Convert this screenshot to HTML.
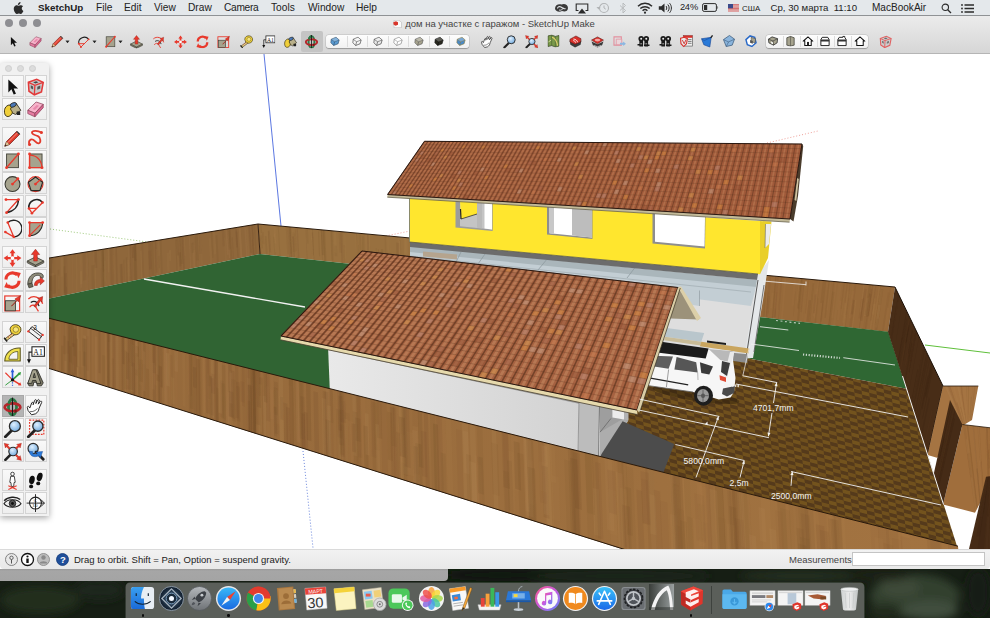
<!DOCTYPE html>
<html>
<head>
<meta charset="utf-8">
<title>SketchUp</title>
<style>
html,body{margin:0;padding:0;}
body{width:990px;height:618px;overflow:hidden;position:relative;background:#1b2418;font-family:"Liberation Sans",sans-serif;}
.abs{position:absolute;}
#desktop{left:0;top:569px;width:990px;height:48px;background:#1a2317;overflow:hidden;}
#menubar{left:0;top:0;width:990px;height:15px;background:#e4e8eb;box-shadow:0 .5px 0 .5px rgba(120,124,128,.8);color:#222;font-size:10.2px;line-height:15px;white-space:nowrap;}
#menubar span{position:absolute;top:0;}
#win{left:0;top:15px;width:990px;height:554px;background:#fff;}
#titlebar{left:0;top:0;width:990px;height:39px;background:linear-gradient(#ececec,#d6d6d6);border-bottom:1px solid #b5b5b5;box-sizing:border-box;}
#title{left:5px;top:2.8px;width:990px;text-align:center;font-size:9.5px;color:#444;line-height:12px;}
.tl{width:8px;height:8px;border-radius:50%;background:#8e8e92;top:4px;}
#status{left:0;top:534px;width:990px;height:20px;border-radius:0 0 4px 4px;background:linear-gradient(#f2f2f2,#e8e8e8);border-top:1px solid #dadada;box-sizing:border-box;font-size:9.5px;color:#222;}
#palette{left:0;top:63px;width:49px;height:453px;background:#f1f1f1;box-shadow:0 2px 6px rgba(0,0,0,.35);border-radius:3px 3px 0 0;}
#scene{left:0;top:0;}
#toolbar svg{transform:scale(.92);}
.seg{background:linear-gradient(#fdfdfd,#f1f1f1);border-radius:3px;box-shadow:0 0 0 .5px rgba(0,0,0,.12),0 .5px 1px rgba(0,0,0,.25);}
.cell{position:absolute;width:22px;height:22px;box-sizing:border-box;border:1px solid #d4d4d4;background:linear-gradient(#f9f9f9,#eeeeee);}
.cell.sel{background:#b4b4b4;border-color:#a8a8a8;}
.ptl{position:absolute;top:2px;width:7px;height:7px;border-radius:50%;background:#dcdcdc;border:.5px solid #cfcfcf;box-sizing:border-box}

</style>
</head>
<body>
<svg width="0" height="0" style="position:absolute">
<defs>
<radialGradient id="lens" cx=".4" cy=".35" r=".7"><stop offset="0" stop-color="#dff0ff"/><stop offset="1" stop-color="#6fa8dc"/></radialGradient>
<symbol id="i-sel" viewBox="0 0 16 16"><path d="M4.5 2v11l2.6-2.6 1.9 4.4 1.9-.8-1.9-4.3h3.7z" fill="#111"/></symbol>
<symbol id="i-eraser" viewBox="0 0 16 16"><path d="M1.5 9.5 8.5 2.5 14.5 4.5 7.5 12z" fill="#f8b4cb" stroke="#8a4058" stroke-width=".6"/><path d="M1.5 9.5 7.5 12v3L1.5 12.3z" fill="#e57ba1" stroke="#8a4058" stroke-width=".6"/><path d="M7.5 12l7-7.5v2.8L7.5 15z" fill="#d9658f" stroke="#8a4058" stroke-width=".6"/><path d="M5.5 8.5 9 5l2 .7-3.4 3.6z" fill="#e88aac"/></symbol>
<symbol id="i-pencil" viewBox="0 0 16 16"><path d="M1.5 14.5 3 10.5 11.5 2 14 4.5 5.5 13z" fill="#e23a2c" stroke="#6a1a14" stroke-width=".6"/><path d="M12 1.6l2.4 2.4-.9.9L11.1 2.5z" fill="#3a3a3a"/><path d="M1.5 14.5 3 10.5 5.5 13z" fill="#e3c79a" stroke="#6a4a2a" stroke-width=".4"/><path d="M1.5 14.5l.6-1.7 1.1 1.1z" fill="#222"/><path d="M4 11.5 12.3 3.2" stroke="#f79a8a" stroke-width=".8"/></symbol>
<symbol id="i-freehand" viewBox="0 0 16 16"><path d="M3 13c-1.5-3 1-5 3-4s3 4 5 3 1-5-1-6-5-1-5-3 5-2 8 0" fill="none" stroke="#e23a2c" stroke-width="1.5"/><circle cx="3" cy="13" r="1.3" fill="#e23a2c"/><circle cx="13" cy="3" r="1.3" fill="#e23a2c"/></symbol>
<symbol id="i-rect" viewBox="0 0 16 16"><rect x="3" y="2.5" width="10" height="11.5" fill="#a6a38e" stroke="#4a4a40" stroke-width=".8"/><path d="M3 14 13 2.5" stroke="#e8392c" stroke-width="1.2"/><circle cx="3" cy="14" r="1.2" fill="#e8392c"/><circle cx="13" cy="2.5" r="1.2" fill="#e8392c"/></symbol>
<symbol id="i-rrect" viewBox="0 0 16 16"><rect x="3" y="2.5" width="10.5" height="11.5" fill="#a6a38e" stroke="#4a4a40" stroke-width=".8"/><path d="M3 2.5v11.5h10.5" stroke="#e8392c" stroke-width="1.2" fill="none"/><path d="M3 3.5c6 0 10 4 10.5 10.5" stroke="#e8392c" stroke-width="1" fill="none"/><circle cx="3" cy="14" r="1.2" fill="#e8392c"/><circle cx="3" cy="2.5" r="1.2" fill="#e8392c"/><circle cx="13.5" cy="14" r="1.2" fill="#e8392c"/></symbol>
<symbol id="i-circle" viewBox="0 0 16 16"><circle cx="8" cy="8.5" r="6.3" fill="#a6a38e" stroke="#3a3a32" stroke-width=".9"/><path d="M8 8.5 12.5 4" stroke="#e8392c" stroke-width="1.1"/><circle cx="8" cy="8.5" r="1.2" fill="#e8392c"/><circle cx="12.5" cy="4" r="1.2" fill="#e8392c"/></symbol>
<symbol id="i-polygon" viewBox="0 0 16 16"><circle cx="8" cy="8.5" r="6.3" fill="none" stroke="#e8392c" stroke-width="1"/><path d="M8 2.5 14 7 11.7 14H4.3L2 7z" fill="#a6a38e" stroke="#2a2a26" stroke-width="1"/><path d="M8 8.5 12.5 4.5" stroke="#e8392c" stroke-width="1.1"/><circle cx="8" cy="8.5" r="1.2" fill="#e8392c"/></symbol>
<symbol id="i-arc" viewBox="0 0 16 16"><path d="M2.5 3h10.5L3 14" stroke="#e8392c" stroke-width="1.1" fill="none"/><path d="M13 3c0 6-4 10-10 11" stroke="#222" stroke-width="1.2" fill="none"/><circle cx="2.5" cy="3" r="1.2" fill="#e8392c"/><circle cx="13" cy="3" r="1.2" fill="#e8392c"/><circle cx="3" cy="14" r="1.2" fill="#e8392c"/></symbol>
<symbol id="i-arc2" viewBox="0 0 16 16"><path d="M2.5 10.5A6.5 6.5 0 0 1 14 5.5" stroke="#222" stroke-width="1.3" fill="none"/><path d="M14 5.5 5 14.5M2.5 10.5 9 10.5M5 14.5 2.5 10.5" stroke="#e8392c" stroke-width="1.1" fill="none"/><circle cx="14" cy="5.5" r="1.1" fill="#e8392c"/><circle cx="5" cy="14.5" r="1.1" fill="#e8392c"/><circle cx="2.5" cy="10.5" r="1.1" fill="#e8392c"/></symbol>
<symbol id="i-arc3" viewBox="0 0 16 16"><path d="M4 3A7 7 0 1 1 9 15" stroke="#222" stroke-width="1.2" fill="none"/><path d="M4 3 9 15 2 11" stroke="#e8392c" stroke-width="1.1" fill="none"/><circle cx="4" cy="3" r="1.1" fill="#e8392c"/><circle cx="9" cy="15" r="1.1" fill="#e8392c"/><circle cx="2" cy="11" r="1.1" fill="#e8392c"/></symbol>
<symbol id="i-pie" viewBox="0 0 16 16"><path d="M3 3h11c0 6-5 11-11 11z" fill="#a6a38e" stroke="#2a2a26" stroke-width=".9"/><path d="M14 3H3v11" stroke="#e8392c" stroke-width="1.1" fill="none"/><path d="M3 14 12 5" stroke="#e8392c" stroke-width="1"/><circle cx="3" cy="3" r="1.2" fill="#e8392c"/><circle cx="14" cy="3" r="1.2" fill="#e8392c"/><circle cx="3" cy="14" r="1.2" fill="#e8392c"/></symbol>
<symbol id="i-move" viewBox="0 0 16 16"><path d="M8 1 10.5 4.5H9v3h3V6l3.5 2.5L12 11V9.5H9v3h1.5L8 16 5.5 12.5H7v-3H4V11L.5 8.5 4 6v1.5h3v-3H5.5z" fill="#e8392c"/><circle cx="8" cy="8.5" r="1.6" fill="#fff"/></symbol>
<symbol id="i-pushpull" viewBox="0 0 16 16"><path d="M1 11 8 7.5 15 11 8 14.5z" fill="#a6a38e" stroke="#3a3a32" stroke-width=".7"/><path d="M1 11v1.5L8 16v-1.5zM15 11v1.5L8 16v-1.5z" fill="#7d7a68" stroke="#3a3a32" stroke-width=".5"/><path d="M8 1 11.5 5.5H9.5V11h-3V5.5H4.5z" fill="#e8392c" stroke="#8a1a12" stroke-width=".4"/></symbol>
<symbol id="i-rotate" viewBox="0 0 16 16"><path d="M2.5 8A5.5 5.5 0 0 1 12 4.2" stroke="#e8392c" stroke-width="2.6" fill="none"/><path d="M13.5 9A5.5 5.5 0 0 1 4 12.8" stroke="#e8392c" stroke-width="2.6" fill="none"/><path d="M10.5 1.5 15 2.5 13 7z" fill="#e8392c"/><path d="M5.5 15.5 1 14.5 3 10z" fill="#e8392c"/></symbol>
<symbol id="i-followme" viewBox="0 0 16 16"><path d="M1.5 12C1.5 6 5 2.5 10 2.5s5 3 4 4.5l-2-1c.5-1-1-1.5-2.5-1.5C7 4.5 5 7 5 11z" fill="#8f8c7a" stroke="#3a3a32" stroke-width=".7"/><path d="M1.5 12 5 11l1 3-3.5 1z" fill="#6d6a5a" stroke="#3a3a32" stroke-width=".6"/><path d="M7 13c0-3 2-5 5-5V6l3.5 3.2L12 12.5v-2c-1.5 0-2.5 1-2.5 2.5z" fill="#e8392c" stroke="#8a1a12" stroke-width=".4"/></symbol>
<symbol id="i-scale" viewBox="0 0 16 16"><rect x="1.5" y="2.5" width="12.5" height="12.5" fill="none" stroke="#e8392c" stroke-width="1"/><rect x="2" y="6.5" width="8.5" height="8.5" fill="#a6a38e" stroke="#3a3a32" stroke-width=".7"/><path d="M7 11 11.5 6.5 10 5 15 2 13 7.5 12 6.3 8 10.5z" fill="#e8392c" stroke="#8a1a12" stroke-width=".4"/></symbol>
<symbol id="i-offset" viewBox="0 0 16 16"><path d="M2 5C6 1.5 12 3 14 9" stroke="#e8392c" stroke-width="1.1" fill="none"/><path d="M4 8c2.5-2 6-1 7 3" stroke="#222" stroke-width="1" fill="none"/><path d="M3 12c2-3 5-2 6 1l1.5 2.5" stroke="#e8392c" stroke-width="1" fill="none"/><path d="M6.5 11 11 5.5 9.8 4.7 14 3 13.5 7.5 12.3 6.6 8 12z" fill="#e8392c" stroke="#8a1a12" stroke-width=".4"/></symbol>
<symbol id="i-tape" viewBox="0 0 16 16"><path d="M6 5.5C6 2.5 9 1 11.5 1.5s4 2.5 3.5 5-3 3.5-5 3.5H7.5z" fill="#f1d33a" stroke="#4a4020" stroke-width=".8"/><circle cx="10.8" cy="5.5" r="2.3" fill="#f8e67a" stroke="#7a6a20" stroke-width=".6"/><path d="M8 8.5 1.5 13.5 2.8 15 9.5 10z" fill="#e9d88a" stroke="#4a4020" stroke-width=".7"/><path d="M1 12.5 3.5 15.5" stroke="#222" stroke-width="1.3"/><path d="M4 11.5l.8 1M5.5 10.4l.8 1M7 9.3l.8 1" stroke="#e8392c" stroke-width=".6"/></symbol>
<symbol id="i-dim" viewBox="0 0 16 16"><path d="M2 7 11 14M5 3 14 10" stroke="#222" stroke-width=".8"/><path d="M4 4.5 13 11.5" stroke="#222" stroke-width=".7"/><path d="M2 7 5 3M11 14 14 10" stroke="#222" stroke-width=".8"/><circle cx="2" cy="7" r="1" fill="#e8392c"/><circle cx="11" cy="14" r="1" fill="#e8392c"/><circle cx="14" cy="10" r="1" fill="#e8392c"/><text x="6" y="5.5" font-size="5.5" font-family="Liberation Sans,sans-serif" fill="#222">3</text></symbol>
<symbol id="i-protractor" viewBox="0 0 16 16"><path d="M1.5 13.5C1.5 7 7 2 14.5 2.5v11z" fill="#efe04a" stroke="#5a5420" stroke-width=".9"/><path d="M5 12c0-3.5 3-6.5 7.5-6.5V12z" fill="#f4f4f4" stroke="#5a5420" stroke-width=".7"/></symbol>
<symbol id="i-text" viewBox="0 0 16 16"><rect x="5" y="1.5" width="10.5" height="8" fill="#fff" stroke="#222" stroke-width=".9"/><text x="6.2" y="8.2" font-size="6.5" font-family="Liberation Serif,serif" fill="#111">A1</text><path d="M5 6H2.5v7" stroke="#222" stroke-width=".9" fill="none"/><path d="M.8 12 2.5 15.5 4.2 12z" fill="#111"/></symbol>
<symbol id="i-axes" viewBox="0 0 16 16"><path d="M8 10 2 4" stroke="#e8392c" stroke-width=".9"/><path d="M8 10 14.5 14" stroke="#e8392c" stroke-width="1.4"/><path d="M12.5 14.5 15.5 14.8 14.5 12z" fill="#e8392c"/><path d="M8 10 14 4.5" stroke="#2e9a3a" stroke-width="1.4"/><path d="M12.3 4.3 15.2 3.3 14.5 6.3z" fill="#2e9a3a"/><path d="M8 10 2 14.5" stroke="#2e9a3a" stroke-width=".8"/><path d="M8 10V2.5" stroke="#2a5ad8" stroke-width="1.4"/><path d="M6.5 3.5 8 .5 9.5 3.5z" fill="#2a5ad8"/><path d="M8 10v5.5" stroke="#2a5ad8" stroke-width="1" stroke-dasharray="1 1"/><circle cx="8" cy="10" r="1.4" fill="#111"/></symbol>
<symbol id="i-3dtext" viewBox="0 0 16 16"><path d="M6.5 1.5h3l5 11-1.5 2.5H9.5L9 12H6.5L6 15H2.5L1.5 13z" fill="#7d7a68" stroke="#2a2a26" stroke-width=".7"/><path d="M5.5 1.5h3L12.5 13H9l-.6-2.5H5.5L4.8 13H1.5zM6 8h2L7 4.5z" fill="#a6a38e" stroke="#2a2a26" stroke-width=".7" fill-rule="evenodd"/></symbol>
<symbol id="i-paint" viewBox="0 0 16 16"><path d="M6 6 11 3.5 15 9.5 10.5 13 6.5 11z" fill="#b9b08a" stroke="#3a3628" stroke-width=".8"/><ellipse cx="8.5" cy="5" rx="3" ry="1.7" transform="rotate(-25 8.5 5)" fill="#4a78b8" stroke="#2a2a26" stroke-width=".7"/><path d="M5.5 5C2 5.5.5 9 1.5 12.5S6 15 7.5 12.5 5 9.5 7 7z" fill="#f0cf3a" stroke="#3a3010" stroke-width=".8"/><path d="M11.5 10.5h3v3h-3z" fill="#222"/></symbol>
<symbol id="i-orbit" viewBox="0 0 16 16"><ellipse cx="8" cy="8.5" rx="3.4" ry="6.6" fill="none" stroke="#2a7a46" stroke-width="2.3"/><ellipse cx="8" cy="8.7" rx="6.6" ry="3.3" fill="none" stroke="#b5262a" stroke-width="2.3"/><path d="M4.9 5.7A3.4 6.6 0 0 1 8 1.9" fill="none" stroke="#2a7a46" stroke-width="2.3"/><path d="M8 .5v15.5" stroke="#1a1a1a" stroke-width="1"/><path d="M9.5 10.3 12.5 11.8 10 13.6z" fill="#7a1518"/></symbol>
<symbol id="i-pan" viewBox="0 0 16 16"><path d="M3.2 9.3 4.8 5c.4-1 1.6-.6 1.4.3L6 6.5 7.3 2.8c.4-1 1.7-.6 1.5.4L8.3 5.5 9.8 2.6c.5-.9 1.7-.4 1.4.6L10.3 6l1.7-2.2c.6-.8 1.6-.1 1.2.8L11 9.5c-.3 2.3-1.5 3.7-2.8 4.6L4.7 15 1.7 11.3l-.6-2.5c-.1-1 1-1.3 1.5-.5z" fill="#fff" stroke="#222" stroke-width=".8" stroke-linejoin="round"/><path d="M3.5 12.2c2.3.6 4.5-.8 6.2-2.6" stroke="#222" stroke-width=".6" fill="none"/></symbol>
<symbol id="i-zoom" viewBox="0 0 16 16"><path d="M7.5 9.5 2 15" stroke="#222" stroke-width="2.4" stroke-linecap="round"/><circle cx="10" cy="6" r="4.6" fill="url(#lens)" stroke="#2a2a2a" stroke-width="1.1"/></symbol>
<symbol id="i-zoomwin" viewBox="0 0 16 16"><rect x="3" y="1" width="12" height="12" fill="none" stroke="#e8392c" stroke-width="1" stroke-dasharray="1.5 1"/><path d="M7.5 9.5 2 15" stroke="#222" stroke-width="2.4" stroke-linecap="round"/><circle cx="10" cy="6" r="4.3" fill="url(#lens)" stroke="#2a2a2a" stroke-width="1.1"/></symbol>
<symbol id="i-zoomext" viewBox="0 0 16 16"><path d="M7 10 2 15" stroke="#222" stroke-width="2.2" stroke-linecap="round"/><circle cx="8.5" cy="8" r="3.6" fill="url(#lens)" stroke="#2a2a2a" stroke-width="1"/><path d="M1 1 5 2 4 3 6 5 5 6 3 4 2 5zM15.5 1 11.5 2l1 1-2 2 1 1 2-2 1 1zM15.5 15.5l-4-1 1-1-2-2 1-1 2 2 1-1z" fill="#e8392c" stroke="#8a1a12" stroke-width=".3"/></symbol>
<symbol id="i-prev" viewBox="0 0 16 16"><circle cx="6" cy="5.5" r="4.3" fill="url(#lens)" stroke="#2a2a2a" stroke-width="1"/><path d="M8.5 8.5 14.5 14.5" stroke="#222" stroke-width="2.4" stroke-linecap="round"/><path d="M3 8c0 4 4 5.5 8 3.5l1 2 2-5.5-5.5.5 1 1.5C7 11 5 10 5.5 8z" fill="#2a7ad8" stroke="#1a4a98" stroke-width=".4"/></symbol>
<symbol id="i-poscam" viewBox="0 0 16 16"><circle cx="8" cy="2.5" r="1.5" fill="#fff" stroke="#222" stroke-width=".7"/><path d="M6.5 4.5h3l.8 5-1 .3-.3 3.2H7l-.3-3.2-1-.3z" fill="#fff" stroke="#222" stroke-width=".7"/><path d="M4.5 12.5 11.5 15.5M11.5 12.5 4.5 15.5" stroke="#e8392c" stroke-width=".9"/></symbol>
<symbol id="i-walk" viewBox="0 0 16 16"><ellipse cx="5" cy="7.5" rx="2.3" ry="3.6" transform="rotate(12 5 7.5)" fill="#111"/><ellipse cx="4.3" cy="13" rx="1.7" ry="1.6" fill="#111"/><ellipse cx="11.5" cy="5" rx="2.3" ry="3.6" transform="rotate(18 11.5 5)" fill="#111"/><ellipse cx="10.3" cy="10.5" rx="1.7" ry="1.6" fill="#111"/></symbol>
<symbol id="i-look" viewBox="0 0 16 16"><path d="M.8 9C3 5 12 4 15.2 9 12 13 4 13 .8 9z" fill="#eee" stroke="#222" stroke-width=".9"/><circle cx="8" cy="8.8" r="2.8" fill="#555" stroke="#111" stroke-width=".6"/><circle cx="8" cy="8.8" r="1.2" fill="#111"/><path d="M1 6.5C4 3 11 2.5 14.5 5.5" stroke="#222" stroke-width="1.2" fill="none"/></symbol>
<symbol id="i-section" viewBox="0 0 16 16"><circle cx="8" cy="8.5" r="5" fill="#fff" stroke="#222" stroke-width=".9"/><path d="M.5 8.5h15M8 1v15" stroke="#222" stroke-width=".8"/><path d="M12.5 5.5 15.5 8.5 12.5 11.5" fill="none" stroke="#222" stroke-width=".8"/><text x="6.5" y="7.5" font-size="3.5" font-family="Liberation Sans,sans-serif" fill="#222">C</text><text x="5.5" y="12" font-size="3" font-family="Liberation Sans,sans-serif" fill="#222">3.0</text></symbol>
<symbol id="i-component" viewBox="0 0 16 16"><path d="M2 4.5 9 2 14.5 4.5 13 12.5 7 15 2.5 12z" fill="#c9c9c9" stroke="#e23a3a" stroke-width="1.3"/><path d="M2 4.5 7.5 7 14.5 4.5M7.5 7 7 15" stroke="#e23a3a" stroke-width="1.1" fill="none"/><path d="M4 7 6 8v2.5L4 9.5zM9.5 8.2 12 7.2v2.5l-2.5 1z" fill="#555"/><path d="M6 4.5 8.5 3.5 10.5 4.5 8 5.5z" fill="#444"/></symbol>
<symbol id="i-dd" viewBox="0 0 6 4"><path d="M0 0h6L3 4z" fill="#222"/></symbol>
<!-- style cubes -->
<symbol id="i-cube" viewBox="0 0 16 16"><path d="M2.5 5.5 9.5 2.5 14 6.5 12.5 12 6 14.5 2 10.5z" fill="var(--f,#fff)" stroke="var(--s,#333)" stroke-width=".9" stroke-linejoin="round"/><path d="M2.5 5.5 7.5 9 14 6.5M7.5 9 6 14.5" stroke="var(--s,#333)" stroke-width=".8" fill="none"/><path d="M2.5 5.5 9.5 2.5 14 6.5 7.5 9z" fill="var(--t,rgba(255,255,255,.25))"/></symbol>
</defs>
</svg>

<!-- DESKTOP -->
<div id="desktop" class="abs"></div>
<svg class="abs" style="left:0;top:569px" width="990" height="49" viewBox="0 569 990 49">
<defs><filter id="bl" x="-20%" y="-20%" width="140%" height="140%"><feGaussianBlur stdDeviation="4"/></filter></defs>
<rect x="0" y="569" width="990" height="49" fill="#161e14"/>
<g filter="url(#bl)">
<ellipse cx="40" cy="600" rx="40" ry="14" fill="#222d1f"/>
<ellipse cx="100" cy="590" rx="25" ry="10" fill="#1d271a"/>
<ellipse cx="500" cy="575" rx="60" ry="6" fill="#10160f"/>
<ellipse cx="620" cy="576" rx="90" ry="5" fill="#1f281c"/>
<ellipse cx="800" cy="576" rx="60" ry="5" fill="#283224"/>
<ellipse cx="915" cy="596" rx="45" ry="22" fill="#333f2f"/><ellipse cx="900" cy="588" rx="20" ry="10" fill="#3c4838"/>
<ellipse cx="930" cy="610" rx="28" ry="10" fill="#414d3c"/><ellipse cx="880" cy="575" rx="30" ry="6" fill="#1a2217"/>
<ellipse cx="978" cy="592" rx="12" ry="24" fill="#141b12"/>
<ellipse cx="885" cy="612" rx="16" ry="8" fill="#222c1f"/>
</g>
</svg>
<div class="abs" style="left:125.5px;top:582.5px;width:738.5px;height:40px;background:#5b5f5a;border-radius:4px 4px 0 0;box-shadow:0 0 0 .5px rgba(140,145,140,.5)"></div>
<svg class="abs" style="left:129.2px;top:585.0px" width="27" height="27" viewBox="0 0 28 28"><defs><linearGradient id="fg1" x1="0" y1="0" x2="0" y2="1"><stop offset="0" stop-color="#3aa0f0"/><stop offset="1" stop-color="#1a6ad8"/></linearGradient></defs><rect x="2" y="2" width="24" height="23" rx="3" fill="#e8eef4"/><path d="M2 5a3 3 0 0 1 3-3h10.5c-2.5 5-3 9-3 12h3c0 4 .3 8 1 11H5a3 3 0 0 1-3-3z" fill="url(#fg1)"/><path d="M7.5 8.5v3M20 8.5v3" stroke="#123" stroke-width="1.2"/><path d="M6 17c4 4 12 4 16.5 0" stroke="#123" stroke-width="1.1" fill="none"/></svg>
<svg class="abs" style="left:158.0px;top:585.0px" width="27" height="27" viewBox="0 0 28 28"><defs><radialGradient id="dg"><stop offset="0" stop-color="#4a6a8a"/><stop offset="1" stop-color="#0e1a28"/></radialGradient></defs><circle cx="14" cy="14" r="12.5" fill="url(#dg)" stroke="#8a98a6" stroke-width="1"/><path d="M14 4 24 14 14 24 4 14z" fill="none" stroke="#a8b4c0" stroke-width="1.3"/><circle cx="14" cy="14" r="5.5" fill="#1a2a3a" stroke="#7a9ab8" stroke-width="1"/><circle cx="14" cy="14" r="2.6" fill="#f4f8ff"/></svg>
<svg class="abs" style="left:185.9px;top:585.0px" width="27" height="27" viewBox="0 0 28 28"><defs><linearGradient id="lg" x1="0" y1="0" x2="0" y2="1"><stop offset="0" stop-color="#b4b8bc"/><stop offset="1" stop-color="#6e7276"/></linearGradient></defs><circle cx="14" cy="14" r="12.5" fill="url(#lg)" stroke="#54585c" stroke-width=".8"/><path d="M19.5 6.5c-5 .5-8.5 4-10 8l3.5 3.5c4-1.5 7.5-5 8-10z" fill="#3c4046"/><path d="M9.5 14.5 6 15.5l3-3.5zM13 18.5l-1 3.5 3.5-3z" fill="#3c4046"/><circle cx="16.5" cy="10.5" r="1.5" fill="#c8ccd0"/><path d="M8 17.5c-1.5.5-2 2-2 3.5 1.5 0 3-.5 3.5-2z" fill="#50545a"/></svg>
<svg class="abs" style="left:215.0px;top:585.0px" width="27" height="27" viewBox="0 0 28 28"><defs><linearGradient id="sg" x1="0" y1="0" x2="0" y2="1"><stop offset="0" stop-color="#3ab8f8"/><stop offset="1" stop-color="#1a6ae0"/></linearGradient></defs><circle cx="14" cy="14" r="13" fill="#e8e8ea"/><circle cx="14" cy="14" r="11.5" fill="url(#sg)"/><path d="M21.5 6.5 12.5 12.5 15.5 15.5z" fill="#f0412e"/><path d="M6.5 21.5 15.5 15.5 12.5 12.5z" fill="#f4f4f4"/></svg>
<svg class="abs" style="left:244.5px;top:585.0px" width="27" height="27" viewBox="0 0 28 28"><circle cx="14" cy="14" r="12.5" fill="#e33b2e"/><path d="M14 14 3.2 7.8A12.5 12.5 0 0 0 11.8 26.3z" fill="#2a9f48"/><path d="M14 14 11.8 26.3A12.5 12.5 0 0 0 26.3 11.5H14z" fill="#fbc116"/><path d="M14 14h12.3A12.5 12.5 0 0 0 3.2 7.8z" fill="#e33b2e"/><circle cx="14" cy="14" r="5.8" fill="#f2f2f2"/><circle cx="14" cy="14" r="4.6" fill="#3f86ed"/></svg>
<svg class="abs" style="left:273.2px;top:585.0px" width="27" height="27" viewBox="0 0 28 28"><path d="M4 3 21 1.5 23 25 6 26.5z" fill="#a9773f"/><path d="M5.5 4 20 2.7 21.8 24 7.2 25.3z" fill="#b98a50"/><circle cx="13.5" cy="11.5" r="3" fill="#9c6d38"/><path d="M8.5 20c.5-5 9.5-5.5 10.5-.8z" fill="#9c6d38"/><path d="M21.2 4.5l2.2-.2.4 4-2.2.2zM21.6 9.5l2.2-.2.4 4-2.2.2zM22 14.5l2.2-.2.4 4-2.2.2z" fill="#d8d0c0"/><path d="M21.2 4.5l2.2-.2.4 4-2.2.2z" fill="#e8b84a"/><path d="M22 14.5l2.2-.2.4 4-2.2.2z" fill="#6ab0e0"/></svg>
<svg class="abs" style="left:301.5px;top:585.0px" width="27" height="27" viewBox="0 0 28 28"><path d="M3 3.5 24.5 2 26 24 5 26z" fill="#f8f8f8" stroke="#c8c8c8" stroke-width=".5"/><path d="M3 3.5 24.5 2 25 8.5 3.5 10z" fill="#e8443a"/><text x="6.5" y="8.5" font-size="5.5" font-family="Liberation Sans,sans-serif" fill="#fff" transform="rotate(-4 14 6)">МАРТ</text><text x="5.5" y="23.5" font-size="15" font-family="Liberation Sans,sans-serif" fill="#333" transform="rotate(-4 14 18)">30</text></svg>
<svg class="abs" style="left:330.5px;top:585.0px" width="27" height="27" viewBox="0 0 28 28"><path d="M3 4 24 2 26 24.5 5.5 26.5z" fill="#fbf3c0" stroke="#d8cc88" stroke-width=".5"/><path d="M3 4 24 2l.4 4.5-21 2z" fill="#f4d23a"/></svg>
<svg class="abs" style="left:359.5px;top:585.0px" width="27" height="27" viewBox="0 0 28 28"><path d="M2.5 5 22 2.5 24.5 23 5 25.5z" fill="#e8e0c8" stroke="#c0b8a0" stroke-width=".5"/><path d="M4 7l8-1 1.2 8-8 1z" fill="#8ac8f0"/><path d="M14 6l7-1 1 7-7 1z" fill="#f0d078"/><path d="M5.5 16.5 13 15.5l1 7-7.5 1z" fill="#a8d890"/><path d="M6 9h5v3H6z" fill="#e85a4a"/><circle cx="20.5" cy="20" r="6.5" fill="#dcdcdc" stroke="#a8a8a8" stroke-width=".8"/><circle cx="20.5" cy="20" r="3" fill="none" stroke="#888" stroke-width="1"/><circle cx="20.5" cy="20" r="1" fill="#666"/></svg>
<svg class="abs" style="left:386.5px;top:585.0px" width="27" height="27" viewBox="0 0 28 28"><rect x="1.5" y="3.5" width="22" height="21" rx="5" fill="#4cc85a"/><rect x="5" y="9.5" width="10.5" height="9" rx="1.5" fill="#e8f8ea"/><path d="M16 13l4.5-3v8L16 15z" fill="#e8f8ea"/><circle cx="21.5" cy="21" r="6" fill="#f8f8f8"/><circle cx="21.5" cy="21" r="5" fill="#4cc85a"/><path d="M19 19c0 2.5 2 5 4.5 5l.8-1.3-1.5-1-0.8.6c-.8-.4-1.5-1.2-1.8-2l.7-.7-.8-1.6z" fill="#fff"/></svg>
<svg class="abs" style="left:417.5px;top:585.0px" width="27" height="27" viewBox="0 0 28 28"><circle cx="14" cy="14" r="13" fill="#f4f4f4"/><ellipse cx="14" cy="7.8" rx="3.6" ry="5.6" fill="#f8a03a" fill-opacity=".85" transform="rotate(0 14 14)"/><ellipse cx="14" cy="7.8" rx="3.6" ry="5.6" fill="#f8d83a" fill-opacity=".85" transform="rotate(45 14 14)"/><ellipse cx="14" cy="7.8" rx="3.6" ry="5.6" fill="#a8d84a" fill-opacity=".85" transform="rotate(90 14 14)"/><ellipse cx="14" cy="7.8" rx="3.6" ry="5.6" fill="#4ac8a0" fill-opacity=".85" transform="rotate(135 14 14)"/><ellipse cx="14" cy="7.8" rx="3.6" ry="5.6" fill="#4aa0e8" fill-opacity=".85" transform="rotate(180 14 14)"/><ellipse cx="14" cy="7.8" rx="3.6" ry="5.6" fill="#8a6ae0" fill-opacity=".85" transform="rotate(225 14 14)"/><ellipse cx="14" cy="7.8" rx="3.6" ry="5.6" fill="#e05aa0" fill-opacity=".85" transform="rotate(270 14 14)"/><ellipse cx="14" cy="7.8" rx="3.6" ry="5.6" fill="#f0504a" fill-opacity=".85" transform="rotate(315 14 14)"/></svg>
<svg class="abs" style="left:445.5px;top:585.0px" width="27" height="27" viewBox="0 0 28 28"><path d="M3.5 4 20 1.5 23.5 24 7 26.5z" fill="#f8f8f8" stroke="#c8c8c8" stroke-width=".5"/><path d="M3.5 4 20 1.5l.6 4L4.1 8z" fill="#f89a2a"/><path d="M6 10.5l8.5-1.3 1 6.5L7 17z" fill="#3a8ad8"/><path d="M8.5 12.5l3.5-.5.4 2.5-3.5.5z" fill="#f86a3a"/><path d="M7.5 19.5l10-1.5M8 22l10-1.5" stroke="#b0b0b0" stroke-width="1"/><path d="M25 2.5 17.5 23 16.5 26.5 19.5 24 27 3.5z" fill="#f8a83a" stroke="#6a4a1a" stroke-width=".5"/><path d="M17.5 23l-1 3.5 3-2.5z" fill="#2a2a2a"/></svg>
<svg class="abs" style="left:475.5px;top:585.0px" width="27" height="27" viewBox="0 0 28 28"><path d="M2 20.5h24l-1.5 5.5h-21z" fill="#f4f4f4" stroke="#c0c0c0" stroke-width=".5"/><rect x="5" y="13.5" width="4" height="9" fill="#e8443a"/><rect x="10" y="9" width="4" height="13.5" fill="#f8a03a"/><rect x="15" y="3" width="4" height="19.5" fill="#3ab85a"/><rect x="20" y="7.5" width="4" height="15" fill="#3a98e8"/></svg>
<svg class="abs" style="left:505.0px;top:585.0px" width="27" height="27" viewBox="0 0 28 28"><path d="M3 6.5h22l2 9.5H1z" fill="#2a78d8"/><path d="M1 16h26v1.8H1z" fill="#1a58a8"/><rect x="7.5" y="8.5" width="13" height="5.5" fill="#78b0e8"/><rect x="9" y="9.5" width="4" height="3" fill="#f8d83a"/><path d="M13.2 17.8h1.6v6.5h-1.6z" fill="#b8c0c8"/><ellipse cx="14" cy="25.5" rx="5" ry="1.5" fill="#c8d0d8"/><path d="M14 6.5c0-3 1.5-4.5 4-5" stroke="#a8b0b8" stroke-width="1" fill="none"/></svg>
<svg class="abs" style="left:533.5px;top:585.0px" width="27" height="27" viewBox="0 0 28 28"><defs><linearGradient id="ig" x1="0" y1="0" x2="1" y2="1"><stop offset="0" stop-color="#f85a8a"/><stop offset=".5" stop-color="#c85ae0"/><stop offset="1" stop-color="#5a8af8"/></linearGradient></defs><circle cx="14" cy="14" r="13" fill="url(#ig)"/><circle cx="14" cy="14" r="10.8" fill="#fafafa"/><path d="M11.5 8.5 19 7v10.5a2.3 2.3 0 1 1-1.3-2V10l-5 1v7.8a2.3 2.3 0 1 1-1.3-2z" fill="url(#ig)"/></svg>
<svg class="abs" style="left:561.5px;top:585.0px" width="27" height="27" viewBox="0 0 28 28"><circle cx="14" cy="14" r="13" fill="#f4f4f4"/><circle cx="14" cy="14" r="11.8" fill="#f08a1e"/><path d="M14 9.5c-2-1.5-4.5-1.8-7-1.3v10.5c2.5-.5 5-.2 7 1.3 2-1.5 4.5-1.8 7-1.3V8.2c-2.5-.5-5-.2-7 1.3z" fill="#fff"/><path d="M14 9.5V20" stroke="#f08a1e" stroke-width=".8"/></svg>
<svg class="abs" style="left:590.5px;top:585.0px" width="27" height="27" viewBox="0 0 28 28"><defs><linearGradient id="ag" x1="0" y1="0" x2="0" y2="1"><stop offset="0" stop-color="#3ac0f8"/><stop offset="1" stop-color="#1a6ae8"/></linearGradient></defs><circle cx="14" cy="14" r="13" fill="#f4f4f4"/><circle cx="14" cy="14" r="11.8" fill="url(#ag)"/><path d="M14 6.5 8 20M14 6.5 20 20M6.5 16.5h15M10 10.5l-1.5-2M18 10.5l1.5-2" stroke="#fff" stroke-width="1.7" stroke-linecap="round" fill="none"/></svg>
<svg class="abs" style="left:620.1px;top:585.0px" width="27" height="27" viewBox="0 0 28 28"><rect x="1.5" y="2" width="25" height="24" rx="3" fill="#8a8e92"/><rect x="2.5" y="3" width="23" height="22" rx="2.5" fill="#6a6e72"/><circle cx="14" cy="14" r="9.5" fill="#3a3c40" stroke="#1e2022" stroke-width="1.5" stroke-dasharray="2.5 1.5"/><circle cx="14" cy="14" r="7.8" fill="#c0c4c8"/><circle cx="14" cy="14" r="6" fill="#50545a"/><path d="M14 14V7M14 14l6 3.5M14 14l-6 3.5" stroke="#c0c4c8" stroke-width="1.5"/><circle cx="14" cy="14" r="1.8" fill="#c0c4c8"/></svg>
<svg class="abs" style="left:648.0px;top:584.0px" width="27" height="27" viewBox="0 0 28 28"><defs><linearGradient id="arg" x1="0" y1="0" x2="1" y2="0"><stop offset="0" stop-color="#3a3e3a"/><stop offset="1" stop-color="#9aa0a0"/></linearGradient></defs><rect x="1" y="0" width="26" height="27" fill="url(#arg)"/><path d="M3 27C6 14 12 5 21 1.5c3 5 4.5 14 5 25.5h-3C22.5 17 21.5 11 19.5 6.5 13 10.5 9 18 7 27z" fill="#f4f4f4"/><path d="M1 27h26v-3H1z" fill="#2a2e2a" fill-opacity=".5"/></svg>
<svg class="abs" style="left:677.5px;top:585.0px" width="27" height="27" viewBox="0 0 28 28"><path d="M3 6.5 16 1.5 26 5.5 25.5 19.5 13 26.5 3.5 20.5z" fill="#e0352b"/><path d="M13 12 13 26.5 3.5 20.5 3 6.5z" fill="#c02a22"/><path d="M3 6.5 16 1.5 26 5.5 13 12z" fill="#f0483c"/><path d="M8 7.5 16.5 4.5 21.5 6.5 13.5 9.8 13.5 11.5 21.5 8.5 21.5 12 13.5 15.5 13.5 18 21.5 14.5 21.5 18 13 22.5 8 19.5 8 16 13 18.5 13 15 8 12.5z" fill="#fff" fill-opacity=".92"/></svg>
<div class="abs" style="left:711px;top:586px;width:1px;height:28px;background:#3e423e"></div>
<svg class="abs" style="left:720.5px;top:585.0px" width="27" height="27" viewBox="0 0 28 28"><path d="M1.5 6.5c0-1 .7-1.8 1.8-1.8h7l2 2.3h12.5c1 0 1.8.8 1.8 1.8V23c0 1-.8 1.8-1.8 1.8H3.3c-1 0-1.8-.8-1.8-1.8z" fill="#4aa8e8"/><path d="M1.5 9.5h25V23c0 1-.8 1.8-1.8 1.8H3.3c-1 0-1.8-.8-1.8-1.8z" fill="#5cb8f0"/><circle cx="14" cy="17" r="4.3" fill="#3a98d8"/><path d="M14 14.5v4.5M12 17.5l2 2 2-2" stroke="#5cb8f0" stroke-width="1.1" fill="none"/></svg>
<svg class="abs" style="left:749.0px;top:585.0px" width="27" height="27" viewBox="0 0 28 28"><rect x="1" y="6" width="26" height="15" fill="#f4f4f4" stroke="#c8c8c8" stroke-width=".5"/><rect x="3" y="7.5" width="22" height="2" fill="#d8d8d8"/><rect x="3" y="10.5" width="14" height="3" fill="#7a7a80"/><rect x="18" y="10.5" width="7" height="3" fill="#b08a6a"/><path d="M3 15.5h20M3 17.5h16" stroke="#c8c8c8" stroke-width=".8"/><circle cx="21" cy="22.5" r="4.8" fill="#e8e8ea"/><circle cx="21" cy="22.5" r="4" fill="#2a8af0"/><path d="M23.5 20 20 21.5 22 23.5z" fill="#f0412e"/><path d="M18.5 25 22 23.5 20 21.5z" fill="#fff"/></svg>
<svg class="abs" style="left:776.5px;top:585.0px" width="27" height="27" viewBox="0 0 28 28"><rect x="1" y="6" width="26" height="15" fill="#f4f4f4" stroke="#c8c8c8" stroke-width=".5"/><rect x="11" y="8" width="9" height="12" fill="#b8c8d8"/><rect x="2" y="7" width="24" height="1.5" fill="#d8d8d8"/><path d="M16 20 21 18 25 19.5 25 24.5 20.5 27 16.5 24.5z" fill="#e0352b"/><path d="M18 21.5 21 20.5 23 21.3 20 22.5 20 23.3 23 22.2 23 24 20.5 25.3 18 24z" fill="#fff"/></svg>
<svg class="abs" style="left:804.0px;top:585.0px" width="27" height="27" viewBox="0 0 28 28"><rect x="1" y="6" width="26" height="15" fill="#f4f4f4" stroke="#c8c8c8" stroke-width=".5"/><rect x="2" y="7" width="24" height="1.5" fill="#d8d8d8"/><path d="M4 11 14 9.5 23 11.5 20 15 10 14z" fill="#a85a36"/><path d="M17 12h6v3h-6z" fill="#7a4a28"/><path d="M16 20 21 18 25 19.5 25 24.5 20.5 27 16.5 24.5z" fill="#e0352b"/><path d="M18 21.5 21 20.5 23 21.3 20 22.5 20 23.3 23 22.2 23 24 20.5 25.3 18 24z" fill="#fff"/></svg>
<svg class="abs" style="left:835.5px;top:585.0px" width="27" height="27" viewBox="0 0 28 28"><defs><linearGradient id="tg" x1="0" y1="0" x2="1" y2="0"><stop offset="0" stop-color="#d8dcdc"/><stop offset=".5" stop-color="#f8f8f8"/><stop offset="1" stop-color="#c8cccc"/></linearGradient></defs><path d="M5 4.5h18L20.8 25c-.1 1-1 1.5-2 1.5H9.2c-1 0-1.9-.5-2-1.5z" fill="url(#tg)" fill-opacity=".92"/><ellipse cx="14" cy="4.5" rx="9" ry="2" fill="#eef0f0" stroke="#b8bcbc" stroke-width=".6"/><path d="M9.5 8 10.5 24M14 8v16M18.5 8 17.5 24" stroke="#c0c4c4" stroke-width=".6"/></svg>
<div class="abs" style="left:141.5px;top:614px;width:2.5px;height:2.5px;border-radius:50%;background:#0c0c0c"></div>
<div class="abs" style="left:227.3px;top:614px;width:2.5px;height:2.5px;border-radius:50%;background:#0c0c0c"></div>
<div class="abs" style="left:689.8px;top:614px;width:2.5px;height:2.5px;border-radius:50%;background:#0c0c0c"></div>

<div class="abs" style="left:0;top:566px;width:448px;height:15px;background:linear-gradient(#8c8c8c,#a6a6a6 35%,#a4a4a4);border-radius:0 0 4px 0"></div>
<!-- APP WINDOW -->
<div id="win" class="abs">
  <div id="titlebar" class="abs">
    <div class="tl abs" style="left:5px"></div>
    <div class="tl abs" style="left:19px"></div>
    <div class="tl abs" style="left:33px"></div>
    <svg class="abs" style="left:393px;top:4.5px" width="9" height="8" viewBox="0 0 9 8"><path d="M1 .3h5l2.5 2V7.7H1z" fill="#fafafa" stroke="#b0b0b0" stroke-width=".5"/><path d="M.3 2.2 3 1.2 5 2.3 5 4.8 2.6 5.8.5 4.6z" fill="#d8352b"/></svg>
    <div id="title" class="abs">дом на участке с гаражом - SketchUp Make</div>
  </div>
  <div id="status" class="abs">
    <span class="abs" style="left:74px;top:4px;line-height:12px;white-space:nowrap">Drag to orbit. Shift = Pan, Option = suspend gravity.</span>
    <span class="abs" style="left:789px;top:4px;line-height:12px;color:#444">Measurements</span>
    <div class="abs" style="left:852px;top:2px;width:132.5px;height:13.5px;background:#fff;border:1px solid #c4c4c4;box-sizing:border-box"></div>
  </div>
</div>

<!-- SCENE -->
<svg id="scene" class="abs" width="990" height="618" viewBox="0 0 990 618" style="clip-path:inset(54px 0 69px 0)">
<defs>
<pattern id="pave" width="2" height="2" patternUnits="userSpaceOnUse" patternTransform="matrix(7.6,2,0.4,3.8,700,400)">
<rect width="2" height="2" fill="#553a1b"/><rect width="1" height="1" fill="#73531d"/><rect x="1" y="1" width="1" height="1" fill="#70501d"/>
</pattern>
</defs>
<rect x="0" y="54" width="990" height="496" fill="#fff"/>
<line x1="264" y1="54" x2="281" y2="226" stroke="#4868de" stroke-width="0.9" />
<line x1="50" y1="229" x2="260" y2="257" stroke="#6fae3c" stroke-width="0.9" stroke-dasharray="1 2" stroke-opacity=".75"/>
<line x1="925" y1="345" x2="990" y2="353" stroke="#5fbf3a" stroke-width="1" />
<line x1="767" y1="143" x2="818" y2="131" stroke="#e0564a" stroke-width="0.8" stroke-dasharray="1 2" stroke-opacity=".7"/>
<line x1="385.8" y1="236" x2="410" y2="231" stroke="#e0564a" stroke-width="0.8" stroke-dasharray="1 2" stroke-opacity=".7"/>
<g><polygon points="40,259.5 258,224 260,254 40,300.5" fill="#8f673b" /><path d="M125.8 257.4L127.1 257.2L127.7 282L126.5 282.2Z" fill="#4a2c14" fill-opacity="0.07"/><path d="M50.9 257.7L53.1 257.4L53.2 273.2L50.9 273.6Z" fill="#4a2c14" fill-opacity="0.05"/><path d="M191.8 244.4L194.2 244L195.3 267.7L192.9 268.2Z" fill="#c9a06a" fill-opacity="0.05"/><path d="M80.4 252.9L81.7 252.7L82.1 287.6L80.8 287.9Z" fill="#c9a06a" fill-opacity="0.06"/><path d="M175.2 238.5L176.2 238.3L177.5 271.4L176.6 271.6Z" fill="#4a2c14" fill-opacity="0.07"/><path d="M155 240.8L156.5 240.5L157.6 272.4L156.1 272.7Z" fill="#4a2c14" fill-opacity="0.08"/><path d="M211 231.7L212.2 231.5L213.5 257.7L212.3 258Z" fill="#4a2c14" fill-opacity="0.06"/><path d="M51.4 273L54.2 272.5L54.3 297.5L51.5 298.1Z" fill="#c9a06a" fill-opacity="0.07"/><path d="M181.8 236.4L183.4 236.1L184.9 269.4L183.2 269.7Z" fill="#4a2c14" fill-opacity="0.08"/><path d="M195.2 234.2L197.7 233.8L198.9 260L196.4 260.5Z" fill="#4a2c14" fill-opacity="0.06"/><path d="M86.6 251.9L88 251.7L88.5 290.2L87.2 290.5Z" fill="#4a2c14" fill-opacity="0.08"/><path d="M63.1 266.6L65.3 266.2L65.5 293.1L63.3 293.6Z" fill="#4a2c14" fill-opacity="0.06"/><path d="M133.7 244.2L136.4 243.8L137.5 279.9L134.7 280.5Z" fill="#4a2c14" fill-opacity="0.06"/><path d="M183.7 236.1L184.9 235.9L185.8 255.8L184.5 256.1Z" fill="#c9a06a" fill-opacity="0.07"/><path d="M168.9 250.2L170.9 249.8L171.3 260.8L169.3 261.2Z" fill="#c9a06a" fill-opacity="0.08"/><path d="M141.4 243L143.1 242.7L144.3 278.5L142.5 278.8Z" fill="#4a2c14" fill-opacity="0.05"/><path d="M129.3 245L130.4 244.8L131.4 281.2L130.3 281.4Z" fill="#4a2c14" fill-opacity="0.08"/><path d="M188.7 235.3L189.7 235.1L191.2 268.5L190.2 268.8Z" fill="#c9a06a" fill-opacity="0.09"/><path d="M157.8 240.3L159.6 240L160.9 275L159.1 275.3Z" fill="#c9a06a" fill-opacity="0.05"/><path d="M46.8 269L50.3 268.4L50.4 298.3L46.8 299.1Z" fill="#4a2c14" fill-opacity="0.09"/><path d="M235.1 227.7L236.8 227.4L238 247.2L236.3 247.6Z" fill="#4a2c14" fill-opacity="0.08"/><path d="M127.3 260.1L128.7 259.8L129.3 281.5L127.9 281.8Z" fill="#c9a06a" fill-opacity="0.08"/><path d="M101.7 249.4L103.9 249.1L104.6 286.8L102.5 287.3Z" fill="#4a2c14" fill-opacity="0.07"/><path d="M251.8 239.3L253.1 239.1L254.2 255.2L252.8 255.5Z" fill="#4a2c14" fill-opacity="0.05"/><path d="M94.3 262.5L95.8 262.3L96.2 288.6L94.7 288.9Z" fill="#c9a06a" fill-opacity="0.08"/><path d="M64.3 273.5L67 273L67.2 294.7L64.5 295.3Z" fill="#4a2c14" fill-opacity="0.08"/><path d="M127.6 245.2L130.1 244.8L131 276.5L128.4 277Z" fill="#c9a06a" fill-opacity="0.05"/><path d="M75.7 253.7L77.2 253.4L77.6 290.7L76.1 291Z" fill="#c9a06a" fill-opacity="0.07"/><path d="M131.8 246.9L133.9 246.6L134.2 257.7L132.1 258.1Z" fill="#4a2c14" fill-opacity="0.09"/><path d="M150.7 241.5L153.3 241L154.5 276.3L151.9 276.8Z" fill="#4a2c14" fill-opacity="0.07"/><path d="M109.9 248.1L111.8 247.8L112.6 285.2L110.7 285.6Z" fill="#4a2c14" fill-opacity="0.09"/><path d="M148.1 250.8L150.8 250.3L151.7 276.9L149 277.5Z" fill="#4a2c14" fill-opacity="0.05"/><path d="M41.2 262.8L44.4 262.3L44.4 286.3L41.2 286.9Z" fill="#4a2c14" fill-opacity="0.07"/><path d="M176.8 237.2L179 236.9L180.4 270.8L178.2 271.3Z" fill="#c9a06a" fill-opacity="0.07"/><path d="M178.7 252.4L180.9 252L181.5 265.9L179.3 266.4Z" fill="#4a2c14" fill-opacity="0.07"/><path d="M155.1 249.1L157 248.8L157.9 274.6L156 275Z" fill="#c9a06a" fill-opacity="0.05"/><path d="M177.6 237.1L180.1 236.7L181.6 270.6L179 271.1Z" fill="#4a2c14" fill-opacity="0.05"/><path d="M60.9 256.1L63.7 255.6L64 294.2L61.2 294.7Z" fill="#c9a06a" fill-opacity="0.05"/><path d="M238.5 227.2L240.6 226.8L242.5 257.7L240.3 258.2Z" fill="#c9a06a" fill-opacity="0.08"/><path d="M84.9 252.2L87 251.9L87.5 290.5L85.4 290.9Z" fill="#c9a06a" fill-opacity="0.04"/><path d="M176.5 237.6L178.1 237.3L178.9 255.2L177.2 255.5Z" fill="#4a2c14" fill-opacity="0.09"/><path d="M221.8 229.9L224 229.5L225 246.1L222.7 246.5Z" fill="#4a2c14" fill-opacity="0.05"/><path d="M148.2 241.9L150.8 241.5L151.8 269.1L149.1 269.7Z" fill="#4a2c14" fill-opacity="0.08"/><path d="M65.5 255.3L66.7 255.1L67 286.6L65.7 286.9Z" fill="#c9a06a" fill-opacity="0.08"/><path d="M63.9 255.6L67.1 255.1L67.4 294.7L64.2 295.4Z" fill="#4a2c14" fill-opacity="0.09"/><path d="M112 247.8L113.2 247.6L114.1 284.8L112.8 285.1Z" fill="#4a2c14" fill-opacity="0.05"/><path d="M123 259.9L124.6 259.6L125.2 282.5L123.6 282.8Z" fill="#4a2c14" fill-opacity="0.04"/><path d="M107.7 248.5L108.7 248.3L109.5 285.8L108.5 286Z" fill="#c9a06a" fill-opacity="0.05"/><path d="M227.3 229L228.6 228.8L230.3 257.9L228.9 258.2Z" fill="#c9a06a" fill-opacity="0.09"/><path d="M130 244.8L132.6 244.4L133.6 280.7L131 281.3Z" fill="#4a2c14" fill-opacity="0.05"/><path d="M60.3 256.2L63.2 255.7L63.3 276.4L60.4 276.9Z" fill="#c9a06a" fill-opacity="0.07"/><path d="M115.4 247.2L116.9 247L117.8 284.1L116.3 284.4Z" fill="#4a2c14" fill-opacity="0.09"/><path d="M253.5 224.7L255 224.5L257 254.6L255.5 254.9Z" fill="#4a2c14" fill-opacity="0.06"/><path d="M159.7 240L161.5 239.7L162.8 274.5L161 274.9Z" fill="#4a2c14" fill-opacity="0.06"/><path d="M52.1 263.6L53.3 263.4L53.4 280.6L52.2 280.8Z" fill="#c9a06a" fill-opacity="0.07"/><path d="M208.7 238.3L210.9 238L212.3 264.1L210.1 264.5Z" fill="#c9a06a" fill-opacity="0.07"/><path d="M52.7 275.3L56 274.7L56 293.3L52.8 293.9Z" fill="#4a2c14" fill-opacity="0.07"/><path d="M166.6 252.8L169 252.4L169.7 271.3L167.3 271.8Z" fill="#c9a06a" fill-opacity="0.07"/><path d="M102.6 249.3L103.6 249.1L104.1 271.5L103 271.7Z" fill="#4a2c14" fill-opacity="0.07"/><path d="M191.5 243L193.4 242.6L193.9 252.7L191.9 253Z" fill="#4a2c14" fill-opacity="0.07"/><path d="M197.6 233.8L198.5 233.7L200.1 266.7L199.2 266.9Z" fill="#c9a06a" fill-opacity="0.05"/><path d="M212.9 231.3L215.2 231L216.4 254.1L214.1 254.5Z" fill="#c9a06a" fill-opacity="0.07"/><path d="M194.5 236.8L195.4 236.6L196.8 267.4L195.9 267.5Z" fill="#4a2c14" fill-opacity="0.04"/><path d="M57.5 270L59.3 269.7L59.5 296.4L57.7 296.8Z" fill="#4a2c14" fill-opacity="0.06"/><path d="M158.5 255.9L159.5 255.7L160 267.9L158.9 268.2Z" fill="#4a2c14" fill-opacity="0.06"/><path d="M227.4 229L229.6 228.6L230.8 249L228.6 249.5Z" fill="#4a2c14" fill-opacity="0.07"/><path d="M79.9 271.5L82.2 271.1L82.4 283.9L80.1 284.4Z" fill="#c9a06a" fill-opacity="0.08"/><path d="M102.9 249.3L105.9 248.8L106.6 286.4L103.6 287Z" fill="#4a2c14" fill-opacity="0.06"/><path d="M79.4 253.1L81.3 252.8L81.7 288.3L79.8 288.7Z" fill="#c9a06a" fill-opacity="0.05"/><path d="M245.9 226L247.6 225.7L249.5 256.2L247.8 256.6Z" fill="#c9a06a" fill-opacity="0.07"/><path d="M134.2 244.2L136 243.9L136.4 260.6L134.6 260.9Z" fill="#4a2c14" fill-opacity="0.09"/><path d="M107.4 248.5L109 248.3L109.5 272.2L107.9 272.5Z" fill="#c9a06a" fill-opacity="0.08"/><path d="M192.7 250.3L195.1 249.9L195.9 267.5L193.6 268Z" fill="#c9a06a" fill-opacity="0.06"/><path d="M215.5 235.5L217.3 235.2L218.8 262.7L217 263.1Z" fill="#4a2c14" fill-opacity="0.06"/><path d="M119.7 264.5L122.2 264.1L122.7 283L120.2 283.6Z" fill="#4a2c14" fill-opacity="0.06"/><path d="M86.5 251.9L87.9 251.7L88.4 290.3L87 290.6Z" fill="#c9a06a" fill-opacity="0.09"/><path d="M154.3 240.9L155.5 240.7L156.7 275.8L155.5 276.1Z" fill="#4a2c14" fill-opacity="0.05"/><path d="M179.7 236.8L182.1 236.4L183.3 263.7L180.9 264.1Z" fill="#4a2c14" fill-opacity="0.06"/><path d="M58 275.9L59.8 275.5L59.8 288.7L58 289Z" fill="#c9a06a" fill-opacity="0.05"/><path d="M112.9 255L114.4 254.8L114.9 274.2L113.4 274.5Z" fill="#c9a06a" fill-opacity="0.04"/><path d="M49.4 276L52.3 275.5L52.4 297.9L49.5 298.5Z" fill="#4a2c14" fill-opacity="0.09"/><path d="M228.5 228.8L230.5 228.5L232.3 259.9L230.3 260.3Z" fill="#4a2c14" fill-opacity="0.07"/><path d="M248.4 225.6L250.1 225.3L251.9 253L250.2 253.3Z" fill="#4a2c14" fill-opacity="0.08"/><path d="M103.2 249.2L106.2 248.7L107 286.3L103.9 287Z" fill="#c9a06a" fill-opacity="0.07"/><path d="M71.7 254.3L73 254.1L73.4 293.5L72.1 293.7Z" fill="#c9a06a" fill-opacity="0.04"/><path d="M120.6 264L122.5 263.7L123 283L121.1 283.4Z" fill="#4a2c14" fill-opacity="0.05"/><path d="M251.6 225L253.2 224.8L254.1 238.8L252.5 239.1Z" fill="#4a2c14" fill-opacity="0.05"/><path d="M199.1 233.6L201.5 233.2L203.1 266L200.7 266.5Z" fill="#c9a06a" fill-opacity="0.05"/><path d="M223.8 237.6L225.7 237.3L227 261L225.1 261.4Z" fill="#c9a06a" fill-opacity="0.05"/><path d="M100.4 249.7L103.1 249.2L103.8 287L101.1 287.6Z" fill="#4a2c14" fill-opacity="0.06"/><path d="M198.7 233.6L201.1 233.3L202.1 253.5L199.7 254Z" fill="#4a2c14" fill-opacity="0.04"/><path d="M57.4 274.6L59.5 274.2L59.6 295.2L57.5 295.6Z" fill="#c9a06a" fill-opacity="0.06"/><path d="M91.4 265.4L94.6 264.8L95 288.9L91.8 289.6Z" fill="#4a2c14" fill-opacity="0.06"/><path d="M87 257.2L88.1 257L88.6 290.2L87.5 290.5Z" fill="#c9a06a" fill-opacity="0.05"/><path d="M133.2 244.3L135.8 243.9L136.8 280L134.2 280.6Z" fill="#4a2c14" fill-opacity="0.09"/><path d="M93.1 250.8L95 250.5L95.5 279.3L93.6 279.7Z" fill="#c9a06a" fill-opacity="0.04"/><path d="M50.2 276.4L51.5 276.1L51.5 290.8L50.2 291Z" fill="#4a2c14" fill-opacity="0.05"/><path d="M251.1 225.1L252.6 224.9L254.6 255.1L253 255.5Z" fill="#4a2c14" fill-opacity="0.08"/><path d="M244.2 226.2L245.8 226L247.7 256.6L246.1 256.9Z" fill="#c9a06a" fill-opacity="0.09"/><path d="M140.3 250.9L141.7 250.6L142.6 278.8L141.2 279.1Z" fill="#c9a06a" fill-opacity="0.08"/><path d="M228 228.9L229.9 228.6L231.7 260L229.8 260.4Z" fill="#c9a06a" fill-opacity="0.04"/><path d="M94.2 250.7L96.9 250.2L97.2 267.7L94.5 268.2Z" fill="#4a2c14" fill-opacity="0.09"/><path d="M238.6 227.2L240.7 226.8L242.6 257.7L240.4 258.1Z" fill="#c9a06a" fill-opacity="0.06"/><path d="M103.8 260.8L105.8 260.4L106.2 281.7L104.3 282.1Z" fill="#c9a06a" fill-opacity="0.05"/><path d="M231.7 237.2L232.8 237L234.1 259.5L233 259.7Z" fill="#4a2c14" fill-opacity="0.05"/><path d="M82.8 252.5L85.8 252L86.2 279.9L83.1 280.5Z" fill="#4a2c14" fill-opacity="0.05"/><path d="M225.4 229.3L227.1 229L228.6 254.7L226.9 255.1Z" fill="#c9a06a" fill-opacity="0.09"/><path d="M51.7 260L53.6 259.7L53.6 276.6L51.8 276.9Z" fill="#c9a06a" fill-opacity="0.06"/><path d="M235.8 231.7L237.2 231.4L238.8 258.5L237.4 258.8Z" fill="#4a2c14" fill-opacity="0.07"/><path d="M99.4 249.8L101.3 249.5L101.6 268.3L99.8 268.7Z" fill="#c9a06a" fill-opacity="0.05"/></g>
<g><polygon points="258,224 420,238.9 420,271.6 260,254" fill="#98703f" /><path d="M259.7 224.2L260.9 224.3L262.8 254.3L261.7 254.2Z" fill="#c9a06a" fill-opacity="0.07"/><path d="M267.8 230.9L268.5 231L270.1 255.1L269.3 255Z" fill="#4a2c14" fill-opacity="0.07"/><path d="M320.8 229.8L322 229.9L323.2 260.2L322 260Z" fill="#4a2c14" fill-opacity="0.06"/><path d="M396.2 242.6L399.1 242.9L399.3 269.3L396.5 269Z" fill="#4a2c14" fill-opacity="0.09"/><path d="M323 230L325.2 230.2L326.5 261.3L324.2 261.1Z" fill="#4a2c14" fill-opacity="0.07"/><path d="M358.3 233.2L360.8 233.5L361.4 257.4L358.9 257.1Z" fill="#4a2c14" fill-opacity="0.05"/><path d="M338.7 233.1L341.2 233.4L341.9 252.8L339.4 252.5Z" fill="#4a2c14" fill-opacity="0.05"/><path d="M410 245.9L412.8 246.2L412.9 270.8L410.1 270.5Z" fill="#c9a06a" fill-opacity="0.07"/><path d="M389.3 236.1L390.3 236.2L390.7 260.8L389.6 260.7Z" fill="#c9a06a" fill-opacity="0.05"/><path d="M290.8 227L292.2 227.1L293.8 257.7L292.4 257.6Z" fill="#c9a06a" fill-opacity="0.08"/><path d="M264.8 236L266.5 236.2L267.6 254.8L266 254.7Z" fill="#4a2c14" fill-opacity="0.07"/><path d="M356 233L357.3 233.1L357.9 258.4L356.7 258.2Z" fill="#4a2c14" fill-opacity="0.06"/><path d="M261.9 231.7L263.7 231.9L264.5 244.2L262.7 244Z" fill="#4a2c14" fill-opacity="0.05"/><path d="M330.9 230.7L331.8 230.8L332.9 262L332 261.9Z" fill="#4a2c14" fill-opacity="0.04"/><path d="M357.9 244.9L358.7 244.9L359.2 264.9L358.4 264.8Z" fill="#4a2c14" fill-opacity="0.06"/><path d="M411.4 252.2L412.4 252.3L412.4 270.7L411.4 270.6Z" fill="#4a2c14" fill-opacity="0.09"/><path d="M334.4 245.4L337 245.7L337.3 256.3L334.8 256Z" fill="#4a2c14" fill-opacity="0.06"/><path d="M377.9 249.5L378.9 249.6L379.2 267.1L378.2 267Z" fill="#4a2c14" fill-opacity="0.09"/><path d="M289.3 226.9L290.4 227L292.1 257.5L291 257.4Z" fill="#4a2c14" fill-opacity="0.09"/><path d="M364.8 233.8L367.3 234.1L367.9 261.7L365.4 261.4Z" fill="#c9a06a" fill-opacity="0.06"/><path d="M397.7 236.8L399.6 237L399.8 267.8L398 267.6Z" fill="#c9a06a" fill-opacity="0.06"/><path d="M384.7 235.7L386 235.8L386.4 265.2L385.1 265Z" fill="#4a2c14" fill-opacity="0.05"/><path d="M375.8 248L376.5 248.1L376.7 260L376 259.9Z" fill="#4a2c14" fill-opacity="0.07"/><path d="M305.5 228.9L306.1 228.9L307.5 259.2L306.9 259.2Z" fill="#4a2c14" fill-opacity="0.08"/><path d="M277.7 225.8L278.7 225.9L280.5 256.3L279.5 256.1Z" fill="#4a2c14" fill-opacity="0.06"/><path d="M292.2 236.2L294 236.4L295.1 257.9L293.4 257.7Z" fill="#4a2c14" fill-opacity="0.09"/><path d="M294.8 228.9L295.7 228.9L296.8 250.9L295.9 250.8Z" fill="#4a2c14" fill-opacity="0.05"/><path d="M260.3 232.7L262 232.8L263.4 254.4L261.7 254.2Z" fill="#c9a06a" fill-opacity="0.08"/><path d="M295.5 227.4L297.8 227.7L299.4 258.3L297.1 258.1Z" fill="#4a2c14" fill-opacity="0.08"/><path d="M259.8 224.2L261.4 224.3L263 248.5L261.4 248.3Z" fill="#4a2c14" fill-opacity="0.07"/><path d="M387.4 235.9L388.5 236L388.7 256L387.7 255.9Z" fill="#c9a06a" fill-opacity="0.08"/><path d="M259.7 235.4L261.8 235.6L263 254.3L260.9 254.1Z" fill="#4a2c14" fill-opacity="0.05"/><path d="M293.3 232.4L294 232.5L295.1 253.8L294.4 253.8Z" fill="#c9a06a" fill-opacity="0.05"/><path d="M344 231.9L345.5 232L346.3 259L344.8 258.8Z" fill="#c9a06a" fill-opacity="0.05"/><path d="M398.9 241.2L399.7 241.3L399.8 255.4L399.1 255.3Z" fill="#c9a06a" fill-opacity="0.06"/><path d="M399 240.9L400.4 241L400.6 267.8L399.2 267.6Z" fill="#c9a06a" fill-opacity="0.09"/><path d="M330.3 230.6L332.6 230.9L333.7 260.6L331.4 260.3Z" fill="#4a2c14" fill-opacity="0.06"/><path d="M289.9 226.9L291.7 227.1L293.3 257.7L291.5 257.5Z" fill="#4a2c14" fill-opacity="0.09"/><path d="M310.5 229.3L311.4 229.4L311.9 239.6L311 239.5Z" fill="#c9a06a" fill-opacity="0.08"/><path d="M268.1 230.4L269.8 230.6L271.2 252.4L269.5 252.2Z" fill="#4a2c14" fill-opacity="0.08"/><path d="M404.9 237.5L407.7 237.8L407.8 270.3L405.1 270Z" fill="#c9a06a" fill-opacity="0.08"/><path d="M357.2 233.1L359.5 233.3L360.3 265L358 264.8Z" fill="#c9a06a" fill-opacity="0.05"/><path d="M306.5 228.5L307.9 228.6L308.6 243.7L307.2 243.6Z" fill="#4a2c14" fill-opacity="0.06"/><path d="M413.6 238.3L415.4 238.5L415.5 271.1L413.7 270.9Z" fill="#4a2c14" fill-opacity="0.08"/><path d="M311.2 237.2L313.2 237.4L314.2 260L312.2 259.7Z" fill="#c9a06a" fill-opacity="0.05"/><path d="M258.2 224L259.2 224.1L261.1 254.1L260.2 254Z" fill="#4a2c14" fill-opacity="0.08"/><path d="M285.7 226.5L287.2 226.7L288.8 254.5L287.2 254.3Z" fill="#4a2c14" fill-opacity="0.05"/><path d="M368.1 234.1L369.8 234.3L370.3 258.8L368.6 258.6Z" fill="#c9a06a" fill-opacity="0.08"/><path d="M356.3 239.4L357.7 239.6L358.4 264.8L357 264.7Z" fill="#c9a06a" fill-opacity="0.04"/><path d="M289 226.8L290.1 227L291.5 253.7L290.4 253.6Z" fill="#4a2c14" fill-opacity="0.06"/><path d="M340.3 231.6L342.5 231.8L343.5 263.2L341.4 262.9Z" fill="#4a2c14" fill-opacity="0.08"/><path d="M361.9 236.3L364.1 236.5L364.5 254.6L362.3 254.4Z" fill="#4a2c14" fill-opacity="0.06"/><path d="M399.8 240.2L401 240.3L401.2 256L400 255.9Z" fill="#4a2c14" fill-opacity="0.05"/><path d="M295.4 227.4L296.6 227.5L298.2 258.2L296.9 258.1Z" fill="#c9a06a" fill-opacity="0.08"/><path d="M273.3 227L275.7 227.2L276.6 243.9L274.3 243.6Z" fill="#c9a06a" fill-opacity="0.06"/><path d="M287.5 226.7L289.3 226.9L290.9 257.4L289.1 257.2Z" fill="#4a2c14" fill-opacity="0.08"/><path d="M367.1 234L368.8 234.2L369.3 259.5L367.6 259.4Z" fill="#4a2c14" fill-opacity="0.08"/><path d="M403.8 237.4L405.4 237.6L405.6 270L404 269.8Z" fill="#c9a06a" fill-opacity="0.08"/><path d="M380.9 249L383.1 249.3L383.3 267.6L381.2 267.3Z" fill="#4a2c14" fill-opacity="0.07"/><path d="M273.3 237.3L274.7 237.4L275.8 255.7L274.4 255.6Z" fill="#4a2c14" fill-opacity="0.06"/><path d="M355.1 232.9L356.6 233.1L357.4 263.9L355.9 263.8Z" fill="#c9a06a" fill-opacity="0.06"/><path d="M333.6 231L336.2 231.2L336.9 252.9L334.3 252.6Z" fill="#c9a06a" fill-opacity="0.07"/><path d="M273.5 233.6L275.2 233.8L276.3 252.2L274.7 252Z" fill="#c9a06a" fill-opacity="0.07"/><path d="M320.8 229.8L323.4 230L324.4 255.3L321.9 255.1Z" fill="#4a2c14" fill-opacity="0.09"/><path d="M312.2 229L312.9 229L314.3 260L313.5 259.9Z" fill="#4a2c14" fill-opacity="0.07"/><path d="M311.8 232.4L312.9 232.5L313.9 255.3L312.8 255.2Z" fill="#4a2c14" fill-opacity="0.08"/><path d="M318 231.5L319.1 231.6L320.1 256.3L319 256.2Z" fill="#4a2c14" fill-opacity="0.07"/><path d="M292.3 232.6L294.8 232.8L295.8 252.2L293.3 252Z" fill="#4a2c14" fill-opacity="0.05"/><path d="M343.5 245L344.4 245.1L344.9 263.3L344.1 263.2Z" fill="#4a2c14" fill-opacity="0.05"/><path d="M323.4 230L324.4 230.1L325.6 261.2L324.6 261.1Z" fill="#4a2c14" fill-opacity="0.06"/></g>
<line x1="40" y1="259.5" x2="258" y2="224" stroke="#2a1a0c" stroke-width="1" />
<line x1="258" y1="224" x2="420" y2="238.9" stroke="#2a1a0c" stroke-width="1" />
<line x1="258" y1="224" x2="260" y2="254" stroke="#3a2412" stroke-width="1" />
<polygon points="40,300.5 260,254 420,271.6 420,425 40,330" fill="#306433" />
<line x1="144" y1="279" x2="305" y2="307" stroke="#f2f2f2" stroke-width="1.3" />
<g><polygon points="762,275 895,287 888,332 759,317" fill="#96693a" /><path d="M814.9 294.4L816.7 294.6L814.7 313.3L812.9 313.2Z" fill="#4a2c14" fill-opacity="0.08"/><path d="M881.1 289L883.3 289.2L877.2 330.7L875 330.5Z" fill="#4a2c14" fill-opacity="0.09"/><path d="M846.9 282.7L847.9 282.8L845.4 302.5L844.4 302.4Z" fill="#4a2c14" fill-opacity="0.05"/><path d="M880.7 289.6L883 289.8L877.4 327.8L875.2 327.5Z" fill="#c9a06a" fill-opacity="0.08"/><path d="M864.4 288.8L866.7 289L862.3 320.9L860.1 320.6Z" fill="#4a2c14" fill-opacity="0.08"/><path d="M833.2 281.4L834.3 281.5L829.2 325.2L828.2 325Z" fill="#4a2c14" fill-opacity="0.05"/><path d="M824.7 280.7L826.3 280.8L821.7 321.8L820.2 321.6Z" fill="#4a2c14" fill-opacity="0.07"/><path d="M847.1 291.2L849.3 291.4L844.8 327L842.6 326.7Z" fill="#c9a06a" fill-opacity="0.07"/><path d="M765.5 275.3L767.2 275.5L764.1 316.6L762.5 316.4Z" fill="#4a2c14" fill-opacity="0.06"/><path d="M880.4 285.7L881 285.7L875.3 324.9L874.7 324.8Z" fill="#4a2c14" fill-opacity="0.06"/><path d="M829.3 281.1L831.4 281.3L828 310.5L826 310.2Z" fill="#c9a06a" fill-opacity="0.05"/><path d="M869 296.2L870.4 296.4L867.7 315.2L866.3 315Z" fill="#c9a06a" fill-opacity="0.08"/><path d="M803.1 285.3L804.2 285.4L801.6 312.3L800.5 312.1Z" fill="#4a2c14" fill-opacity="0.08"/><path d="M878.7 285.5L880.4 285.7L873.9 330.4L872.2 330.2Z" fill="#c9a06a" fill-opacity="0.07"/><path d="M844.6 303L846.7 303.2L844.3 322.8L842.1 322.5Z" fill="#c9a06a" fill-opacity="0.07"/><path d="M848.4 297.9L849.3 298L845.6 327.1L844.7 327Z" fill="#4a2c14" fill-opacity="0.04"/><path d="M861.1 298.9L863.6 299.2L861 318.5L858.5 318.2Z" fill="#4a2c14" fill-opacity="0.05"/><path d="M799.3 285.4L800.7 285.5L798.5 308.5L797.1 308.3Z" fill="#4a2c14" fill-opacity="0.07"/><path d="M765.6 292.8L766.3 292.8L764.4 317.6L763.7 317.5Z" fill="#4a2c14" fill-opacity="0.06"/><path d="M838.2 281.9L840.6 282.1L835.3 325.9L833 325.6Z" fill="#c9a06a" fill-opacity="0.05"/><path d="M780.9 276.7L781.4 276.8L778.6 310L778.1 310Z" fill="#4a2c14" fill-opacity="0.08"/><path d="M776.7 291.9L777.3 292L775.1 318.9L774.6 318.8Z" fill="#4a2c14" fill-opacity="0.08"/><path d="M852.6 299.7L854.9 300L853 314.4L850.7 314.2Z" fill="#4a2c14" fill-opacity="0.09"/><path d="M793.8 277.9L796.2 278.1L793.6 306.7L791.2 306.4Z" fill="#c9a06a" fill-opacity="0.04"/><path d="M801.2 278.5L803.1 278.7L798.9 321.6L797 321.4Z" fill="#4a2c14" fill-opacity="0.07"/><path d="M817.8 280L819.7 280.2L815.6 318.1L813.8 317.9Z" fill="#c9a06a" fill-opacity="0.06"/><path d="M808.7 300.1L810.8 300.3L808.5 322.8L806.4 322.5Z" fill="#4a2c14" fill-opacity="0.09"/><path d="M852.4 290.7L854.6 290.9L851 318.5L848.8 318.2Z" fill="#c9a06a" fill-opacity="0.06"/><path d="M815.6 288.2L817.9 288.5L814.8 316.6L812.6 316.3Z" fill="#c9a06a" fill-opacity="0.05"/><path d="M761.6 284.1L762.5 284.2L760.8 308.8L759.8 308.7Z" fill="#4a2c14" fill-opacity="0.08"/><path d="M866.5 297.5L868.9 297.8L866.3 316.2L864 315.9Z" fill="#c9a06a" fill-opacity="0.09"/><path d="M805.8 279L806.5 279L802.6 318.4L801.9 318.4Z" fill="#c9a06a" fill-opacity="0.05"/><path d="M840.2 282.1L842.1 282.2L838.7 310.1L836.8 309.9Z" fill="#c9a06a" fill-opacity="0.06"/><path d="M771.6 292.6L773.6 292.8L772.3 308.5L770.3 308.3Z" fill="#c9a06a" fill-opacity="0.07"/><path d="M822.8 280.5L824.5 280.6L822 303.1L820.3 302.9Z" fill="#4a2c14" fill-opacity="0.07"/><path d="M812.7 282.9L814.2 283L810.1 322.9L808.6 322.8Z" fill="#4a2c14" fill-opacity="0.07"/><path d="M863.1 297.8L864 297.9L859.7 328.7L858.9 328.6Z" fill="#4a2c14" fill-opacity="0.09"/><path d="M874.1 298.2L875.7 298.3L871.1 330L869.5 329.9Z" fill="#c9a06a" fill-opacity="0.08"/><path d="M869.3 284.7L871.9 284.9L865.7 329.4L863.1 329.1Z" fill="#4a2c14" fill-opacity="0.04"/><path d="M832.4 291.7L834.6 291.9L830.7 325.3L828.5 325.1Z" fill="#4a2c14" fill-opacity="0.06"/><path d="M776.4 281.9L778.7 282.1L776.6 308.6L774.3 308.4Z" fill="#c9a06a" fill-opacity="0.06"/><path d="M819.1 280.1L819.9 280.2L815.2 323.5L814.4 323.4Z" fill="#4a2c14" fill-opacity="0.06"/><path d="M878.3 304.8L880.8 305L878.7 319L876.3 318.7Z" fill="#c9a06a" fill-opacity="0.09"/><path d="M767.7 291.8L768.4 291.9L766.4 317.9L765.7 317.8Z" fill="#4a2c14" fill-opacity="0.08"/><path d="M775.1 276.2L776.2 276.3L772.8 318.6L771.7 318.5Z" fill="#4a2c14" fill-opacity="0.05"/><path d="M849.8 282.9L850.4 283L846.3 315.1L845.7 315.1Z" fill="#4a2c14" fill-opacity="0.09"/><path d="M876 285.3L878.5 285.5L874.2 314.9L871.8 314.6Z" fill="#c9a06a" fill-opacity="0.07"/><path d="M817.6 298.3L818.8 298.4L816.1 323.6L814.9 323.5Z" fill="#4a2c14" fill-opacity="0.04"/><path d="M854.8 283.4L856.5 283.5L850.7 327.7L849 327.5Z" fill="#4a2c14" fill-opacity="0.05"/><path d="M872.2 284.9L873.5 285.1L869.1 315.9L867.9 315.8Z" fill="#4a2c14" fill-opacity="0.09"/><path d="M769 275.6L771.2 275.8L767.9 318L765.8 317.8Z" fill="#4a2c14" fill-opacity="0.05"/><path d="M808.1 279.2L810.5 279.4L806.1 322.5L803.7 322.2Z" fill="#c9a06a" fill-opacity="0.04"/><path d="M853.6 305.4L854.8 305.6L851.8 327.8L850.7 327.7Z" fill="#4a2c14" fill-opacity="0.04"/><path d="M870.6 289.1L872.3 289.2L866.6 329.5L864.9 329.3Z" fill="#4a2c14" fill-opacity="0.05"/><path d="M784.5 277L786.4 277.2L782.7 319.8L780.8 319.5Z" fill="#c9a06a" fill-opacity="0.06"/><path d="M795.1 291.5L796 291.5L793.7 316.2L792.9 316.1Z" fill="#4a2c14" fill-opacity="0.04"/><path d="M855.2 299.8L856.6 300L852.9 327.9L851.6 327.8Z" fill="#c9a06a" fill-opacity="0.08"/><path d="M822.7 300.7L823.3 300.8L820.7 324.2L820.1 324.1Z" fill="#4a2c14" fill-opacity="0.08"/><path d="M808.4 279.2L809.3 279.3L805.8 313.6L805 313.5Z" fill="#4a2c14" fill-opacity="0.07"/><path d="M777 276.4L778.8 276.5L775.5 317.3L773.7 317.1Z" fill="#4a2c14" fill-opacity="0.08"/><path d="M768 296.1L770.1 296.3L768.8 313.5L766.7 313.2Z" fill="#4a2c14" fill-opacity="0.04"/><path d="M890.3 286.6L891.4 286.7L888.2 307.4L887.2 307.3Z" fill="#4a2c14" fill-opacity="0.04"/><path d="M852.7 283.6L853.6 283.7L849.5 315.4L848.6 315.3Z" fill="#c9a06a" fill-opacity="0.05"/><path d="M876.4 285.3L878.5 285.5L875.9 303.9L873.8 303.7Z" fill="#4a2c14" fill-opacity="0.05"/><path d="M813.4 279.6L814.2 279.7L810 320.5L809.2 320.4Z" fill="#c9a06a" fill-opacity="0.05"/><path d="M869.1 293.6L871.6 293.9L868.4 316.7L865.9 316.5Z" fill="#4a2c14" fill-opacity="0.09"/><path d="M863.5 284.2L864.7 284.3L861 311.8L859.7 311.7Z" fill="#c9a06a" fill-opacity="0.09"/><path d="M868.6 285.9L871 286.1L866.9 315.1L864.6 314.9Z" fill="#4a2c14" fill-opacity="0.06"/><path d="M843.7 282.4L845 282.5L841.7 308.9L840.4 308.8Z" fill="#4a2c14" fill-opacity="0.05"/><path d="M887.4 308L889.6 308.2L886.6 328L884.4 327.8Z" fill="#c9a06a" fill-opacity="0.04"/><path d="M843 297.6L844.1 297.7L841.9 315.2L840.9 315.1Z" fill="#c9a06a" fill-opacity="0.05"/><path d="M828.6 281L830 281.1L825.8 317.9L824.4 317.7Z" fill="#4a2c14" fill-opacity="0.07"/><path d="M887.8 292.6L889.4 292.8L883.5 331.5L881.9 331.3Z" fill="#4a2c14" fill-opacity="0.05"/><path d="M798.9 278.3L800.2 278.4L797.8 303.6L796.5 303.4Z" fill="#c9a06a" fill-opacity="0.07"/><path d="M835.3 281.6L837.1 281.8L832.8 318.1L831 317.9Z" fill="#c9a06a" fill-opacity="0.06"/><path d="M801.1 278.5L802.1 278.6L799.1 309.4L798.1 309.3Z" fill="#4a2c14" fill-opacity="0.06"/><path d="M875.3 285.2L876.4 285.3L871.4 320.6L870.3 320.4Z" fill="#4a2c14" fill-opacity="0.08"/><path d="M781.7 276.8L782.4 276.8L778.8 319.3L778.2 319.2Z" fill="#4a2c14" fill-opacity="0.08"/><path d="M775.5 276.2L776.5 276.3L773.1 318.6L772.2 318.5Z" fill="#4a2c14" fill-opacity="0.07"/><path d="M839.3 300.5L841.5 300.7L839.1 320.3L836.9 320Z" fill="#c9a06a" fill-opacity="0.06"/></g>
<line x1="762" y1="275" x2="895" y2="287" stroke="#2a1a0c" stroke-width="1" />
<polygon points="759,317 888.3,331.7 906.6,388.8 746,358" fill="#2f6733" />
<polygon points="640,345 746,358 906.6,388.8 960.5,557 600,465 600,400" fill="url(#pave)" />
<g><polygon points="895,287 943,386 927.6,455 888,332" fill="#482d17" /><path d="M921.6 383.3L922.4 385.4L915.8 418.3L915 416Z" fill="#6a4628" fill-opacity="0.11"/><path d="M909.5 339L910.2 340.9L905.6 366.8L904.9 364.8Z" fill="#6a4628" fill-opacity="0.09"/><path d="M910.4 318.7L910.8 319.7L903.5 361.1L903.1 360Z" fill="#20120a" fill-opacity="0.08"/><path d="M927.6 354.2L928.6 356.4L916 419L915.1 416.3Z" fill="#20120a" fill-opacity="0.11"/><path d="M911.3 357.7L911.5 358.3L907.7 379.3L907.4 378.7Z" fill="#6a4628" fill-opacity="0.06"/><path d="M909.3 316.8L910 318.3L900.7 371.4L900.1 369.5Z" fill="#6a4628" fill-opacity="0.13"/><path d="M911.5 341.6L912.3 343.5L904.9 384.4L904.1 382.1Z" fill="#20120a" fill-opacity="0.11"/><path d="M906.3 310.4L907 311.8L898.2 363.6L897.6 361.8Z" fill="#20120a" fill-opacity="0.11"/><path d="M915.9 330.1L916.7 331.8L907.3 382.6L906.6 380.5Z" fill="#6a4628" fill-opacity="0.08"/><path d="M912.9 330.8L913.7 332.4L908.5 360.5L907.9 358.7Z" fill="#20120a" fill-opacity="0.05"/><path d="M928.9 397L929.8 399.4L921.8 437.1L921 434.5Z" fill="#20120a" fill-opacity="0.07"/><path d="M912 329.5L912.5 330.6L908.3 353.8L907.9 352.5Z" fill="#20120a" fill-opacity="0.16"/><path d="M919 336.5L919.2 337L909.4 389.3L909.2 388.7Z" fill="#20120a" fill-opacity="0.08"/><path d="M931.1 361.5L932 363.3L922.5 409.6L921.7 407.5Z" fill="#20120a" fill-opacity="0.12"/><path d="M913.9 325.9L914.8 327.7L904.6 383.6L903.9 381.3Z" fill="#6a4628" fill-opacity="0.05"/><path d="M895.9 305.5L896 306L891.2 336.6L891 336.1Z" fill="#20120a" fill-opacity="0.04"/><path d="M926.6 352.1L927.1 353.2L914.8 415.1L914.3 413.7Z" fill="#20120a" fill-opacity="0.15"/><path d="M916.3 330.9L916.7 331.8L909.2 372.8L908.8 371.7Z" fill="#20120a" fill-opacity="0.16"/><path d="M908.6 324.6L909.2 325.8L906 343.6L905.5 342.3Z" fill="#20120a" fill-opacity="0.15"/><path d="M929.4 358L930 359.1L917.3 421.4L916.8 420Z" fill="#20120a" fill-opacity="0.09"/><path d="M923.5 345.7L923.9 346.6L912.9 403.1L912.5 402Z" fill="#20120a" fill-opacity="0.06"/><path d="M902.2 336.7L902.5 337.3L898 363.2L897.8 362.5Z" fill="#20120a" fill-opacity="0.09"/><path d="M908.4 314.6L908.6 315L899.5 367.6L899.3 367Z" fill="#20120a" fill-opacity="0.07"/><path d="M902.2 301.9L902.4 302.2L896.2 340L896 339.6Z" fill="#20120a" fill-opacity="0.07"/><path d="M927.6 375.4L928 376.3L918 425.1L917.7 424.1Z" fill="#20120a" fill-opacity="0.13"/><path d="M906.4 318.1L907.1 319.6L899 366.2L898.4 364.3Z" fill="#20120a" fill-opacity="0.06"/><path d="M922.8 344.3L923.2 345.2L911.6 405.3L911.2 404.2Z" fill="#6a4628" fill-opacity="0.07"/><path d="M933.2 365.8L933.6 366.7L922.7 419.1L922.3 418.1Z" fill="#20120a" fill-opacity="0.12"/><path d="M915.6 329.4L916 330.3L910.3 361.5L909.9 360.5Z" fill="#20120a" fill-opacity="0.12"/><path d="M898.1 293.5L898.5 294.2L891 341.3L890.7 340.3Z" fill="#20120a" fill-opacity="0.07"/><path d="M897.5 301.5L898 302.4L894 327.5L893.5 326.4Z" fill="#6a4628" fill-opacity="0.14"/><path d="M898.7 295.7L899 296.2L891.5 342.8L891.3 342.1Z" fill="#20120a" fill-opacity="0.12"/><path d="M917.3 369.7L917.7 370.6L911.3 404.2L910.9 403.1Z" fill="#20120a" fill-opacity="0.15"/><path d="M924.4 347.6L925.2 349.4L913.2 410.4L912.5 408.2Z" fill="#20120a" fill-opacity="0.09"/><path d="M893.7 304.3L894 304.8L891.3 321.7L891.1 321.1Z" fill="#6a4628" fill-opacity="0.07"/><path d="M908 326.9L908.5 328.2L905.7 344.6L905.1 343.2Z" fill="#20120a" fill-opacity="0.05"/><path d="M932 363.2L932.9 365.1L926.1 397.8L925.2 395.7Z" fill="#20120a" fill-opacity="0.15"/><path d="M920.9 371.6L921.2 372.3L916 398.9L915.7 398.1Z" fill="#20120a" fill-opacity="0.05"/><path d="M931.6 409.5L932.4 411.4L925.8 441.7L925.1 439.7Z" fill="#6a4628" fill-opacity="0.09"/><path d="M894.9 300.3L895.3 301.2L889.7 337.1L889.3 336Z" fill="#6a4628" fill-opacity="0.05"/></g>
<line x1="895" y1="287" x2="943" y2="386" stroke="#1a0f06" stroke-width="1" />
<line x1="943" y1="386" x2="927.6" y2="455" stroke="#1a0f06" stroke-width="0.8" />
<g><polygon points="943,386 978.3,386 972,420 962,426 937,457.7 927.6,455" fill="#a57442" /><path d="M970.7 397L971.8 396.8L970.2 417.6L969.6 417.9Z" fill="#4a2c14" fill-opacity="0.06"/><path d="M946.4 386L947.9 386L963 425.4L962.7 425.6Z" fill="#c9a06a" fill-opacity="0.10"/><path d="M960.5 407.2L960.9 407L964.9 424.3L964.7 424.4Z" fill="#4a2c14" fill-opacity="0.12"/><path d="M956.2 402.6L957.5 402.3L963.7 423.6L963.3 423.9Z" fill="#4a2c14" fill-opacity="0.10"/><path d="M968.3 386L969.3 386L968.7 422L968.4 422.2Z" fill="#4a2c14" fill-opacity="0.06"/><path d="M946.5 386L947.6 386L962.9 425.4L962.7 425.6Z" fill="#4a2c14" fill-opacity="0.08"/><path d="M961 390.2L961.5 390.2L964.3 409.9L964 410Z" fill="#4a2c14" fill-opacity="0.10"/><path d="M977.9 386L978.3 386L972 420L971.8 420.1Z" fill="#4a2c14" fill-opacity="0.04"/><path d="M973.6 405.3L974.3 405.1L971.7 420.2L971.3 420.4Z" fill="#4a2c14" fill-opacity="0.05"/><path d="M944.6 386L947.5 386L962 423.1L961.3 423.5Z" fill="#c9a06a" fill-opacity="0.12"/><path d="M952 386L954.5 386L964.5 424.5L963.9 424.8Z" fill="#c9a06a" fill-opacity="0.07"/><path d="M960.6 386L962 386L966.5 423.3L966.1 423.6Z" fill="#4a2c14" fill-opacity="0.10"/><path d="M974.3 386L975.4 386L970.9 420.7L970.4 420.9Z" fill="#4a2c14" fill-opacity="0.07"/><path d="M967.8 386L968.1 386L968.3 417.9L968.2 417.9Z" fill="#4a2c14" fill-opacity="0.04"/><path d="M965.5 410.1L965.8 410L966.5 418L966.3 418.1Z" fill="#c9a06a" fill-opacity="0.08"/><path d="M957.2 386L959 386L965.7 423.8L965.2 424.1Z" fill="#c9a06a" fill-opacity="0.11"/><path d="M974.6 397.3L974.8 397.3L971.3 420.4L971.2 420.5Z" fill="#4a2c14" fill-opacity="0.05"/><path d="M964 414.9L964.6 414.6L965.9 423.4L965.6 423.6Z" fill="#c9a06a" fill-opacity="0.10"/><path d="M974 386L974.2 386L970.6 419.1L970.5 419.1Z" fill="#c9a06a" fill-opacity="0.08"/><path d="M969.7 386L970.4 386L969 421.8L968.8 421.9Z" fill="#c9a06a" fill-opacity="0.08"/><path d="M947.8 386L950.2 386L962.6 422.4L962 422.8Z" fill="#4a2c14" fill-opacity="0.08"/><path d="M949.4 386L950.1 386L963 423.8L962.8 423.9Z" fill="#4a2c14" fill-opacity="0.05"/><path d="M966.2 386L966.8 386L967.8 419.7L967.6 419.8Z" fill="#4a2c14" fill-opacity="0.09"/><path d="M968 386L968.3 386L968.3 414.4L968.2 414.4Z" fill="#4a2c14" fill-opacity="0.10"/><path d="M972.7 386L973 386L970 420.5L969.9 420.6Z" fill="#4a2c14" fill-opacity="0.06"/></g>
<line x1="943" y1="386" x2="978.3" y2="386" stroke="#2a1a0c" stroke-width="0.8" />
<g><polygon points="962.4,424.5 992,428 992,480 975,512.7 943,504.4" fill="#a06e3c" /><path d="M991.5 452.3L992 451.9L992 480L991.6 480.8Z" fill="#4a2c14" fill-opacity="0.07"/><path d="M965.4 439.5L967.7 439.2L976.6 509.6L975.4 511.9Z" fill="#c9a06a" fill-opacity="0.10"/><path d="M990.1 427.8L990.8 427.9L991.1 480.5L990.6 481.4Z" fill="#4a2c14" fill-opacity="0.11"/><path d="M986.9 432.4L988 432.4L988.7 466.9L987.8 468Z" fill="#c9a06a" fill-opacity="0.04"/><path d="M985.1 427.2L985.3 427.2L987.2 485.2L987.1 485.5Z" fill="#c9a06a" fill-opacity="0.06"/><path d="M972.5 425.7L973.9 425.9L980.6 502L979.8 503.4Z" fill="#4a2c14" fill-opacity="0.11"/><path d="M972.2 425.7L973.9 425.9L980.6 502L979.7 503.7Z" fill="#c9a06a" fill-opacity="0.09"/><path d="M986.9 427.4L988 427.5L989.1 485.5L988.4 487Z" fill="#4a2c14" fill-opacity="0.12"/><path d="M989 434.5L989.1 434.5L989.9 484.1L989.8 484.3Z" fill="#4a2c14" fill-opacity="0.05"/><path d="M989.7 427.7L990.2 427.8L990.7 482.6L990.3 483.2Z" fill="#4a2c14" fill-opacity="0.12"/><path d="M984.8 427.1L984.9 427.2L986.4 470.1L986.3 470.3Z" fill="#4a2c14" fill-opacity="0.07"/><path d="M962.8 424.5L965.3 424.8L972 476.8L970.4 478.4Z" fill="#4a2c14" fill-opacity="0.05"/><path d="M986.5 427.4L987 427.4L988.1 473.9L987.8 474.4Z" fill="#4a2c14" fill-opacity="0.13"/><path d="M991.9 445.9L992 445.9L992 476.2L991.9 476.3Z" fill="#c9a06a" fill-opacity="0.10"/><path d="M981 461.7L981.6 461.2L983.6 494.2L983.2 495Z" fill="#4a2c14" fill-opacity="0.11"/><path d="M988.3 450.5L988.9 450.1L989.5 484.8L989 485.7Z" fill="#4a2c14" fill-opacity="0.07"/><path d="M977.4 426.3L979.7 426.5L983.8 495.7L982.5 498.2Z" fill="#4a2c14" fill-opacity="0.05"/><path d="M967 454.1L969.9 452.8L976.9 509.1L975.2 512.3Z" fill="#4a2c14" fill-opacity="0.05"/><path d="M979.2 460.4L979.9 459.9L982.6 498.1L982.1 499Z" fill="#c9a06a" fill-opacity="0.09"/><path d="M967.1 425.1L967.9 425.2L977.5 507.5L977.1 508.3Z" fill="#4a2c14" fill-opacity="0.12"/><path d="M966.4 425L968.3 425.2L977.8 507.4L976.8 509.2Z" fill="#4a2c14" fill-opacity="0.06"/><path d="M987.6 442.8L987.9 442.7L988.4 467.2L988.1 467.6Z" fill="#c9a06a" fill-opacity="0.06"/><path d="M988.2 449.4L989.3 448.7L989.6 467.5L988.6 468.7Z" fill="#4a2c14" fill-opacity="0.05"/><path d="M976.4 469L977.6 467.9L980.6 501.9L979.7 503.6Z" fill="#4a2c14" fill-opacity="0.11"/><path d="M986.1 427.3L986.7 427.4L988.3 487.2L987.8 488Z" fill="#4a2c14" fill-opacity="0.10"/><path d="M977.8 426.3L979 426.5L983.4 496.5L982.8 497.8Z" fill="#c9a06a" fill-opacity="0.09"/><path d="M991.8 428L991.9 428L992 480.1L991.9 480.2Z" fill="#4a2c14" fill-opacity="0.05"/><path d="M988.9 455.6L989 455.5L989.4 477.5L989.3 477.7Z" fill="#4a2c14" fill-opacity="0.10"/><path d="M986 455.6L986.5 455.3L987.2 477.3L986.8 477.9Z" fill="#c9a06a" fill-opacity="0.07"/><path d="M988.7 444.2L989.8 443.7L990.1 468.1L989.2 469.3Z" fill="#4a2c14" fill-opacity="0.04"/></g>
<line x1="962.4" y1="424.5" x2="992" y2="428" stroke="#2a1a0c" stroke-width="0.8" />
<g><polygon points="950,400 962.4,424.5 943,504.4 933.8,473.7" fill="#452b16" /><path d="M948.3 442.4L948.7 443.6L938.3 488.8L937.9 487.5Z" fill="#6a4628" fill-opacity="0.05"/><path d="M949.8 403L949.9 403.3L934.1 474.8L934 474.5Z" fill="#6a4628" fill-opacity="0.07"/><path d="M951.7 403.3L951.8 403.6L935.2 478.3L935 477.9Z" fill="#6a4628" fill-opacity="0.06"/><path d="M955.5 451.3L955.8 451.8L943 504.4L942.8 503.8Z" fill="#20120a" fill-opacity="0.12"/><path d="M951.2 402.4L951.7 403.4L938.7 461.7L938.3 460.4Z" fill="#20120a" fill-opacity="0.09"/><path d="M954.7 409.3L955.4 410.7L937.9 487.2L937.3 485.5Z" fill="#20120a" fill-opacity="0.08"/><path d="M952.6 405.1L952.8 405.5L937.7 472.8L937.5 472.3Z" fill="#20120a" fill-opacity="0.09"/><path d="M944.1 437.7L944.7 439.1L938.6 466.2L938.1 464.7Z" fill="#20120a" fill-opacity="0.07"/><path d="M954.1 417.9L954.8 419.4L938.5 489.5L938 487.8Z" fill="#20120a" fill-opacity="0.12"/><path d="M949.1 419.3L949.7 420.7L936.1 481.2L935.6 479.6Z" fill="#6a4628" fill-opacity="0.13"/><path d="M953.4 406.7L953.4 406.8L936.6 481.2L936.6 481Z" fill="#20120a" fill-opacity="0.11"/><path d="M951.1 402.1L951.2 402.4L939.8 454.1L939.6 453.7Z" fill="#6a4628" fill-opacity="0.12"/><path d="M959.6 434.2L959.7 434.4L942.9 503.9L942.8 503.7Z" fill="#20120a" fill-opacity="0.06"/><path d="M955 409.8L955.1 410.1L937.7 486L937.6 485.6Z" fill="#20120a" fill-opacity="0.08"/><path d="M951.5 403L951.8 403.6L938.1 465.1L937.9 464.3Z" fill="#20120a" fill-opacity="0.05"/><path d="M954 408L954.4 408.8L939.6 473.9L939.3 472.9Z" fill="#6a4628" fill-opacity="0.11"/><path d="M953.1 406.1L953.3 406.4L944.8 443.9L944.7 443.5Z" fill="#20120a" fill-opacity="0.09"/><path d="M947.8 436L947.9 436.2L938.9 475.6L938.8 475.5Z" fill="#6a4628" fill-opacity="0.13"/></g>
<g><polygon points="986,476.8 992,476 992,549 969,549" fill="#452b16" /><path d="M991.2 476.1L992 476L992 499.9L990.5 500.1Z" fill="#20120a" fill-opacity="0.07"/><path d="M986.3 491.3L986.8 491.2L984 513.3L983.2 513.3Z" fill="#20120a" fill-opacity="0.09"/><path d="M987.9 478.5L988.5 478.4L987 489.9L986.2 489.9Z" fill="#6a4628" fill-opacity="0.04"/><path d="M990.2 476.2L990.8 476.2L988.9 516.5L987.2 516.6Z" fill="#20120a" fill-opacity="0.11"/><path d="M991.1 476.1L992 476L992 548.4L988.5 548.4Z" fill="#6a4628" fill-opacity="0.07"/><path d="M989.8 482.3L990.8 482.2L988.3 549L985.2 549Z" fill="#6a4628" fill-opacity="0.09"/><path d="M987.3 476.6L988.5 476.5L980.3 536.3L976.3 536.4Z" fill="#20120a" fill-opacity="0.08"/><path d="M984.9 489.9L985.3 489.8L979.1 525.4L978.3 525.4Z" fill="#6a4628" fill-opacity="0.06"/><path d="M986 481.9L987.9 481.6L983.2 517L979.1 517.2Z" fill="#6a4628" fill-opacity="0.04"/><path d="M988.3 476.5L989.9 476.3L983.8 549L977.5 549Z" fill="#20120a" fill-opacity="0.07"/></g>
<polygon points="560,262 760,280 748,358 560,340" fill="#dedede" />
<polygon points="410,248 758,280 751,306 410,262" fill="#c3ced4" />
<polygon points="410,246 758,280 757,287 410,252" fill="#aab6bb" />
<polygon points="423,251.5 457,254.5 457,259.5 423,256.5" fill="#b5a48e" />
<line x1="485" y1="254" x2="478" y2="264" stroke="#8e9aa0" stroke-width="0.8" />
<line x1="546.7" y1="259.5" x2="538" y2="270" stroke="#8e9aa0" stroke-width="0.8" />
<line x1="635" y1="267.5" x2="627" y2="278" stroke="#8e9aa0" stroke-width="0.8" />
<line x1="461" y1="252" x2="456" y2="262" stroke="#8e9aa0" stroke-width="0.8" />
<line x1="410" y1="256" x2="751" y2="292" stroke="#9aa6ab" stroke-width="0.6" />
<polygon points="410,242 758,274 758,280 410,247" fill="#6c6c6c" />
<polygon points="758,274 769,260 763,300 753,358 744,358" fill="#e4e7e9" />
<line x1="758" y1="280" x2="746" y2="358" stroke="#555" stroke-width="1" />
<line x1="764" y1="285" x2="754" y2="352" stroke="#555" stroke-width="0.8" />
<polygon points="409.5,197 760,221 760,274.2 409.5,242" fill="#ffe62e" />
<polygon points="760,221 771.5,221.5 768,258 760,274.2" fill="#e9cf2a" />
<polygon points="765.5,224 771,224 769,244 765,248" fill="#ececec" />
<line x1="765.5" y1="224" x2="765" y2="248" stroke="#666" stroke-width="0.6" />
<line x1="409.5" y1="197" x2="409.5" y2="242" stroke="#8a8a6a" stroke-width="1" />
<line x1="409.5" y1="242" x2="758" y2="274" stroke="#5a5a4a" stroke-width="0.8" />
<polygon points="455.5,200 492.7,202 492.7,231 455.5,227.5" fill="#9c9c9c" />
<polygon points="460,200 492,202 492,229.5 460,226.3" fill="#c4c4c4" />
<polygon points="460,200 477,201 477,214 461,219" fill="#ffe62e" />
<polygon points="477,201 482,201.3 482,228.3 477,227.8" fill="#b9b9b9" />
<polygon points="484.5,201.5 492,202 492,229.5 484.5,228.5" fill="#ffffff" />
<line x1="461" y1="219" x2="477" y2="214" stroke="#333" stroke-width="0.8" />
<line x1="460.5" y1="209" x2="461" y2="219" stroke="#222" stroke-width="1.2" />
<polygon points="547,205.5 592.5,208.5 592.5,239 547,234.5" fill="#8e8e8e" />
<polygon points="549.5,206 592,208.7 592,237.5 549.5,233.3" fill="#ffffff" />
<polygon points="572,207.5 592,208.7 592,237.5 572,235.5" fill="#bdbdbd" />
<polygon points="549.5,206 554,206.3 554,233.8 549.5,233.3" fill="#c8c8c8" />
<polygon points="652.5,212.5 705.5,216 705,248.5 652.5,243.5" fill="#8e8e8e" />
<polygon points="655,213.5 705,216.5 704.5,246.5 655,241.8" fill="#ffffff" />
<polygon points="387.6,194.5 790,219 789.5,222.2 387.3,197.2" fill="#c2b998" />
<line x1="387.3" y1="197.2" x2="789.5" y2="222.2" stroke="#5a5440" stroke-width="0.7" />
<polygon points="802,144 803.2,146 798,196 793.5,221.5 790,219" fill="#4a3c2c" />
<polygon points="797.2,178 798.8,179 796.3,201 794.6,200" fill="#cfc3a0" />
<g><polygon points="424.5,141.3 802,144 790,219 387.6,194.5" fill="#a05a3a" /><path d="M426.3 141.3L389.4 194.6M429.8 141.3L393.1 194.8M433.4 141.4L396.9 195.1M437.1 141.4L400.6 195.3M440.7 141.4L404.4 195.5M444.4 141.4L408.2 195.8M448.1 141.5L412.1 196M451.8 141.5L415.9 196.2M455.5 141.5L419.8 196.5M459.3 141.5L423.8 196.7M463.1 141.6L427.7 196.9M466.9 141.6L431.7 197.2M470.8 141.6L435.7 197.4M474.7 141.7L439.8 197.7M478.6 141.7L443.9 197.9M482.5 141.7L448 198.2M486.5 141.7L452.1 198.4M490.5 141.8L456.3 198.7M494.5 141.8L460.5 198.9M498.6 141.8L464.8 199.2M502.6 141.9L469.1 199.5M506.8 141.9L473.4 199.7M510.9 141.9L477.7 200M515.1 141.9L482.1 200.3M519.3 142L486.5 200.5M523.5 142L491 200.8M527.8 142L495.5 201.1M532.1 142.1L500 201.3M536.4 142.1L504.6 201.6M540.8 142.1L509.2 201.9M545.2 142.2L513.9 202.2M549.7 142.2L518.5 202.5M554.1 142.2L523.3 202.8M558.6 142.3L528 203M563.2 142.3L532.8 203.3M567.8 142.3L537.7 203.6M572.4 142.4L542.6 203.9M577 142.4L547.5 204.2M581.7 142.4L552.5 204.5M586.4 142.5L557.5 204.8M591.2 142.5L562.5 205.2M596 142.5L567.6 205.5M600.8 142.6L572.8 205.8M605.7 142.6L578 206.1M610.6 142.6L583.2 206.4M615.6 142.7L588.5 206.7M620.6 142.7L593.8 207.1M625.6 142.7L599.2 207.4M630.7 142.8L604.6 207.7M635.8 142.8L610.1 208M641 142.8L615.6 208.4M646.2 142.9L621.2 208.7M651.4 142.9L626.8 209.1M656.7 143L632.5 209.4M662.1 143L638.2 209.8M667.5 143L644 210.1M672.9 143.1L649.8 210.5M678.4 143.1L655.7 210.8M683.9 143.2L661.7 211.2M689.5 143.2L667.7 211.6M695.1 143.2L673.8 211.9M700.8 143.3L679.9 212.3M706.5 143.3L686.1 212.7M712.3 143.4L692.3 213.1M718.1 143.4L698.6 213.4M723.9 143.4L704.9 213.8M729.9 143.5L711.4 214.2M735.8 143.5L717.9 214.6M741.9 143.6L724.4 215M748 143.6L731 215.4M754.1 143.7L737.7 215.8M760.3 143.7L744.4 216.2M766.6 143.7L751.3 216.6M772.9 143.8L758.1 217.1M779.2 143.8L765.1 217.5M785.7 143.9L772.1 217.9M792.2 143.9L779.2 218.3M798.7 144L786.4 218.8" stroke="#bd7e56" stroke-opacity=".55" stroke-width="1.7" fill="none"/><path d="M418 151.3L420.7 151.4L418.3 154.8L415.6 154.8Z" fill="#8a4a30" fill-opacity=".42"/><path d="M398.4 179.6L401.2 179.7L398.6 183.4L395.9 183.3Z" fill="#b8897c" fill-opacity=".42"/><path d="M421.6 151.4L424.3 151.5L421.9 154.9L419.2 154.8Z" fill="#b8897c" fill-opacity=".42"/><path d="M419.2 154.8L421.9 154.9L419.6 158.3L416.8 158.3Z" fill="#c9784a" fill-opacity=".42"/><path d="M416.8 158.3L419.6 158.3L417.2 161.8L414.4 161.8Z" fill="#b8897c" fill-opacity=".42"/><path d="M394.4 190.9L397.2 191.1L394.6 194.9L391.7 194.8Z" fill="#b8897c" fill-opacity=".42"/><path d="M422.8 154.9L425.6 155L423.2 158.4L420.4 158.4Z" fill="#8a4a30" fill-opacity=".42"/><path d="M418.1 161.9L420.8 161.9L418.4 165.5L415.6 165.4Z" fill="#9a5a44" fill-opacity=".42"/><path d="M421.7 162L424.5 162L422.1 165.6L419.3 165.5Z" fill="#9a5a44" fill-opacity=".42"/><path d="M427.8 158.5L430.6 158.6L428.2 162.1L425.4 162.1Z" fill="#8a4a30" fill-opacity=".42"/><path d="M410.7 184L413.5 184.1L411 187.9L408.1 187.8Z" fill="#d88a3a" fill-opacity=".42"/><path d="M438.4 148.2L441.3 148.3L439 151.7L436.1 151.7Z" fill="#9a5a44" fill-opacity=".42"/><path d="M436.1 151.7L439 151.7L436.7 155.2L433.8 155.1Z" fill="#9a5a44" fill-opacity=".42"/><path d="M433.8 155.1L436.7 155.2L434.3 158.7L431.5 158.6Z" fill="#8a4a30" fill-opacity=".42"/><path d="M431.5 158.6L434.3 158.7L432 162.3L429.1 162.2Z" fill="#9a5a44" fill-opacity=".42"/><path d="M442.1 148.3L445 148.3L442.7 151.8L439.9 151.7Z" fill="#d88a3a" fill-opacity=".42"/><path d="M432.9 162.3L435.7 162.4L433.4 166L430.5 165.9Z" fill="#c4a08c" fill-opacity=".42"/><path d="M450.4 141.5L453.2 141.5L451 144.9L448.1 144.9Z" fill="#c9784a" fill-opacity=".42"/><path d="M445.1 155.4L448 155.4L445.7 159L442.8 158.9Z" fill="#d8984a" fill-opacity=".42"/><path d="M451.2 151.9L454.1 152L451.8 155.5L448.9 155.4Z" fill="#8a4a30" fill-opacity=".42"/><path d="M434.7 177.3L437.7 177.4L435.3 181.2L432.3 181.1Z" fill="#d88a3a" fill-opacity=".42"/><path d="M443.4 170L446.4 170.1L444 173.8L441 173.7Z" fill="#9a5a44" fill-opacity=".42"/><path d="M441 173.7L444 173.8L441.6 177.6L438.6 177.5Z" fill="#d8984a" fill-opacity=".42"/><path d="M463.3 145L466.2 145.1L464 148.6L461.1 148.5Z" fill="#d88a3a" fill-opacity=".42"/><path d="M439.2 189.4L442.3 189.6L439.8 193.5L436.7 193.4Z" fill="#c9784a" fill-opacity=".42"/><path d="M452.9 174.2L455.9 174.3L453.5 178.1L450.5 178Z" fill="#8a4a30" fill-opacity=".42"/><path d="M459.2 170.6L462.3 170.7L459.9 174.5L456.9 174.3Z" fill="#b8897c" fill-opacity=".42"/><path d="M452.1 182L455.2 182.1L452.8 186.1L449.7 185.9Z" fill="#c9784a" fill-opacity=".42"/><path d="M458.5 178.3L461.6 178.4L459.3 182.3L456.2 182.2Z" fill="#d8984a" fill-opacity=".42"/><path d="M453.8 186.1L456.9 186.3L454.5 190.2L451.4 190.1Z" fill="#d88a3a" fill-opacity=".42"/><path d="M482.8 145.2L485.9 145.3L483.7 148.8L480.7 148.8Z" fill="#d88a3a" fill-opacity=".42"/><path d="M460.3 182.4L463.4 182.5L461 186.5L457.9 186.3Z" fill="#b8897c" fill-opacity=".42"/><path d="M457.2 194.5L460.4 194.7L457.9 198.8L454.7 198.6Z" fill="#d8984a" fill-opacity=".42"/><path d="M475.5 171.1L478.6 171.2L476.3 175.1L473.2 175Z" fill="#8a4a30" fill-opacity=".42"/><path d="M486.3 159.9L489.4 160L487.3 163.8L484.1 163.7Z" fill="#c9784a" fill-opacity=".42"/><path d="M481.9 167.4L485 167.5L482.8 171.4L479.6 171.3Z" fill="#c4a08c" fill-opacity=".42"/><path d="M472.7 182.9L475.9 183.1L473.6 187.1L470.4 186.9Z" fill="#9a5a44" fill-opacity=".42"/><path d="M465.6 195L468.8 195.2L466.4 199.3L463.2 199.1Z" fill="#8a4a30" fill-opacity=".42"/><path d="M499 145.4L502.1 145.4L500 149.1L496.9 149Z" fill="#9a5a44" fill-opacity=".42"/><path d="M485.8 175.4L489 175.6L486.7 179.5L483.5 179.4Z" fill="#d88a3a" fill-opacity=".42"/><path d="M501 156.5L504.2 156.6L502 160.3L498.8 160.2Z" fill="#8a4a30" fill-opacity=".42"/><path d="M505.2 164.2L508.5 164.3L506.3 168.2L503 168.1Z" fill="#d88a3a" fill-opacity=".42"/><path d="M507.3 168.2L510.7 168.3L508.5 172.3L505.2 172.1Z" fill="#8a4a30" fill-opacity=".42"/><path d="M498.5 184.1L501.9 184.3L499.6 188.4L496.3 188.2Z" fill="#c9784a" fill-opacity=".42"/><path d="M516.1 168.5L519.5 168.6L517.3 172.6L514 172.4Z" fill="#9a5a44" fill-opacity=".42"/><path d="M520.5 168.6L523.9 168.7L521.8 172.7L518.4 172.6Z" fill="#c4a08c" fill-opacity=".42"/><path d="M537.2 145.8L540.5 145.8L538.6 149.6L535.2 149.5Z" fill="#d88a3a" fill-opacity=".42"/><path d="M529.1 161L532.5 161L530.5 164.9L527.1 164.8Z" fill="#9a5a44" fill-opacity=".42"/><path d="M541.6 145.9L545 145.9L543 149.6L539.6 149.6Z" fill="#c9784a" fill-opacity=".42"/><path d="M533.6 161.1L537 161.1L535 165.1L531.6 165Z" fill="#8a4a30" fill-opacity=".42"/><path d="M518.8 189.3L522.3 189.5L520.1 193.7L516.6 193.5Z" fill="#c4a08c" fill-opacity=".42"/><path d="M544.7 157.4L548.1 157.5L546.1 161.4L542.7 161.3Z" fill="#c9784a" fill-opacity=".42"/><path d="M532.8 190L536.4 190.2L534.2 194.4L530.6 194.3Z" fill="#c9784a" fill-opacity=".42"/><path d="M539.6 186L543.2 186.1L541.1 190.4L537.5 190.2Z" fill="#9a5a44" fill-opacity=".42"/><path d="M558.4 157.7L562 157.7L560.1 161.7L556.5 161.6Z" fill="#c4a08c" fill-opacity=".42"/><path d="M575.2 142.4L578.8 142.4L577 146.2L573.4 146.2Z" fill="#8a4a30" fill-opacity=".42"/><path d="M573.4 146.2L577 146.2L575.1 150.1L571.6 150Z" fill="#d8984a" fill-opacity=".42"/><path d="M558.9 186.8L562.6 187L560.6 191.4L556.8 191.2Z" fill="#c4a08c" fill-opacity=".42"/><path d="M575.5 162.1L579.2 162.1L577.3 166.2L573.6 166.1Z" fill="#d8984a" fill-opacity=".42"/><path d="M571.7 170.2L575.4 170.3L573.5 174.5L569.7 174.4Z" fill="#9a5a44" fill-opacity=".42"/><path d="M585.8 150.2L589.5 150.3L587.7 154.2L584 154.2Z" fill="#c4a08c" fill-opacity=".42"/><path d="M592.4 146.4L596.1 146.4L594.3 150.3L590.6 150.3Z" fill="#9a5a44" fill-opacity=".42"/><path d="M579.6 174.7L583.4 174.8L581.5 179.1L577.7 178.9Z" fill="#d8984a" fill-opacity=".42"/><path d="M591.9 158.3L595.7 158.4L593.9 162.5L590.1 162.4Z" fill="#8a4a30" fill-opacity=".42"/><path d="M603.8 142.6L607.6 142.6L605.9 146.5L602.1 146.5Z" fill="#c4a08c" fill-opacity=".42"/><path d="M602.1 146.5L605.9 146.5L604.2 150.5L600.4 150.4Z" fill="#9a5a44" fill-opacity=".42"/><path d="M578 201.4L581.9 201.6L579.9 206.2L576 206Z" fill="#b8897c" fill-opacity=".42"/><path d="M583.2 201.7L587.2 201.9L585.2 206.5L581.2 206.3Z" fill="#d88a3a" fill-opacity=".42"/><path d="M615.4 150.6L619.2 150.7L617.5 154.7L613.7 154.7Z" fill="#b8897c" fill-opacity=".42"/><path d="M597.5 193.2L601.6 193.4L599.7 197.9L595.6 197.7Z" fill="#b8897c" fill-opacity=".42"/><path d="M623.7 142.7L627.5 142.8L625.9 146.7L622.1 146.7Z" fill="#9a5a44" fill-opacity=".42"/><path d="M617.1 158.9L621 158.9L619.3 163.1L615.4 163Z" fill="#c4a08c" fill-opacity=".42"/><path d="M613.6 167.2L617.6 167.3L615.8 171.6L611.9 171.4Z" fill="#c9784a" fill-opacity=".42"/><path d="M602.8 193.4L606.9 193.6L605 198.2L601 198Z" fill="#b8897c" fill-opacity=".42"/><path d="M613.6 180.3L617.6 180.4L615.9 184.9L611.8 184.7Z" fill="#d88a3a" fill-opacity=".42"/><path d="M615.4 189.4L619.5 189.6L617.7 194.2L613.6 194Z" fill="#c4a08c" fill-opacity=".42"/><path d="M637.5 146.9L641.4 146.9L639.8 151L635.9 150.9Z" fill="#d8984a" fill-opacity=".42"/><path d="M632.6 159.2L636.7 159.3L635 163.5L631 163.4Z" fill="#8a4a30" fill-opacity=".42"/><path d="M631 163.4L635 163.5L633.4 167.7L629.3 167.6Z" fill="#b8897c" fill-opacity=".42"/><path d="M624.3 180.7L628.4 180.8L626.6 185.3L622.5 185.1Z" fill="#c4a08c" fill-opacity=".42"/><path d="M615.4 203.5L619.6 203.8L617.7 208.5L613.5 208.3Z" fill="#9a5a44" fill-opacity=".42"/><path d="M639.5 155.1L643.6 155.2L642 159.4L637.9 159.3Z" fill="#b8897c" fill-opacity=".42"/><path d="M626.2 189.9L630.4 190.1L628.7 194.7L624.5 194.5Z" fill="#9a5a44" fill-opacity=".42"/><path d="M624.5 194.5L628.7 194.7L626.9 199.4L622.7 199.1Z" fill="#d88a3a" fill-opacity=".42"/><path d="M644.8 155.2L648.9 155.3L647.3 159.5L643.3 159.4Z" fill="#d8984a" fill-opacity=".42"/><path d="M648.6 159.5L652.8 159.6L651.2 163.9L647.1 163.8Z" fill="#c4a08c" fill-opacity=".42"/><path d="M645.5 168.1L649.6 168.2L648.1 172.6L643.9 172.4Z" fill="#d88a3a" fill-opacity=".42"/><path d="M639 185.8L643.2 186L641.5 190.6L637.3 190.4Z" fill="#c9784a" fill-opacity=".42"/><path d="M657.1 151.2L661.2 151.3L659.7 155.5L655.6 155.4Z" fill="#d8984a" fill-opacity=".42"/><path d="M655.6 155.4L659.7 155.5L658.2 159.7L654.1 159.6Z" fill="#d88a3a" fill-opacity=".42"/><path d="M662.5 151.3L666.7 151.3L665.2 155.5L661 155.5Z" fill="#d88a3a" fill-opacity=".42"/><path d="M656.5 168.4L660.7 168.5L659.2 172.9L654.9 172.8Z" fill="#c4a08c" fill-opacity=".42"/><path d="M643.5 205.1L647.9 205.4L646.2 210.2L641.8 210Z" fill="#8a4a30" fill-opacity=".42"/><path d="M657.4 181.9L661.7 182.1L660.2 186.7L655.8 186.5Z" fill="#c4a08c" fill-opacity=".42"/><path d="M655.8 186.5L660.2 186.7L658.6 191.4L654.2 191.2Z" fill="#b8897c" fill-opacity=".42"/><path d="M649.3 205.5L653.7 205.7L652.1 210.6L647.6 210.3Z" fill="#9a5a44" fill-opacity=".42"/><path d="M674.8 164.4L679.1 164.5L677.7 168.9L673.3 168.8Z" fill="#b8897c" fill-opacity=".42"/><path d="M679.1 169L683.4 169.1L682 173.6L677.6 173.5Z" fill="#9a5a44" fill-opacity=".42"/><path d="M691.6 147.4L695.9 147.5L694.6 151.7L690.3 151.7Z" fill="#d8984a" fill-opacity=".42"/><path d="M689 155.9L693.3 156L692 160.4L687.6 160.3Z" fill="#d8984a" fill-opacity=".42"/><path d="M694.7 156L699.1 156.1L697.8 160.5L693.4 160.4Z" fill="#8a4a30" fill-opacity=".42"/><path d="M690.6 169.3L695.1 169.4L693.7 174L689.3 173.8Z" fill="#9a5a44" fill-opacity=".42"/><path d="M679.1 207.1L683.7 207.4L682.2 212.4L677.5 212.2Z" fill="#d8984a" fill-opacity=".42"/><path d="M696.5 169.5L701 169.6L699.7 174.1L695.2 174Z" fill="#d8984a" fill-opacity=".42"/><path d="M689.6 192.8L694.2 193L692.8 197.9L688.1 197.6Z" fill="#d8984a" fill-opacity=".42"/><path d="M692.8 202.9L697.5 203.1L696.1 208.1L691.4 207.8Z" fill="#d88a3a" fill-opacity=".42"/><path d="M708.4 169.8L713 169.9L711.7 174.5L707.1 174.4Z" fill="#d88a3a" fill-opacity=".42"/><path d="M715.7 165.4L720.3 165.5L719.1 170.1L714.5 170Z" fill="#b8897c" fill-opacity=".42"/><path d="M714.5 170L719.1 170.1L717.9 174.7L713.2 174.6Z" fill="#c9784a" fill-opacity=".42"/><path d="M709.3 188.8L714.1 189L712.8 193.8L708 193.6Z" fill="#c4a08c" fill-opacity=".42"/><path d="M716.8 184.2L721.6 184.4L720.3 189.2L715.6 189Z" fill="#c9784a" fill-opacity=".42"/><path d="M732.5 147.8L737.1 147.9L736 152.3L731.3 152.2Z" fill="#c9784a" fill-opacity=".42"/><path d="M724.3 179.7L729.1 179.8L727.9 184.6L723.1 184.4Z" fill="#d88a3a" fill-opacity=".42"/><path d="M718 204.2L722.9 204.4L721.6 209.6L716.7 209.3Z" fill="#d88a3a" fill-opacity=".42"/><path d="M723.2 209.7L728.2 209.9L726.9 215.2L721.9 214.9Z" fill="#b8897c" fill-opacity=".42"/><path d="M738.1 175.3L742.9 175.5L741.8 180.3L736.9 180.1Z" fill="#d8984a" fill-opacity=".42"/><path d="M735.8 184.9L740.6 185.1L739.5 190L734.6 189.8Z" fill="#8a4a30" fill-opacity=".42"/><path d="M737.6 205.2L742.6 205.5L741.4 210.7L736.4 210.4Z" fill="#c9784a" fill-opacity=".42"/><path d="M760.3 161.8L765.2 161.9L764.2 166.5L759.3 166.4Z" fill="#9a5a44" fill-opacity=".42"/><path d="M749.8 211.2L755 211.5L753.9 216.8L748.7 216.5Z" fill="#9a5a44" fill-opacity=".42"/><path d="M769.6 148.2L774.4 148.3L773.5 152.8L768.6 152.7Z" fill="#c9784a" fill-opacity=".42"/><path d="M768.6 152.7L773.5 152.8L772.6 157.4L767.7 157.3Z" fill="#9a5a44" fill-opacity=".42"/><path d="M773.2 162L778.2 162.1L777.3 166.9L772.3 166.7Z" fill="#c9784a" fill-opacity=".42"/><path d="M764.5 206.7L769.8 206.9L768.8 212.3L763.5 212Z" fill="#d88a3a" fill-opacity=".42"/><path d="M763.5 212L768.8 212.3L767.8 217.6L762.4 217.3Z" fill="#d88a3a" fill-opacity=".42"/><path d="M780.7 157.5L785.7 157.6L784.8 162.3L779.8 162.2Z" fill="#8a4a30" fill-opacity=".42"/><path d="M772.4 201.8L777.7 202L776.7 207.3L771.4 207Z" fill="#b8897c" fill-opacity=".42"/><path d="M424.5 141.3L387.6 194.5M428.1 141.3L391.3 194.7M431.6 141.4L395 195M435.2 141.4L398.7 195.2M438.9 141.4L402.5 195.4M442.5 141.4L406.3 195.6M446.2 141.5L410.1 195.9M449.9 141.5L414 196.1M453.6 141.5L417.9 196.3M457.4 141.5L421.8 196.6M461.2 141.6L425.7 196.8M465 141.6L429.7 197.1M468.8 141.6L433.7 197.3M472.7 141.6L437.8 197.6M476.6 141.7L441.8 197.8M480.5 141.7L445.9 198.1M484.5 141.7L450.1 198.3M488.5 141.8L454.2 198.6M492.5 141.8L458.4 198.8M496.5 141.8L462.7 199.1M500.6 141.8L466.9 199.3M504.7 141.9L471.2 199.6M508.8 141.9L475.6 199.9M513 141.9L479.9 200.1M517.2 142L484.3 200.4M521.4 142L488.8 200.7M525.7 142L493.2 200.9M529.9 142.1L497.8 201.2M534.3 142.1L502.3 201.5M538.6 142.1L506.9 201.8M543 142.1L511.5 202M547.4 142.2L516.2 202.3M551.9 142.2L520.9 202.6M556.4 142.2L525.6 202.9M560.9 142.3L530.4 203.2M565.5 142.3L535.2 203.5M570.1 142.3L540.1 203.8M574.7 142.4L545 204.1M579.4 142.4L550 204.4M584.1 142.4L555 204.7M588.8 142.5L560 205M593.6 142.5L565.1 205.3M598.4 142.5L570.2 205.6M603.3 142.6L575.4 205.9M608.2 142.6L580.6 206.2M613.1 142.6L585.8 206.6M618.1 142.7L591.1 206.9M623.1 142.7L596.5 207.2M628.2 142.8L601.9 207.5M633.3 142.8L607.3 207.9M638.4 142.8L612.8 208.2M643.6 142.9L618.4 208.6M648.8 142.9L624 208.9M654.1 142.9L629.7 209.2M659.4 143L635.4 209.6M664.8 143L641.1 209.9M670.2 143.1L646.9 210.3M675.6 143.1L652.8 210.6M681.1 143.1L658.7 211M686.7 143.2L664.7 211.4M692.3 143.2L670.7 211.7M697.9 143.3L676.8 212.1M703.6 143.3L683 212.5M709.4 143.3L689.2 212.9M715.2 143.4L695.4 213.2M721 143.4L701.8 213.6M726.9 143.5L708.1 214M732.9 143.5L714.6 214.4M738.9 143.5L721.1 214.8M744.9 143.6L727.7 215.2M751 143.6L734.3 215.6M757.2 143.7L741.1 216M763.4 143.7L747.8 216.4M769.7 143.8L754.7 216.9M776 143.8L761.6 217.3M782.4 143.9L768.6 217.7M788.9 143.9L775.7 218.1M795.4 144L782.8 218.6M802 144L790 219" stroke="#55301c" stroke-opacity="0.45" stroke-width="1.05" fill="none"/><path d="M424.5 141.3L802 144M422.2 144.6L801.3 148.6M419.9 148L800.5 153.2M417.5 151.3L799.8 157.8M415.2 154.7L799 162.6M412.8 158.2L798.3 167.4M410.4 161.7L797.5 172.2M407.9 165.2L796.7 177.1M405.5 168.7L795.9 182.1M403 172.3L795.1 187.2M400.5 175.9L794.3 192.3M398 179.5L793.4 197.5M395.4 183.2L792.6 202.8M392.8 186.9L791.7 208.1M390.2 190.7L790.9 213.5M387.6 194.5L790 219" stroke="#55301c" stroke-opacity="0.26" stroke-width="0.8" fill="none"/></g>
<polygon points="424.5,141.3 802,144 790,219 387.6,194.5" fill="none" stroke="#2a1810" stroke-width="1"/>
<polygon points="666.4,328 704.2,333.1 701.3,341.8 665,336.7" fill="#b9c6cc" />
<polygon points="665,336.7 701.3,341.8 700.5,345.5 664,340.3" fill="#c9bc98" />
<polygon points="679,288 699.5,290.5 699.5,306 689.5,304.5" fill="#c2cdd3" />
<line x1="699.5" y1="290.5" x2="699.5" y2="306" stroke="#8a9499" stroke-width="0.6" />
<polygon points="701.3,341.8 749.4,348.4 748.6,353.5 699.9,346.2" fill="#c9a55e" />
<polygon points="732,352.8 748,354.2 747.2,363 732,360.8" fill="#8c8c8c" />
<polygon points="707,340.4 726,343 726,345 707,342.6" fill="#1c1c1c" />
<g>
<ellipse cx="696" cy="395" rx="44" ry="6" fill="#2a1c0c" opacity=".45" transform="rotate(9 696 395)"/>
<polygon points="657.7,352.8 661.3,341.8 708.6,348.4 734,351.3 733,360 735.5,378 734,392 730.5,397.5 718.8,399.5 714,398 693,392 647.5,385.5 651,366" fill="#f6f6f6" />
<polygon points="661.3,341.8 708.6,348.4 705.7,358.6 659.1,352.8" fill="#1b1b1b" />
<polygon points="708.6,349.1 734,351.3 730.5,362.2 720.3,360" fill="#b9b9b9" />
<polygon points="730,352 734.5,351.5 727,378 724,376" fill="#e9e9e9" />
<polygon points="654.7,355.7 673,356.4 668.6,368.8 654,366.6" fill="#5e5e5e" />
<polygon points="676.6,357.1 696.2,362.2 697.7,372.4 674.4,369.5" fill="#565656" />
<polygon points="699.9,362.2 713,366.6 709.3,374.6 701.3,373.1" fill="#3a3a3a" />
<polygon points="722,361 730,363 727,376 721,372" fill="#3c3c3c" />
<line x1="650.4" y1="378.2" x2="688.2" y2="384.8" stroke="#222" stroke-width="1.3" />
<line x1="668.6" y1="369.5" x2="666.4" y2="387" stroke="#777" stroke-width="0.7" />
<line x1="697.7" y1="372.4" x2="698" y2="380" stroke="#888" stroke-width="0.6" />
<line x1="647.5" y1="385.5" x2="693" y2="392" stroke="#666" stroke-width="0.8" />
<polygon points="719.5,375.3 726,377.5 726,382 720,380" fill="#e04a34" />
<polygon points="723,388.4 735,386 734,393 727,396.5 722,394" fill="#4a4a4a" />
<ellipse cx="703.5" cy="395.7" rx="9.5" ry="10" fill="#1e1e1e"/><ellipse cx="703" cy="395.7" rx="6" ry="6.6" fill="#9a9a9a"/><ellipse cx="703" cy="395.7" rx="2" ry="2.2" fill="#555"/>
<line x1="703" y1="389.5" x2="703" y2="402" stroke="#555" stroke-width="0.8" />
<line x1="697.3" y1="395.7" x2="708.7" y2="395.7" stroke="#555" stroke-width="0.8" />
</g>
<polygon points="678,287 699,319.5 670.5,318.5" fill="#9c927a" />
<polygon points="678,287 681,286.5 701,318 697,321" fill="#dccfa8" />
<linearGradient id="gw" gradientUnits="userSpaceOnUse" x1="328" y1="0" x2="580" y2="0"><stop offset="0" stop-color="#e9e9e9"/><stop offset="1" stop-color="#d2d2d2"/></linearGradient>
<polygon points="328,346 580,400 578,453 330,395" fill="url(#gw)" />
<polygon points="328,346 580,400 580,404 328,350" fill="#9a9a9a" />
<polygon points="579,401 599.5,405 598.5,458 578,453" fill="#bcbcbc" />
<polygon points="599.5,405 628,411 628,421 600,460" fill="#9e9e9e" />
<polygon points="600,432.2 622.6,419 628,421 603.7,458 599.3,458" fill="#adadad" />
<polygon points="612.4,409 624,411.5 624,419.5 612.4,417.5" fill="#ececec" />
<polygon points="624,411.5 628.5,412.5 628.5,420.5 624,419.5" fill="#b2b2b2" />
<line x1="599.5" y1="405" x2="598.5" y2="456" stroke="#555" stroke-width="0.7" />
<line x1="579" y1="401" x2="578" y2="452" stroke="#777" stroke-width="0.6" />
<line x1="611" y1="418.4" x2="600" y2="432.2" stroke="#555" stroke-width="0.6" />
<polygon points="622.6,421.3 674.3,443.9 662,476 598,462 601.5,454" fill="#4c4c4c" />
<polygon points="281,336 637,410 637.5,414.6 280.5,339.8" fill="#e6d9ac" />
<line x1="280.5" y1="339.8" x2="637.5" y2="414.6" stroke="#4a4030" stroke-width="0.8" />
<g><polygon points="362,251 678,287.5 637,410 281,336" fill="#a66241" /><path d="M364.6 251.3L283.8 336.6M369.7 251.9L289.3 337.7M374.9 252.5L294.9 338.9M380.2 253.1L300.6 340.1M385.5 253.7L306.4 341.3M390.9 254.3L312.2 342.5M396.3 255L318 343.7M401.8 255.6L324 344.9M407.3 256.2L330 346.2M412.9 256.9L336.1 347.4M418.5 257.5L342.2 348.7M424.2 258.2L348.4 350M429.9 258.8L354.7 351.3M435.7 259.5L361.1 352.6M441.5 260.2L367.5 354M447.5 260.9L374 355.3M453.4 261.6L380.6 356.7M459.5 262.3L387.3 358.1M465.6 263L394 359.5M471.7 263.7L400.8 360.9M477.9 264.4L407.7 362.3M484.2 265.1L414.7 363.8M490.6 265.8L421.8 365.3M497 266.6L429 366.8M503.4 267.3L436.2 368.3M510 268.1L443.6 369.8M516.6 268.9L451 371.3M523.3 269.6L458.5 372.9M530.1 270.4L466.2 374.5M536.9 271.2L473.9 376.1M543.8 272L481.7 377.7M550.8 272.8L489.6 379.4M557.8 273.6L497.7 381M565 274.4L505.8 382.7M572.2 275.3L514 384.4M579.5 276.1L522.4 386.2M586.9 277L530.8 387.9M594.3 277.8L539.4 389.7M601.9 278.7L548.1 391.5M609.5 279.6L556.9 393.4M617.2 280.5L565.9 395.2M625 281.4L574.9 397.1M632.9 282.3L584.1 399M640.9 283.2L593.4 400.9M649 284.1L602.9 402.9M657.1 285.1L612.4 404.9M665.4 286L622.2 406.9M673.8 287L632 409" stroke="#c48a62" stroke-opacity=".55" stroke-width="2.8" fill="none"/><path d="M333.8 281.4L337.8 282L334.4 285.6L330.3 285Z" fill="#8a4a30" fill-opacity=".42"/><path d="M316.2 299.8L320.3 300.5L316.7 304.3L312.6 303.6Z" fill="#c4a08c" fill-opacity=".42"/><path d="M305.2 311.4L309.3 312.2L305.5 316.2L301.4 315.4Z" fill="#9a5a44" fill-opacity=".42"/><path d="M301.4 315.4L305.5 316.2L301.7 320.2L297.6 319.4Z" fill="#b8897c" fill-opacity=".42"/><path d="M297.6 319.4L301.7 320.2L297.8 324.3L293.7 323.5Z" fill="#b8897c" fill-opacity=".42"/><path d="M293.7 323.5L297.8 324.3L293.9 328.5L289.7 327.7Z" fill="#b8897c" fill-opacity=".42"/><path d="M361.7 258.2L365.6 258.6L362.5 262L358.5 261.5Z" fill="#d8984a" fill-opacity=".42"/><path d="M328.7 293.1L332.8 293.8L329.3 297.6L325.2 296.9Z" fill="#d8984a" fill-opacity=".42"/><path d="M318 304.5L322.1 305.3L318.5 309.2L314.3 308.4Z" fill="#d8984a" fill-opacity=".42"/><path d="M366.9 258.8L370.9 259.3L367.8 262.6L363.8 262.1Z" fill="#b8897c" fill-opacity=".42"/><path d="M354.3 272.3L358.3 272.9L355.1 276.4L351 275.8Z" fill="#c9784a" fill-opacity=".42"/><path d="M344.4 283L348.5 283.6L345.1 287.2L341 286.6Z" fill="#c4a08c" fill-opacity=".42"/><path d="M308.5 321.5L312.8 322.3L308.9 326.5L304.7 325.7Z" fill="#c4a08c" fill-opacity=".42"/><path d="M366 266.2L370 266.7L366.9 270.1L362.8 269.6Z" fill="#b8897c" fill-opacity=".42"/><path d="M374.4 263.5L378.5 264L375.5 267.4L371.3 266.9Z" fill="#c4a08c" fill-opacity=".42"/><path d="M348.5 292L352.8 292.6L349.3 296.4L345.1 295.7Z" fill="#c9784a" fill-opacity=".42"/><path d="M345.1 295.7L349.3 296.4L345.9 300.3L341.6 299.6Z" fill="#c4a08c" fill-opacity=".42"/><path d="M323.6 319.5L327.9 320.3L324.1 324.4L319.8 323.6Z" fill="#d88a3a" fill-opacity=".42"/><path d="M319.8 323.6L324.1 324.4L320.3 328.7L316 327.8Z" fill="#8a4a30" fill-opacity=".42"/><path d="M312.1 332.1L316.4 333L312.5 337.3L308.2 336.4Z" fill="#9a5a44" fill-opacity=".42"/><path d="M357.5 289.1L361.7 289.7L358.4 293.5L354.1 292.8Z" fill="#8a4a30" fill-opacity=".42"/><path d="M354.1 292.8L358.4 293.5L355 297.3L350.7 296.6Z" fill="#c9784a" fill-opacity=".42"/><path d="M350.7 296.6L355 297.3L351.5 301.2L347.2 300.5Z" fill="#9a5a44" fill-opacity=".42"/><path d="M340.2 308.3L344.5 309.1L340.9 313.1L336.6 312.3Z" fill="#8a4a30" fill-opacity=".42"/><path d="M332.9 316.4L337.3 317.2L333.6 321.3L329.2 320.5Z" fill="#d88a3a" fill-opacity=".42"/><path d="M329.2 320.5L333.6 321.3L329.9 325.5L325.5 324.7Z" fill="#9a5a44" fill-opacity=".42"/><path d="M385.3 264.8L389.5 265.3L386.4 268.8L382.2 268.3Z" fill="#9a5a44" fill-opacity=".42"/><path d="M331.3 325.8L335.7 326.6L331.9 330.9L327.5 330.1Z" fill="#d88a3a" fill-opacity=".42"/><path d="M358.6 302.3L363 303L359.5 307L355.1 306.3Z" fill="#c4a08c" fill-opacity=".42"/><path d="M393.3 269.7L397.6 270.2L394.6 273.8L390.3 273.2Z" fill="#9a5a44" fill-opacity=".42"/><path d="M387.2 276.8L391.5 277.4L388.4 281L384.1 280.4Z" fill="#d8984a" fill-opacity=".42"/><path d="M353.9 315.4L358.4 316.2L354.8 320.3L350.3 319.5Z" fill="#b8897c" fill-opacity=".42"/><path d="M350.3 319.5L354.8 320.3L351.2 324.6L346.7 323.7Z" fill="#d88a3a" fill-opacity=".42"/><path d="M380.2 292.5L384.6 293.2L381.3 297L376.9 296.3Z" fill="#c4a08c" fill-opacity=".42"/><path d="M370.2 304.2L374.7 304.9L371.3 309L366.8 308.2Z" fill="#9a5a44" fill-opacity=".42"/><path d="M389.2 289.5L393.7 290.2L390.5 294L386 293.4Z" fill="#d8984a" fill-opacity=".42"/><path d="M382.7 297.2L387.2 297.9L383.9 301.9L379.4 301.2Z" fill="#9a5a44" fill-opacity=".42"/><path d="M379.4 301.2L383.9 301.9L380.6 305.9L376.1 305.2Z" fill="#c9784a" fill-opacity=".42"/><path d="M376.1 305.2L380.6 305.9L377.2 310L372.7 309.2Z" fill="#d8984a" fill-opacity=".42"/><path d="M369.2 313.3L373.8 314.1L370.3 318.3L365.7 317.5Z" fill="#9a5a44" fill-opacity=".42"/><path d="M404.4 279.2L408.8 279.8L405.8 283.5L401.3 282.9Z" fill="#c4a08c" fill-opacity=".42"/><path d="M395.1 290.4L399.6 291.1L396.4 294.9L391.9 294.3Z" fill="#8a4a30" fill-opacity=".42"/><path d="M364.7 327.1L369.3 327.9L365.7 332.3L361.1 331.4Z" fill="#c4a08c" fill-opacity=".42"/><path d="M361.1 331.4L365.7 332.3L362.1 336.8L357.4 335.8Z" fill="#c4a08c" fill-opacity=".42"/><path d="M353.7 340.3L358.4 341.3L354.6 345.9L349.9 344.9Z" fill="#b8897c" fill-opacity=".42"/><path d="M427.7 258.6L432.1 259.1L429.3 262.6L424.9 262Z" fill="#c4a08c" fill-opacity=".42"/><path d="M416.2 272.6L420.7 273.2L417.7 276.9L413.3 276.3Z" fill="#9a5a44" fill-opacity=".42"/><path d="M397.4 304L402.1 304.8L398.8 308.9L394.1 308.1Z" fill="#c4a08c" fill-opacity=".42"/><path d="M362.4 347.4L367.3 348.4L363.5 353.2L358.6 352.1Z" fill="#b8897c" fill-opacity=".42"/><path d="M422.1 281.6L426.7 282.2L423.7 286L419.1 285.3Z" fill="#d8984a" fill-opacity=".42"/><path d="M379.8 334.9L384.6 335.9L381 340.4L376.2 339.5Z" fill="#8a4a30" fill-opacity=".42"/><path d="M439.7 267.7L444.2 268.2L441.4 271.9L436.9 271.3Z" fill="#d8984a" fill-opacity=".42"/><path d="M434 274.9L438.6 275.5L435.7 279.2L431.1 278.6Z" fill="#d8984a" fill-opacity=".42"/><path d="M448.4 264.8L453 265.4L450.3 269L445.7 268.4Z" fill="#c9784a" fill-opacity=".42"/><path d="M412.8 311.1L417.6 311.9L414.4 316.2L409.5 315.3Z" fill="#d88a3a" fill-opacity=".42"/><path d="M406.2 319.6L411.1 320.5L407.8 324.8L402.9 324Z" fill="#d8984a" fill-opacity=".42"/><path d="M454.5 265.5L459.1 266.1L456.4 269.7L451.7 269.1Z" fill="#9a5a44" fill-opacity=".42"/><path d="M422.3 308L427.2 308.7L424 313L419.1 312.2Z" fill="#d88a3a" fill-opacity=".42"/><path d="M460.6 266.3L465.2 266.8L462.6 270.5L457.9 269.9Z" fill="#9a5a44" fill-opacity=".42"/><path d="M440.8 292.7L445.7 293.4L442.7 297.4L437.9 296.7Z" fill="#c4a08c" fill-opacity=".42"/><path d="M455.8 281.9L460.6 282.5L457.8 286.4L453 285.7Z" fill="#b8897c" fill-opacity=".42"/><path d="M435.2 310L440.1 310.8L437 315.1L432.1 314.3Z" fill="#d88a3a" fill-opacity=".42"/><path d="M428.9 318.6L433.9 319.4L430.7 323.8L425.7 322.9Z" fill="#b8897c" fill-opacity=".42"/><path d="M419.1 331.9L424.2 332.8L420.9 337.4L415.8 336.5Z" fill="#b8897c" fill-opacity=".42"/><path d="M475.6 264.1L480.3 264.7L477.7 268.3L472.9 267.7Z" fill="#9a5a44" fill-opacity=".42"/><path d="M467.6 275.1L472.4 275.7L469.7 279.5L464.9 278.9Z" fill="#c9784a" fill-opacity=".42"/><path d="M464.9 278.9L469.7 279.5L467 283.4L462.1 282.7Z" fill="#d8984a" fill-opacity=".42"/><path d="M459.3 286.6L464.2 287.3L461.4 291.2L456.5 290.5Z" fill="#c9784a" fill-opacity=".42"/><path d="M450.7 298.6L455.7 299.3L452.7 303.4L447.7 302.7Z" fill="#b8897c" fill-opacity=".42"/><path d="M447.7 302.7L452.7 303.4L449.7 307.6L444.7 306.8Z" fill="#b8897c" fill-opacity=".42"/><path d="M468.5 283.6L473.4 284.2L470.7 288.2L465.8 287.5Z" fill="#c4a08c" fill-opacity=".42"/><path d="M451.3 307.8L456.4 308.6L453.4 312.9L448.3 312.1Z" fill="#8a4a30" fill-opacity=".42"/><path d="M485.6 269.2L490.4 269.8L487.9 273.6L483 273Z" fill="#9a5a44" fill-opacity=".42"/><path d="M422.6 359.7L428 360.7L424.5 365.8L419.1 364.7Z" fill="#c4a08c" fill-opacity=".42"/><path d="M467.6 305.7L472.8 306.4L469.9 310.7L464.7 309.9Z" fill="#9a5a44" fill-opacity=".42"/><path d="M439.9 346.3L445.2 347.3L441.9 352.2L436.5 351.1Z" fill="#9a5a44" fill-opacity=".42"/><path d="M436.5 351.1L441.9 352.2L438.6 357.2L433.2 356.1Z" fill="#8a4a30" fill-opacity=".42"/><path d="M429.7 361.1L435.2 362.2L431.7 367.3L426.2 366.2Z" fill="#9a5a44" fill-opacity=".42"/><path d="M493.4 278.4L498.4 279L495.8 282.9L490.8 282.2Z" fill="#8a4a30" fill-opacity=".42"/><path d="M488.1 286.2L493.2 286.8L490.6 290.9L485.5 290.2Z" fill="#8a4a30" fill-opacity=".42"/><path d="M480 298.3L485.2 299L482.4 303.2L477.2 302.5Z" fill="#c9784a" fill-opacity=".42"/><path d="M507.5 267.8L512.5 268.4L510.1 272.1L505 271.6Z" fill="#d88a3a" fill-opacity=".42"/><path d="M469.6 325.4L475 326.3L472 330.9L466.6 329.9Z" fill="#d8984a" fill-opacity=".42"/><path d="M460.4 339.3L465.9 340.3L462.8 345.1L457.3 344.1Z" fill="#8a4a30" fill-opacity=".42"/><path d="M450.8 353.9L456.4 355L453.1 360L447.5 358.9Z" fill="#c9784a" fill-opacity=".42"/><path d="M511.7 272.3L516.7 272.9L514.3 276.8L509.2 276.2Z" fill="#9a5a44" fill-opacity=".42"/><path d="M482.5 317.5L487.9 318.4L485 322.9L479.6 322Z" fill="#b8897c" fill-opacity=".42"/><path d="M454.9 360.4L460.5 361.5L457.2 366.7L451.5 365.5Z" fill="#8a4a30" fill-opacity=".42"/><path d="M489.6 318.6L495 319.5L492.2 324L486.7 323.2Z" fill="#8a4a30" fill-opacity=".42"/><path d="M477.9 337.1L483.5 338.1L480.5 342.9L474.9 341.9Z" fill="#8a4a30" fill-opacity=".42"/><path d="M510.2 298L515.6 298.8L513 303L507.6 302.3Z" fill="#b8897c" fill-opacity=".42"/><path d="M519.8 294.8L525.2 295.6L522.7 299.8L517.3 299Z" fill="#c4a08c" fill-opacity=".42"/><path d="M514.7 303.3L520.1 304L517.5 308.4L512.1 307.6Z" fill="#9a5a44" fill-opacity=".42"/><path d="M509.4 312L514.9 312.8L512.3 317.3L506.7 316.4Z" fill="#c9784a" fill-opacity=".42"/><path d="M495.5 334.9L501.2 335.8L498.3 340.7L492.6 339.7Z" fill="#d8984a" fill-opacity=".42"/><path d="M489.7 344.6L495.4 345.6L492.4 350.6L486.7 349.5Z" fill="#c9784a" fill-opacity=".42"/><path d="M480.5 359.6L486.3 360.8L483.2 366L477.4 364.8Z" fill="#8a4a30" fill-opacity=".42"/><path d="M524.4 300L529.9 300.8L527.4 305.1L521.9 304.3Z" fill="#c4a08c" fill-opacity=".42"/><path d="M505.8 331.4L511.5 332.3L508.7 337.1L503 336.2Z" fill="#9a5a44" fill-opacity=".42"/><path d="M481.9 371.7L487.9 372.9L484.7 378.3L478.7 377.1Z" fill="#d8984a" fill-opacity=".42"/><path d="M492.9 367.9L498.9 369.1L495.8 374.5L489.8 373.3Z" fill="#d8984a" fill-opacity=".42"/><path d="M550.7 281.2L556.1 281.9L553.9 286L548.4 285.3Z" fill="#9a5a44" fill-opacity=".42"/><path d="M533.9 310.8L539.6 311.6L537.1 316.1L531.4 315.3Z" fill="#d88a3a" fill-opacity=".42"/><path d="M528.8 319.8L534.6 320.7L532 325.4L526.2 324.4Z" fill="#c4a08c" fill-opacity=".42"/><path d="M523.6 329.1L529.4 330.1L526.7 334.9L520.9 333.9Z" fill="#b8897c" fill-opacity=".42"/><path d="M506.8 358.9L512.8 360L509.8 365.3L503.8 364.1Z" fill="#9a5a44" fill-opacity=".42"/><path d="M543.9 307.4L549.6 308.3L547.1 312.7L541.4 311.9Z" fill="#d8984a" fill-opacity=".42"/><path d="M525.9 340.1L531.8 341.1L529.1 346.1L523.1 345Z" fill="#d8984a" fill-opacity=".42"/><path d="M523.1 345L529.1 346.1L526.4 351.1L520.4 350.1Z" fill="#d88a3a" fill-opacity=".42"/><path d="M558.4 295.5L564.1 296.2L561.8 300.5L556.1 299.8Z" fill="#8a4a30" fill-opacity=".42"/><path d="M556.1 299.8L561.8 300.5L559.5 304.9L553.8 304.1Z" fill="#d88a3a" fill-opacity=".42"/><path d="M541.5 326.9L547.4 327.8L544.9 332.6L538.9 331.6Z" fill="#8a4a30" fill-opacity=".42"/><path d="M531 346.4L537 347.5L534.3 352.6L528.3 351.5Z" fill="#c4a08c" fill-opacity=".42"/><path d="M576.7 275.8L582.3 276.4L580.2 280.5L574.6 279.8Z" fill="#8a4a30" fill-opacity=".42"/><path d="M570.3 288L576 288.7L573.8 292.9L568.1 292.2Z" fill="#c4a08c" fill-opacity=".42"/><path d="M559 309.6L564.8 310.4L562.5 315L556.6 314.1Z" fill="#d88a3a" fill-opacity=".42"/><path d="M556.6 314.1L562.5 315L560.1 319.6L554.2 318.7Z" fill="#b8897c" fill-opacity=".42"/><path d="M549.3 328.1L555.3 329L552.8 333.9L546.8 332.9Z" fill="#d88a3a" fill-opacity=".42"/><path d="M544.2 337.8L550.3 338.8L547.7 343.8L541.6 342.8Z" fill="#9a5a44" fill-opacity=".42"/><path d="M539 347.8L545.1 348.9L542.4 354L536.3 352.9Z" fill="#c4a08c" fill-opacity=".42"/><path d="M577.8 288.9L583.5 289.7L581.4 293.9L575.6 293.2Z" fill="#c4a08c" fill-opacity=".42"/><path d="M562 319.9L568 320.8L565.6 325.5L559.6 324.6Z" fill="#8a4a30" fill-opacity=".42"/><path d="M559.6 324.6L565.6 325.5L563.2 330.3L557.2 329.4Z" fill="#b8897c" fill-opacity=".42"/><path d="M557.2 329.4L563.2 330.3L560.8 335.2L554.7 334.2Z" fill="#d8984a" fill-opacity=".42"/><path d="M552.2 339.1L558.3 340.1L555.8 345.2L549.6 344.1Z" fill="#c9784a" fill-opacity=".42"/><path d="M604.6 283.4L610.5 284.1L608.6 288.3L602.7 287.6Z" fill="#c9784a" fill-opacity=".42"/><path d="M576.7 343.2L583 344.3L580.7 349.4L574.3 348.3Z" fill="#b8897c" fill-opacity=".42"/><path d="M585.1 344.6L591.5 345.7L589.2 350.9L582.7 349.8Z" fill="#c9784a" fill-opacity=".42"/><path d="M572.9 371.4L579.6 372.6L577.1 378.3L570.4 377Z" fill="#8a4a30" fill-opacity=".42"/><path d="M622 281L628 281.7L626.2 285.9L620.2 285.2Z" fill="#c9784a" fill-opacity=".42"/><path d="M612.6 302.6L618.7 303.4L616.8 308L610.6 307.2Z" fill="#d88a3a" fill-opacity=".42"/><path d="M606.5 316.4L612.8 317.3L610.8 322.1L604.4 321.1Z" fill="#d88a3a" fill-opacity=".42"/><path d="M591.3 351.2L597.8 352.4L595.5 357.7L588.9 356.5Z" fill="#c9784a" fill-opacity=".42"/><path d="M584.1 367.4L590.8 368.7L588.4 374.3L581.7 373Z" fill="#8a4a30" fill-opacity=".42"/><path d="M581.7 373L588.4 374.3L586 380L579.2 378.7Z" fill="#b8897c" fill-opacity=".42"/><path d="M629.9 281.9L635.9 282.6L634.2 286.9L628.1 286.2Z" fill="#b8897c" fill-opacity=".42"/><path d="M628.1 286.2L634.2 286.9L632.4 291.2L626.3 290.5Z" fill="#8a4a30" fill-opacity=".42"/><path d="M616.8 312.9L623.1 313.8L621.1 318.5L614.8 317.6Z" fill="#9a5a44" fill-opacity=".42"/><path d="M604.3 342.3L610.9 343.3L608.7 348.5L602.1 347.4Z" fill="#d88a3a" fill-opacity=".42"/><path d="M583.2 392.2L590.1 393.6L587.6 399.7L580.6 398.3Z" fill="#c9784a" fill-opacity=".42"/><path d="M625.1 314L631.5 314.9L629.6 319.7L623.1 318.8Z" fill="#d8984a" fill-opacity=".42"/><path d="M621.2 323.6L627.6 324.6L625.7 329.5L619.2 328.5Z" fill="#8a4a30" fill-opacity=".42"/><path d="M639 301.3L645.3 302.1L643.6 306.7L637.2 305.9Z" fill="#d88a3a" fill-opacity=".42"/><path d="M635.4 310.5L641.8 311.4L640 316.1L633.5 315.2Z" fill="#d88a3a" fill-opacity=".42"/><path d="M629.7 324.9L636.3 325.8L634.4 330.8L627.8 329.8Z" fill="#d88a3a" fill-opacity=".42"/><path d="M647.3 302.4L653.7 303.2L652 307.9L645.6 307Z" fill="#b8897c" fill-opacity=".42"/><path d="M640.2 321.2L646.8 322.2L645 327.1L638.3 326.1Z" fill="#c4a08c" fill-opacity=".42"/><path d="M624.5 362.8L631.4 364L629.4 369.6L622.3 368.4Z" fill="#c4a08c" fill-opacity=".42"/><path d="M660.7 290L667 290.8L665.5 295.2L659.1 294.5Z" fill="#c9784a" fill-opacity=".42"/><path d="M629.5 375.8L636.7 377.1L634.6 383L627.4 381.6Z" fill="#c4a08c" fill-opacity=".42"/><path d="M667.5 295.5L674 296.3L672.5 300.8L665.9 300Z" fill="#9a5a44" fill-opacity=".42"/><path d="M664.3 304.6L670.9 305.4L669.3 310.1L662.7 309.3Z" fill="#c4a08c" fill-opacity=".42"/><path d="M646.8 354.9L653.9 356.1L652 361.6L644.9 360.4Z" fill="#c9784a" fill-opacity=".42"/><path d="M641 371.7L648.2 373L646.2 378.9L638.9 377.5Z" fill="#d88a3a" fill-opacity=".42"/><path d="M638.9 377.5L646.2 378.9L644.2 384.8L636.9 383.4Z" fill="#b8897c" fill-opacity=".42"/><path d="M362 251L281 336M367.1 251.6L286.5 337.1M372.3 252.2L292.1 338.3M377.6 252.8L297.8 339.5M382.9 253.4L303.5 340.7M388.2 254L309.3 341.9M393.6 254.6L315.1 343.1M399 255.3L321 344.3M404.5 255.9L327 345.6M410.1 256.6L333 346.8M415.7 257.2L339.1 348.1M421.3 257.9L345.3 349.4M427 258.5L351.6 350.7M432.8 259.2L357.9 352M438.6 259.8L364.3 353.3M444.5 260.5L370.7 354.7M450.4 261.2L377.3 356M456.4 261.9L383.9 357.4M462.5 262.6L390.6 358.8M468.6 263.3L397.4 360.2M474.8 264L404.3 361.6M481.1 264.8L411.2 363.1M487.4 265.5L418.3 364.5M493.8 266.2L425.4 366M500.2 267L432.6 367.5M506.7 267.7L439.9 369M513.3 268.5L447.3 370.6M519.9 269.2L454.8 372.1M526.7 270L462.3 373.7M533.5 270.8L470 375.3M540.3 271.6L477.8 376.9M547.3 272.4L485.7 378.5M554.3 273.2L493.6 380.2M561.4 274L501.7 381.9M568.6 274.9L509.9 383.6M575.8 275.7L518.2 385.3M583.2 276.5L526.6 387.1M590.6 277.4L535.1 388.8M598.1 278.3L543.8 390.6M605.7 279.1L552.5 392.4M613.3 280L561.4 394.3M621.1 280.9L570.4 396.2M628.9 281.8L579.5 398M636.9 282.8L588.7 400M644.9 283.7L598.1 401.9M653 284.6L607.6 403.9M661.3 285.6L617.3 405.9M669.6 286.5L627.1 407.9M678 287.5L637 410" stroke="#55301c" stroke-opacity="0.62" stroke-width="1.5" fill="none"/><path d="M362 251L678 287.5M358.9 254.2L676.5 291.9M355.9 257.4L675 296.4M352.7 260.7L673.5 301M349.6 264.1L671.9 305.6M346.4 267.4L670.4 310.3M343.1 270.8L668.8 315.1M339.8 274.3L667.2 319.9M336.5 277.8L665.5 324.8M333.1 281.3L663.8 329.9M329.7 284.9L662.1 335M326.2 288.5L660.4 340.2M322.7 292.2L658.6 345.4M319.2 295.9L656.8 350.8M315.6 299.7L655 356.3M312 303.5L653.1 361.8M308.3 307.4L651.2 367.5M304.5 311.3L649.3 373.2M300.7 315.3L647.4 379.1M296.9 319.3L645.4 385M293 323.4L643.3 391.1M289.1 327.5L641.3 397.3M285.1 331.7L639.1 403.6M281 336L637 410" stroke="#55301c" stroke-opacity="0.26" stroke-width="1.0" fill="none"/></g>
<polygon points="362,251 678,287.5 637,410 281,336" fill="none" stroke="#2a1810" stroke-width="1"/>
<polygon points="678,287.5 680.3,288 639.5,413 637,410" fill="#d9cda6" />
<line x1="680.3" y1="288" x2="639.5" y2="413" stroke="#3a3020" stroke-width="0.7" />
<line x1="763" y1="281" x2="806" y2="284.7" stroke="#f0f0f0" stroke-width="0.8" />
<line x1="806" y1="281.5" x2="806" y2="285.5" stroke="#f0f0f0" stroke-width="0.8" />
<line x1="742.8" y1="375.8" x2="777.2" y2="382.6" stroke="#f2f2f2" stroke-width="0.9" />
<line x1="736" y1="384" x2="908" y2="417" stroke="#f2f2f2" stroke-width="0.9" />
<line x1="776.6" y1="382.6" x2="768.4" y2="436.3" stroke="#f2f2f2" stroke-width="0.9" />
<polygon points="776.6,382.6 777.6,386.3 774.5,385.8" fill="#f2f2f2" />
<polygon points="768.4,436.3 767.4,432.6 770.5,433.1" fill="#f2f2f2" />
<line x1="639.6" y1="399.1" x2="719.4" y2="416.5" stroke="#f2f2f2" stroke-width="0.9" />
<line x1="639.6" y1="410.2" x2="768.9" y2="437.7" stroke="#f2f2f2" stroke-width="0.9" />
<line x1="718.5" y1="416.5" x2="696" y2="477.5" stroke="#f2f2f2" stroke-width="0.9" />
<polygon points="718.5,416.5 718.8,420.3 715.9,419.3" fill="#f2f2f2" />
<polygon points="707.5,421.5 707.7,425.3 704.8,424.3" fill="#f2f2f2" />
<line x1="675.4" y1="444.5" x2="744.2" y2="460.5" stroke="#f2f2f2" stroke-width="0.9" />
<line x1="744.2" y1="460.5" x2="740" y2="477.5" stroke="#f2f2f2" stroke-width="0.9" />
<polygon points="744.2,460.5 744.9,464.3 741.9,463.5" fill="#f2f2f2" />
<line x1="791" y1="471.5" x2="941" y2="505" stroke="#f2f2f2" stroke-width="0.9" />
<line x1="902.5" y1="376" x2="943.5" y2="504.5" stroke="#f2f2f2" stroke-width="1.0" />
<line x1="792.3" y1="471.5" x2="791" y2="485.8" stroke="#f2f2f2" stroke-width="0.9" />
<polygon points="792.3,471.5 793.5,475.1 790.4,474.9" fill="#f2f2f2" />
<line x1="749.7" y1="345.5" x2="742.8" y2="375.8" stroke="#f2f2f2" stroke-width="0.7" />
<line x1="751" y1="344" x2="799" y2="350.5" stroke="#f2f2f2" stroke-width="0.8" />
<line x1="760" y1="326.7" x2="788.3" y2="330" stroke="#f2f2f2" stroke-width="0.8" />
<line x1="803" y1="354.5" x2="840" y2="358" stroke="#f2f2f2" stroke-width="2.2" stroke-dasharray="1.2 1.6" stroke-opacity=".8"/>
<line x1="843.3" y1="357.7" x2="895" y2="365" stroke="#f2f2f2" stroke-width="0.8" />
<line x1="776" y1="320.5" x2="800" y2="323.3" stroke="#f2f2f2" stroke-width="1.2" stroke-dasharray="2 2.5" stroke-opacity=".7"/>
<line x1="724" y1="385" x2="740" y2="386" stroke="#f2f2f2" stroke-width="2.5" stroke-dasharray="1.5 1.2" stroke-opacity=".85"/>
<g font-family="Liberation Sans, sans-serif" font-size="8.6" fill="#f4f4f4">
<rect x="752" y="403" width="42" height="10" fill="url(#pave)"/>
<text x="753" y="411.3">4701,7mm</text>
<text x="683.6" y="464">5800,0mm</text>
<text x="729.6" y="486">2,5m</text>
<text x="771" y="499.2">2500,0mm</text>
</g>
<g><polygon points="40,316 958,546.2 965,657 40,365.6" fill="#95693b" /><path d="M78.5 350.7L80.6 351.2L80.7 373.9L78.6 373.2Z" fill="#4a2c14" fill-opacity="0.04"/><path d="M182.2 351.6L185 352.4L185.5 406.9L182.7 406.1Z" fill="#c9a06a" fill-opacity="0.07"/><path d="M363.4 425.4L367.6 426.6L368.6 469.1L364.4 467.8Z" fill="#4a2c14" fill-opacity="0.12"/><path d="M336.2 390.3L339.7 391.1L341.1 460.5L337.6 459.4Z" fill="#c9a06a" fill-opacity="0.08"/><path d="M220.1 380.2L223.5 381.1L224 418L220.6 416.9Z" fill="#4a2c14" fill-opacity="0.05"/><path d="M325.5 419.2L330.6 420.7L331.3 457.4L326.2 455.8Z" fill="#4a2c14" fill-opacity="0.12"/><path d="M139.3 359.2L142.8 360.1L142.9 382.2L139.5 381.2Z" fill="#4a2c14" fill-opacity="0.07"/><path d="M94.4 329.6L96.7 330.2L96.9 380.1L94.6 379.4Z" fill="#c9a06a" fill-opacity="0.06"/><path d="M625.3 486.8L631 488.3L632.9 536.1L627.2 534.4Z" fill="#4a2c14" fill-opacity="0.09"/><path d="M82.3 338L85.4 338.8L85.5 366.4L82.4 365.5Z" fill="#4a2c14" fill-opacity="0.11"/><path d="M111.7 358.2L113.9 358.9L114 388.9L111.8 388.2Z" fill="#4a2c14" fill-opacity="0.05"/><path d="M538 440.9L545.1 442.7L547.2 504.3L540.1 502.2Z" fill="#4a2c14" fill-opacity="0.05"/><path d="M920.8 560.4L932.9 563.6L938.2 648.5L925.9 644.7Z" fill="#4a2c14" fill-opacity="0.11"/><path d="M930.1 539.2L941.2 542L948 651.6L936.8 648.1Z" fill="#4a2c14" fill-opacity="0.10"/><path d="M921.5 553.3L930 555.5L932.9 603.1L924.3 600.6Z" fill="#4a2c14" fill-opacity="0.09"/><path d="M775.1 510.3L782.3 512.1L786.9 600.9L779.6 598.6Z" fill="#4a2c14" fill-opacity="0.04"/><path d="M807.7 508.5L815.4 510.4L820.4 604.4L812.7 602Z" fill="#c9a06a" fill-opacity="0.05"/><path d="M570.3 449L576.5 450.5L579.7 535.6L573.4 533.6Z" fill="#4a2c14" fill-opacity="0.07"/><path d="M462.9 430.6L468.4 432L469.7 474.5L464.2 472.9Z" fill="#c9a06a" fill-opacity="0.09"/><path d="M400.1 433.8L405 435.1L405.7 463.7L400.8 462.3Z" fill="#c9a06a" fill-opacity="0.06"/><path d="M61.2 345.5L63.2 346.1L63.3 371.8L61.2 371.2Z" fill="#4a2c14" fill-opacity="0.09"/><path d="M777.1 500.8L785.3 502.9L790.4 602L782.1 599.4Z" fill="#4a2c14" fill-opacity="0.11"/><path d="M738.9 491.3L746.8 493.2L751.5 589.7L743.5 587.2Z" fill="#4a2c14" fill-opacity="0.06"/><path d="M242.1 366.7L246 367.7L246.9 430.8L243 429.5Z" fill="#4a2c14" fill-opacity="0.04"/><path d="M187.5 353L191.1 353.9L191.5 395.6L187.9 394.5Z" fill="#c9a06a" fill-opacity="0.06"/><path d="M607.8 488.6L615.9 490.9L617.7 536L609.5 533.5Z" fill="#c9a06a" fill-opacity="0.05"/><path d="M300.4 396L304.3 397L305.3 449.2L301.3 447.9Z" fill="#4a2c14" fill-opacity="0.08"/><path d="M527.6 459.2L533.2 460.7L534.7 505.5L529.1 503.8Z" fill="#c9a06a" fill-opacity="0.06"/><path d="M818.4 511.2L825.9 513.1L830.3 594.7L822.8 592.4Z" fill="#4a2c14" fill-opacity="0.05"/><path d="M174.3 349.7L177.9 350.6L178.1 372.3L174.5 371.3Z" fill="#c9a06a" fill-opacity="0.10"/><path d="M798.1 543.5L806.6 545.9L809.9 608.1L801.3 605.4Z" fill="#4a2c14" fill-opacity="0.11"/><path d="M647.3 468.3L654 470L656.8 535.4L650.1 533.4Z" fill="#c9a06a" fill-opacity="0.11"/><path d="M371.3 401.6L376.1 402.8L377.7 472L372.9 470.5Z" fill="#4a2c14" fill-opacity="0.07"/><path d="M892.2 580.6L902.5 583.5L905.7 638.3L895.4 635.1Z" fill="#4a2c14" fill-opacity="0.05"/><path d="M273.9 381.6L277.8 382.6L278.6 434.5L274.7 433.3Z" fill="#4a2c14" fill-opacity="0.09"/><path d="M49.1 326.4L51.3 327L51.3 357L49.1 356.3Z" fill="#4a2c14" fill-opacity="0.08"/><path d="M215.1 359.9L218.3 360.7L219 422L215.9 421Z" fill="#4a2c14" fill-opacity="0.11"/><path d="M338.3 390.8L342.8 391.9L344.2 461.4L339.7 460Z" fill="#c9a06a" fill-opacity="0.11"/><path d="M636.4 489.6L642.1 491.1L644.8 556.1L639 554.3Z" fill="#4a2c14" fill-opacity="0.10"/><path d="M227.9 363.1L231.7 364.1L232.4 417.4L228.6 416.3Z" fill="#4a2c14" fill-opacity="0.10"/><path d="M126 352.1L129 352.9L129.2 379.7L126.2 378.8Z" fill="#4a2c14" fill-opacity="0.09"/><path d="M131.8 339L134.8 339.8L135.2 395L132.2 394.1Z" fill="#4a2c14" fill-opacity="0.07"/><path d="M248.1 384.3L251 385.1L251.7 432.3L248.8 431.4Z" fill="#4a2c14" fill-opacity="0.09"/><path d="M73.3 328.8L75.8 329.4L75.9 356.4L73.4 355.7Z" fill="#4a2c14" fill-opacity="0.07"/><path d="M415.4 442.9L421.5 444.6L422.6 486.1L416.4 484.2Z" fill="#4a2c14" fill-opacity="0.11"/><path d="M352.2 394.3L356.5 395.4L357.9 456.8L353.5 455.5Z" fill="#c9a06a" fill-opacity="0.10"/><path d="M900.6 536.1L909.6 538.4L912.4 585L903.4 582.5Z" fill="#4a2c14" fill-opacity="0.08"/><path d="M283.3 402.6L287.4 403.7L288.1 443.8L284 442.5Z" fill="#4a2c14" fill-opacity="0.09"/><path d="M298.6 380.9L302.5 381.8L303.7 448.7L299.8 447.5Z" fill="#4a2c14" fill-opacity="0.09"/><path d="M53.6 338.7L56.3 339.4L56.3 364.1L53.6 363.3Z" fill="#c9a06a" fill-opacity="0.08"/><path d="M106.7 332.7L109.2 333.4L109.5 387.5L107 386.7Z" fill="#4a2c14" fill-opacity="0.12"/><path d="M615.1 460.2L622.5 462.1L626.1 550.2L618.6 547.9Z" fill="#c9a06a" fill-opacity="0.04"/><path d="M328.6 389.7L332.8 390.7L333.5 423.2L329.2 422Z" fill="#4a2c14" fill-opacity="0.06"/><path d="M275.5 389.6L279.4 390.6L279.9 424.7L276.1 423.5Z" fill="#c9a06a" fill-opacity="0.05"/><path d="M90.6 328.7L93.5 329.4L93.7 382.5L90.8 381.6Z" fill="#c9a06a" fill-opacity="0.06"/><path d="M210.8 373.4L214.5 374.4L214.8 394L211.1 392.9Z" fill="#4a2c14" fill-opacity="0.08"/><path d="M69.3 346.1L71.2 346.6L71.2 375.4L69.4 374.9Z" fill="#4a2c14" fill-opacity="0.05"/><path d="M61.6 321.4L63.8 322L63.9 373.1L61.7 372.4Z" fill="#c9a06a" fill-opacity="0.04"/><path d="M56 330.9L58.6 331.6L58.7 371.5L56 370.6Z" fill="#c9a06a" fill-opacity="0.11"/><path d="M714.9 485.2L722.7 487.2L727.2 582.1L719.3 579.6Z" fill="#4a2c14" fill-opacity="0.12"/><path d="M440.7 452.5L445.7 453.9L446.8 493.8L441.8 492.2Z" fill="#4a2c14" fill-opacity="0.09"/><path d="M326.6 405L330.7 406.1L331.7 457.5L327.6 456.2Z" fill="#c9a06a" fill-opacity="0.11"/><path d="M192.9 366.8L196.3 367.7L196.8 415L193.4 413.9Z" fill="#4a2c14" fill-opacity="0.11"/><path d="M222.1 364.8L225.5 365.7L226.2 424.3L222.9 423.2Z" fill="#4a2c14" fill-opacity="0.06"/><path d="M669.7 513.8L676.8 515.7L679 566.9L671.9 564.7Z" fill="#c9a06a" fill-opacity="0.09"/><path d="M396 431.8L399.9 432.9L401.1 479.4L397.1 478.1Z" fill="#4a2c14" fill-opacity="0.09"/><path d="M107.4 332.9L110.3 333.6L110.5 383.4L107.6 382.5Z" fill="#4a2c14" fill-opacity="0.06"/><path d="M551.5 474.9L558.7 476.9L560.3 521.8L553.1 519.6Z" fill="#c9a06a" fill-opacity="0.05"/><path d="M640.5 471L648.7 473.1L650.9 525.6L642.7 523.2Z" fill="#4a2c14" fill-opacity="0.08"/><path d="M694.4 493.3L703.8 495.7L706 543L696.5 540.3Z" fill="#4a2c14" fill-opacity="0.05"/><path d="M687.2 516.3L692.9 517.9L695.3 572L689.6 570.2Z" fill="#4a2c14" fill-opacity="0.07"/><path d="M829.3 515.9L838.6 518.3L844.2 618.9L834.7 616Z" fill="#c9a06a" fill-opacity="0.08"/><path d="M683.7 477.4L689.8 478.9L693.1 551.4L686.9 549.6Z" fill="#4a2c14" fill-opacity="0.11"/><path d="M166 352.8L169.6 353.8L169.9 386.7L166.3 385.6Z" fill="#c9a06a" fill-opacity="0.12"/><path d="M98.4 330.6L100.5 331.2L100.7 373.4L98.5 372.8Z" fill="#4a2c14" fill-opacity="0.10"/><path d="M417.7 410.7L421.9 411.8L423.4 468L419.2 466.8Z" fill="#4a2c14" fill-opacity="0.11"/><path d="M135 340L137.5 340.6L137.7 370L135.2 369.2Z" fill="#c9a06a" fill-opacity="0.10"/><path d="M360.7 396.4L365.1 397.5L366.7 468.5L362.3 467.1Z" fill="#c9a06a" fill-opacity="0.04"/><path d="M792.8 504.8L801.1 506.8L804.5 572L796.1 569.5Z" fill="#c9a06a" fill-opacity="0.05"/><path d="M252.2 369.2L255.2 370L256.2 433.7L253.1 432.7Z" fill="#4a2c14" fill-opacity="0.11"/><path d="M741.8 492L748.2 493.6L752.9 590.2L746.5 588.2Z" fill="#4a2c14" fill-opacity="0.06"/><path d="M740.2 491.6L749.5 493.9L754.2 590.6L744.8 587.6Z" fill="#4a2c14" fill-opacity="0.08"/><path d="M273.7 387.3L277.5 388.3L278 415.5L274.2 414.4Z" fill="#4a2c14" fill-opacity="0.06"/><path d="M42.6 316.6L45.2 317.3L45.3 366.8L42.6 365.9Z" fill="#4a2c14" fill-opacity="0.10"/><path d="M77 325.3L79.4 325.9L79.5 378L77.2 377.3Z" fill="#c9a06a" fill-opacity="0.06"/><path d="M734.6 517.9L743.8 520.4L747.1 588.4L737.9 585.5Z" fill="#4a2c14" fill-opacity="0.08"/><path d="M46.7 337.6L49.2 338.3L49.2 368.5L46.7 367.7Z" fill="#c9a06a" fill-opacity="0.11"/><path d="M273.7 406.7L276.6 407.5L277.1 436.7L274.1 435.8Z" fill="#4a2c14" fill-opacity="0.09"/><path d="M943.3 553.4L952.9 555.9L956.5 613.4L946.9 610.6Z" fill="#4a2c14" fill-opacity="0.07"/><path d="M247 377.6L250.2 378.4L250.5 401.4L247.4 400.5Z" fill="#c9a06a" fill-opacity="0.09"/><path d="M386.7 411.5L391.7 412.8L392.9 461.1L387.9 459.6Z" fill="#4a2c14" fill-opacity="0.07"/><path d="M957.1 548L958.1 548.2L962.6 619L961.5 618.7Z" fill="#c9a06a" fill-opacity="0.04"/><path d="M189.1 353.4L191.6 354L192.1 395.8L189.5 395.1Z" fill="#4a2c14" fill-opacity="0.05"/><path d="M549.5 443.8L554.7 445.1L556 483.3L550.9 481.8Z" fill="#c9a06a" fill-opacity="0.07"/><path d="M104.3 332.1L106.7 332.7L107 386.7L104.6 385.9Z" fill="#c9a06a" fill-opacity="0.07"/><path d="M543.6 442.3L549.4 443.7L552.3 527L546.5 525.2Z" fill="#c9a06a" fill-opacity="0.12"/><path d="M780.2 508.1L789.9 510.6L793.8 585.3L784 582.4Z" fill="#4a2c14" fill-opacity="0.06"/><path d="M229.4 370.8L232.5 371.6L233.2 426.5L230.1 425.5Z" fill="#c9a06a" fill-opacity="0.07"/><path d="M44 317L46.5 317.6L46.5 367.6L44 366.9Z" fill="#4a2c14" fill-opacity="0.06"/><path d="M138.6 340.7L141.6 341.5L141.9 385.4L138.9 384.5Z" fill="#c9a06a" fill-opacity="0.05"/><path d="M726.5 523.3L734.8 525.6L737 572.6L728.7 570Z" fill="#c9a06a" fill-opacity="0.08"/><path d="M279.4 395.4L283.5 396.5L284.3 442.5L280.1 441.2Z" fill="#c9a06a" fill-opacity="0.07"/><path d="M604.3 457.5L611.7 459.4L614.5 531.6L607.1 529.4Z" fill="#c9a06a" fill-opacity="0.09"/><path d="M697.5 503.4L704.4 505.2L706 541.1L699.1 539.1Z" fill="#4a2c14" fill-opacity="0.04"/><path d="M188.4 353.2L192.2 354.2L192.8 413.7L189 412.5Z" fill="#4a2c14" fill-opacity="0.09"/><path d="M889.9 568.7L898.9 571.1L902.8 637.4L893.8 634.6Z" fill="#c9a06a" fill-opacity="0.10"/><path d="M491.1 442.6L497.9 444.4L499.6 496.1L492.8 494Z" fill="#4a2c14" fill-opacity="0.06"/><path d="M607.3 469.5L615 471.5L616.7 514.8L609 512.6Z" fill="#4a2c14" fill-opacity="0.08"/><path d="M870.2 524.2L878.1 526.2L883 611.7L875 609.3Z" fill="#4a2c14" fill-opacity="0.05"/><path d="M819.8 529.8L828.9 532.1L833.4 615.5L824.3 612.7Z" fill="#4a2c14" fill-opacity="0.09"/><path d="M168.2 348.1L170.7 348.8L171.3 407L168.7 406.1Z" fill="#c9a06a" fill-opacity="0.06"/><path d="M160 346.1L162.6 346.8L163 387.8L160.4 387Z" fill="#4a2c14" fill-opacity="0.11"/><path d="M236.7 386L239.5 386.7L240.1 428.6L237.3 427.8Z" fill="#4a2c14" fill-opacity="0.07"/><path d="M77.6 338L79.9 338.6L80 366.6L77.7 365.9Z" fill="#c9a06a" fill-opacity="0.08"/><path d="M107.8 333L110.3 333.6L110.5 387.8L108 387Z" fill="#4a2c14" fill-opacity="0.10"/><path d="M137.9 340.5L141.1 341.4L141.5 397.6L138.3 396.6Z" fill="#4a2c14" fill-opacity="0.12"/><path d="M503.1 470.4L508.7 472L510.1 513.7L504.5 511.9Z" fill="#4a2c14" fill-opacity="0.06"/><path d="M376.4 400.3L381.3 401.6L382.2 439.1L377.2 437.7Z" fill="#4a2c14" fill-opacity="0.09"/><path d="M641.1 478.6L648 480.4L649.9 524.7L642.9 522.7Z" fill="#4a2c14" fill-opacity="0.05"/><path d="M136.4 356.4L139 357.1L139.3 396.9L136.7 396.1Z" fill="#c9a06a" fill-opacity="0.08"/><path d="M696.3 480.6L702.2 482.1L705.2 547.2L699.2 545.5Z" fill="#c9a06a" fill-opacity="0.06"/><path d="M804.6 507.7L813.1 509.9L818.5 610.8L809.9 608.1Z" fill="#4a2c14" fill-opacity="0.11"/><path d="M157.4 345.5L159.7 346L160.2 403.5L157.9 402.7Z" fill="#4a2c14" fill-opacity="0.11"/><path d="M278.6 375.8L282.9 376.9L284 442.1L279.7 440.7Z" fill="#c9a06a" fill-opacity="0.11"/><path d="M258.2 395.2L261.2 396L261.9 435.5L258.8 434.5Z" fill="#c9a06a" fill-opacity="0.08"/><path d="M830.3 518.4L838.5 520.5L843.9 618.9L835.7 616.3Z" fill="#4a2c14" fill-opacity="0.11"/><path d="M356.1 395.3L359.9 396.2L361.4 466.9L357.7 465.7Z" fill="#4a2c14" fill-opacity="0.04"/><path d="M124.4 350.3L126.6 350.9L126.8 389.6L124.6 388.9Z" fill="#4a2c14" fill-opacity="0.07"/><path d="M571.4 449.2L578.2 451L581.3 536.1L574.5 534Z" fill="#4a2c14" fill-opacity="0.08"/><path d="M138.8 340.8L141.5 341.4L141.8 397.7L139.2 396.9Z" fill="#c9a06a" fill-opacity="0.07"/><path d="M344.4 412.3L349.7 413.7L350.7 463.5L345.4 461.8Z" fill="#4a2c14" fill-opacity="0.04"/><path d="M392.9 406.4L397.5 407.6L399.2 478.8L394.7 477.3Z" fill="#4a2c14" fill-opacity="0.08"/><path d="M341.9 400.7L345.5 401.6L346.7 462.2L343.2 461.1Z" fill="#4a2c14" fill-opacity="0.05"/><path d="M324.6 391.4L328.1 392.3L329.4 456.8L325.8 455.6Z" fill="#4a2c14" fill-opacity="0.10"/><path d="M732 489.5L740.7 491.7L745.3 585.6L736.4 582.9Z" fill="#4a2c14" fill-opacity="0.11"/><path d="M739.1 491.3L748.8 493.7L751.6 549.4L741.8 546.6Z" fill="#c9a06a" fill-opacity="0.07"/><path d="M221.2 383L225.1 384.1L225.6 419.5L221.6 418.2Z" fill="#4a2c14" fill-opacity="0.06"/><path d="M541.8 465.5L547.8 467.1L549.6 519L543.6 517.1Z" fill="#4a2c14" fill-opacity="0.10"/><path d="M43.3 329.3L45.5 329.9L45.5 361L43.3 360.3Z" fill="#4a2c14" fill-opacity="0.06"/><path d="M769.3 528.3L776.1 530.2L779.2 592.5L772.4 590.4Z" fill="#c9a06a" fill-opacity="0.10"/><path d="M68.4 323.6L71.2 324.3L71.3 375.5L68.5 374.6Z" fill="#4a2c14" fill-opacity="0.11"/><path d="M288.3 385L291.9 385.9L292.9 445.3L289.4 444.2Z" fill="#c9a06a" fill-opacity="0.06"/><path d="M798.2 506.1L807.8 508.5L812.4 595.9L802.7 592.9Z" fill="#4a2c14" fill-opacity="0.09"/><path d="M401.8 406.7L406.4 407.9L408.2 476.3L403.5 474.8Z" fill="#4a2c14" fill-opacity="0.11"/><path d="M921.4 556.4L929.9 558.6L932.1 593.9L923.5 591.5Z" fill="#4a2c14" fill-opacity="0.11"/><path d="M210.8 358.8L213.6 359.5L214.3 418.3L211.5 417.4Z" fill="#c9a06a" fill-opacity="0.11"/><path d="M338.2 395.5L342.7 396.6L343.7 445.7L339.2 444.3Z" fill="#4a2c14" fill-opacity="0.09"/><path d="M567.8 448.4L573.2 449.7L576.3 534.5L570.9 532.8Z" fill="#4a2c14" fill-opacity="0.09"/><path d="M932.4 581.8L944.5 585.1L948.7 651.9L936.5 648Z" fill="#c9a06a" fill-opacity="0.09"/><path d="M469.6 424.6L475.2 426L477.6 503.4L471.9 501.7Z" fill="#c9a06a" fill-opacity="0.11"/><path d="M130.2 338.6L133 339.3L133.3 390.4L130.6 389.5Z" fill="#4a2c14" fill-opacity="0.12"/><path d="M592.6 487.7L598.9 489.4L600.7 536.4L594.4 534.5Z" fill="#c9a06a" fill-opacity="0.12"/><path d="M705.4 482.8L713.5 484.9L716.9 557.1L708.7 554.6Z" fill="#4a2c14" fill-opacity="0.10"/><path d="M77.3 325.4L79.6 325.9L79.8 378.1L77.4 377.4Z" fill="#c9a06a" fill-opacity="0.11"/><path d="M883.4 542.8L893.3 545.4L897.2 611.1L887.2 608.1Z" fill="#4a2c14" fill-opacity="0.07"/><path d="M339.8 423.9L343.3 424.9L344.1 461.4L340.5 460.3Z" fill="#4a2c14" fill-opacity="0.05"/><path d="M461.6 421.7L467.8 423.3L470.1 501.1L463.8 499.1Z" fill="#c9a06a" fill-opacity="0.11"/><path d="M891.8 537.8L901.8 540.4L907.2 631.7L897.2 628.6Z" fill="#4a2c14" fill-opacity="0.05"/><path d="M289.1 378.5L292.9 379.4L294 445.6L290.2 444.4Z" fill="#4a2c14" fill-opacity="0.07"/><path d="M619.6 487.6L626.6 489.5L629.1 551.2L622.1 549Z" fill="#c9a06a" fill-opacity="0.08"/><path d="M439.4 416.1L445.5 417.7L447.6 494L441.5 492.1Z" fill="#c9a06a" fill-opacity="0.04"/><path d="M83.4 351.4L85.5 352L85.6 380L83.5 379.3Z" fill="#4a2c14" fill-opacity="0.10"/><path d="M174.8 359.9L177.3 360.5L177.7 409L175.2 408.2Z" fill="#c9a06a" fill-opacity="0.04"/><path d="M192.7 354.3L196.3 355.2L196.6 388.3L193.1 387.3Z" fill="#4a2c14" fill-opacity="0.09"/><path d="M225.1 362.4L228.6 363.3L229.5 425.3L225.9 424.2Z" fill="#c9a06a" fill-opacity="0.09"/><path d="M507.4 450.3L513.6 452L515.7 515.5L509.5 513.5Z" fill="#c9a06a" fill-opacity="0.05"/><path d="M800.8 513.3L809.7 515.6L812.2 561.6L803.2 559Z" fill="#4a2c14" fill-opacity="0.09"/><path d="M673.7 485.6L679.2 487.1L681 526.6L675.4 525Z" fill="#c9a06a" fill-opacity="0.07"/><path d="M749.1 534.3L755.9 536.2L758.5 588.2L751.7 586.1Z" fill="#c9a06a" fill-opacity="0.10"/><path d="M42 322.2L44.6 322.9L44.6 347.1L42 346.3Z" fill="#c9a06a" fill-opacity="0.04"/><path d="M280 396.4L283.1 397.3L283.5 420.2L280.4 419.3Z" fill="#4a2c14" fill-opacity="0.09"/><path d="M527.6 466.8L535 468.8L536.8 522.1L529.4 519.8Z" fill="#4a2c14" fill-opacity="0.11"/><path d="M252.8 370.2L256.6 371.2L257.5 434.1L253.7 432.9Z" fill="#4a2c14" fill-opacity="0.07"/><path d="M151.8 362.4L155 363.2L155.2 390L152 389Z" fill="#c9a06a" fill-opacity="0.09"/><path d="M352.7 411.3L357.2 412.5L358.4 465.9L353.9 464.5Z" fill="#4a2c14" fill-opacity="0.07"/><path d="M335.9 408.8L340.7 410L341.7 460.7L337 459.2Z" fill="#4a2c14" fill-opacity="0.06"/><path d="M215.7 360.1L218.9 360.9L219.2 388.5L216 387.6Z" fill="#c9a06a" fill-opacity="0.07"/><path d="M544.4 442.5L551.3 444.2L554.3 527.6L547.3 525.4Z" fill="#c9a06a" fill-opacity="0.07"/><path d="M83.2 335.3L86.2 336.1L86.4 380.2L83.3 379.3Z" fill="#c9a06a" fill-opacity="0.11"/><path d="M729.2 506.1L736.2 507.9L740 586.1L732.9 583.9Z" fill="#4a2c14" fill-opacity="0.11"/><path d="M245.7 367.6L249.7 368.6L250.6 430.3L246.6 429Z" fill="#c9a06a" fill-opacity="0.05"/><path d="M621.2 461.7L626.5 463.1L629.9 548L624.6 546.4Z" fill="#4a2c14" fill-opacity="0.06"/><path d="M329.3 388.5L332.5 389.3L333.9 458.2L330.7 457.2Z" fill="#4a2c14" fill-opacity="0.05"/><path d="M355.3 417.4L360.2 418.7L360.7 441.9L355.8 440.4Z" fill="#4a2c14" fill-opacity="0.09"/><path d="M795.3 505.4L805.1 507.9L810.4 608.3L800.5 605.2Z" fill="#4a2c14" fill-opacity="0.04"/><path d="M370.4 398.9L375 400L376.4 457.9L371.7 456.5Z" fill="#4a2c14" fill-opacity="0.05"/><path d="M877.7 526.1L888.6 528.8L894.8 634.9L883.8 631.4Z" fill="#4a2c14" fill-opacity="0.10"/><path d="M645.2 467.8L653.8 469.9L657.3 551.5L648.6 548.8Z" fill="#4a2c14" fill-opacity="0.09"/><path d="M389.8 406.8L395.3 408.2L397 477.1L391.5 475.3Z" fill="#4a2c14" fill-opacity="0.10"/><path d="M669.5 473.9L676.3 475.6L680.4 567.3L673.5 565.2Z" fill="#c9a06a" fill-opacity="0.11"/><path d="M364.8 413L368.5 414L369.4 455.5L365.7 454.4Z" fill="#c9a06a" fill-opacity="0.12"/><path d="M51.6 318.9L54.3 319.6L54.4 370.1L51.7 369.3Z" fill="#4a2c14" fill-opacity="0.08"/><path d="M831.6 514.5L841.4 517L844.5 573.3L834.6 570.5Z" fill="#4a2c14" fill-opacity="0.07"/><path d="M947.8 543.6L958 546.2L965 657L954.7 653.8Z" fill="#4a2c14" fill-opacity="0.08"/><path d="M491.6 429.2L496.1 430.4L498.6 510.1L494.1 508.7Z" fill="#c9a06a" fill-opacity="0.11"/><path d="M76.9 325.2L79.5 325.9L79.7 378.1L77 377.3Z" fill="#c9a06a" fill-opacity="0.08"/><path d="M827.9 518.3L836.1 520.4L841.4 618.1L833.2 615.5Z" fill="#4a2c14" fill-opacity="0.09"/><path d="M653.8 489.7L660.1 491.4L662.8 554L656.5 552Z" fill="#4a2c14" fill-opacity="0.08"/><path d="M617.7 460.9L623.3 462.3L626.9 550.5L621.2 548.7Z" fill="#4a2c14" fill-opacity="0.05"/><path d="M298.8 380.9L303.8 382.1L304.8 439.8L299.9 438.3Z" fill="#4a2c14" fill-opacity="0.06"/><path d="M926.9 538.4L939.5 541.6L946.2 651.1L933.5 647.1Z" fill="#4a2c14" fill-opacity="0.09"/><path d="M130.3 344.2L133.7 345.1L134 391.9L130.6 390.9Z" fill="#c9a06a" fill-opacity="0.11"/><path d="M65.1 322.6L67.6 323.3L67.7 374.3L65.2 373.5Z" fill="#c9a06a" fill-opacity="0.12"/><path d="M681.7 476.9L690.1 479L693.9 563.8L685.4 561.2Z" fill="#c9a06a" fill-opacity="0.08"/><path d="M402.1 406.8L406.2 407.8L407.9 475.5L403.8 474.3Z" fill="#c9a06a" fill-opacity="0.11"/><path d="M303.9 411.8L307.5 412.8L308.2 450.1L304.5 448.9Z" fill="#4a2c14" fill-opacity="0.10"/><path d="M347.9 420.5L353.1 422L354 464.5L348.9 462.9Z" fill="#c9a06a" fill-opacity="0.06"/><path d="M247.4 384.7L251.6 385.8L252.3 432.5L248 431.1Z" fill="#4a2c14" fill-opacity="0.09"/><path d="M420.8 430.7L426.3 432.1L427.5 477.6L422 475.9Z" fill="#4a2c14" fill-opacity="0.08"/><path d="M445.5 417.7L451.1 419.1L453.3 495.8L447.7 494Z" fill="#c9a06a" fill-opacity="0.07"/><path d="M718.5 517.1L725.8 519.1L728.8 582.6L721.5 580.3Z" fill="#4a2c14" fill-opacity="0.04"/><path d="M135.4 345.7L138.9 346.6L139.3 396.9L135.8 395.8Z" fill="#4a2c14" fill-opacity="0.07"/><path d="M246 367.7L249.1 368.4L250 431.8L246.9 430.8Z" fill="#4a2c14" fill-opacity="0.08"/><path d="M722.6 487.2L728.9 488.8L733.4 584.1L727.1 582Z" fill="#c9a06a" fill-opacity="0.08"/><path d="M433 423.5L437.9 424.7L439.7 491.5L434.8 490Z" fill="#4a2c14" fill-opacity="0.12"/><path d="M288.7 378.4L293.5 379.6L294.7 445.8L289.9 444.3Z" fill="#4a2c14" fill-opacity="0.11"/><path d="M477 456.2L482.7 457.8L483.9 494.7L478.1 493Z" fill="#4a2c14" fill-opacity="0.10"/><path d="M72.1 343L75.2 343.8L75.2 376.7L72.2 375.8Z" fill="#4a2c14" fill-opacity="0.08"/><path d="M231.5 379L235.5 380L236.1 422.1L232.1 420.8Z" fill="#4a2c14" fill-opacity="0.06"/><path d="M206.8 373L209.5 373.7L209.8 400.3L207.1 399.5Z" fill="#c9a06a" fill-opacity="0.05"/><path d="M306 382.7L310.3 383.8L311.4 441.3L307 439.9Z" fill="#4a2c14" fill-opacity="0.12"/><path d="M42.2 330L44.1 330.5L44.1 349.5L42.2 348.9Z" fill="#4a2c14" fill-opacity="0.09"/><path d="M132 362.5L134.9 363.3L135.1 395.6L132.2 394.6Z" fill="#4a2c14" fill-opacity="0.05"/><path d="M380.6 401.4L386.3 402.8L388 475.2L382.3 473.4Z" fill="#4a2c14" fill-opacity="0.05"/><path d="M265.9 385.8L269.1 386.6L269.9 438L266.7 437Z" fill="#c9a06a" fill-opacity="0.05"/><path d="M474.3 455.1L478.8 456.3L480.2 504.3L475.7 502.9Z" fill="#c9a06a" fill-opacity="0.06"/><path d="M126.2 337.6L128.8 338.3L129.1 385.8L126.5 385Z" fill="#c9a06a" fill-opacity="0.05"/><path d="M828.6 547.5L835.6 549.4L838.5 601.5L831.5 599.4Z" fill="#4a2c14" fill-opacity="0.07"/><path d="M839.8 565.1L848.7 567.6L850.9 607.1L841.9 604.4Z" fill="#4a2c14" fill-opacity="0.12"/><path d="M507 460.2L511.8 461.5L513.5 512.2L508.7 510.6Z" fill="#4a2c14" fill-opacity="0.06"/><path d="M136.5 340.2L138.9 340.8L139.3 396.9L136.9 396.1Z" fill="#c9a06a" fill-opacity="0.05"/><path d="M615.9 472L622.4 473.7L625.5 550.1L618.9 548Z" fill="#c9a06a" fill-opacity="0.10"/><path d="M722.4 489.1L731.1 491.3L734 552L725.2 549.5Z" fill="#4a2c14" fill-opacity="0.11"/><path d="M189.5 353.5L192.7 354.3L193.3 409.2L190.1 408.2Z" fill="#4a2c14" fill-opacity="0.06"/><path d="M213.8 359.6L217.4 360.5L218.1 421.7L214.5 420.6Z" fill="#4a2c14" fill-opacity="0.10"/><path d="M202.9 356.8L206 357.6L206.6 413.8L203.5 412.8Z" fill="#c9a06a" fill-opacity="0.06"/><path d="M209.3 375.5L212 376.2L212.6 420L209.8 419.1Z" fill="#4a2c14" fill-opacity="0.11"/><path d="M153.6 364.9L156.8 365.8L157 385.8L153.7 384.8Z" fill="#c9a06a" fill-opacity="0.06"/><path d="M265.7 372.6L269.4 373.5L270.2 421.7L266.5 420.6Z" fill="#4a2c14" fill-opacity="0.08"/><path d="M122.7 336.7L125.8 337.5L126.1 391.5L123 390.5Z" fill="#c9a06a" fill-opacity="0.08"/><path d="M502.8 432.1L507.8 433.3L510.4 513.8L505.4 512.2Z" fill="#4a2c14" fill-opacity="0.05"/><path d="M742 492L749.6 493.9L754.2 588.3L746.5 585.9Z" fill="#c9a06a" fill-opacity="0.06"/><path d="M325.7 387.7L330.1 388.8L331.5 457.4L327.1 456Z" fill="#c9a06a" fill-opacity="0.10"/><path d="M152.7 344.3L156.1 345.1L156.3 373.7L152.9 372.8Z" fill="#4a2c14" fill-opacity="0.09"/><path d="M799.7 536.7L809.1 539.3L812.8 609.1L803.3 606.1Z" fill="#4a2c14" fill-opacity="0.06"/><path d="M616.5 460.6L622.8 462.1L626.4 550.3L620 548.3Z" fill="#4a2c14" fill-opacity="0.06"/><path d="M163.8 347L166.3 347.7L166.8 405.5L164.3 404.7Z" fill="#c9a06a" fill-opacity="0.06"/><path d="M731.7 489.5L738.4 491.1L743.1 587.1L736.3 584.9Z" fill="#4a2c14" fill-opacity="0.12"/><path d="M256.4 370.3L260.5 371.3L261.1 407.9L256.9 406.7Z" fill="#4a2c14" fill-opacity="0.10"/><path d="M86.5 336.1L88.7 336.7L88.8 371.1L86.6 370.4Z" fill="#4a2c14" fill-opacity="0.05"/><path d="M510.8 434.1L517.5 435.7L519.4 491.4L512.6 489.4Z" fill="#c9a06a" fill-opacity="0.05"/><path d="M207.1 357.9L209.7 358.6L210.2 399.1L207.6 398.4Z" fill="#4a2c14" fill-opacity="0.04"/><path d="M210.4 377.6L213.5 378.5L213.9 415.7L210.8 414.8Z" fill="#4a2c14" fill-opacity="0.08"/><path d="M141.7 341.6L144.9 342.4L145 364.6L141.9 363.7Z" fill="#c9a06a" fill-opacity="0.05"/><path d="M121.3 336.4L124.2 337.1L124.5 392.2L121.7 391.3Z" fill="#4a2c14" fill-opacity="0.12"/><path d="M672.4 483.4L678.7 485L682.3 567.9L676 566Z" fill="#4a2c14" fill-opacity="0.05"/><path d="M61.4 321.4L64 322L64.1 373.2L61.5 372.4Z" fill="#4a2c14" fill-opacity="0.04"/><path d="M796.5 527.8L803.4 529.6L807.5 607.4L800.5 605.2Z" fill="#4a2c14" fill-opacity="0.09"/><path d="M270.2 373.7L273.1 374.5L274.2 439.4L271.2 438.4Z" fill="#c9a06a" fill-opacity="0.06"/><path d="M355.2 395L359.6 396.1L361.2 466.8L356.7 465.4Z" fill="#4a2c14" fill-opacity="0.04"/><path d="M727.1 488.3L734.6 490.2L739.2 585.9L731.6 583.5Z" fill="#4a2c14" fill-opacity="0.09"/><path d="M235 364.9L238.2 365.7L238.9 418.6L235.7 417.7Z" fill="#4a2c14" fill-opacity="0.09"/><path d="M168.8 348.3L171.5 349L172 407.2L169.3 406.3Z" fill="#c9a06a" fill-opacity="0.05"/><path d="M340.7 391.4L345.8 392.7L347.3 462.4L342.2 460.8Z" fill="#c9a06a" fill-opacity="0.07"/><path d="M47.5 318.7L49.6 319.2L49.7 368.6L47.6 368Z" fill="#4a2c14" fill-opacity="0.12"/><path d="M78 325.5L79.9 326L80 378.2L78.1 377.6Z" fill="#4a2c14" fill-opacity="0.07"/><path d="M241.4 366.5L244.3 367.2L244.8 406.7L242 405.8Z" fill="#4a2c14" fill-opacity="0.05"/><path d="M217.9 360.6L221.6 361.5L222.2 414L218.5 412.8Z" fill="#c9a06a" fill-opacity="0.11"/><path d="M885.8 528.1L897.9 531.1L904.1 635.5L891.8 631.6Z" fill="#4a2c14" fill-opacity="0.09"/><path d="M227.4 391.8L230.2 392.6L230.7 425.7L227.9 424.8Z" fill="#c9a06a" fill-opacity="0.09"/><path d="M207.5 385.5L211.3 386.6L211.6 418.2L207.9 417Z" fill="#c9a06a" fill-opacity="0.06"/><path d="M104.7 332.2L106.8 332.8L107.1 386.7L105 386.1Z" fill="#c9a06a" fill-opacity="0.07"/><path d="M788.6 503.7L798.5 506.2L803.3 598.5L793.3 595.4Z" fill="#4a2c14" fill-opacity="0.06"/><path d="M146.1 368.5L149 369.3L149.3 400L146.3 399.1Z" fill="#4a2c14" fill-opacity="0.07"/><path d="M240.3 381.1L244.3 382.2L244.6 402.8L240.5 401.6Z" fill="#4a2c14" fill-opacity="0.05"/><path d="M108 341.7L111.3 342.5L111.5 388.1L108.2 387.1Z" fill="#c9a06a" fill-opacity="0.06"/><path d="M398.6 405.9L402.4 406.9L404.2 480.3L400.4 479.1Z" fill="#c9a06a" fill-opacity="0.11"/><path d="M301.6 413L304.8 413.9L305.5 449.2L302.2 448.2Z" fill="#4a2c14" fill-opacity="0.08"/><path d="M71.4 323.9L73.7 324.5L73.8 376.3L71.6 375.5Z" fill="#4a2c14" fill-opacity="0.12"/><path d="M466.1 454.1L471 455.4L472.3 501.8L467.5 500.3Z" fill="#4a2c14" fill-opacity="0.07"/><path d="M373.2 399.5L378.3 400.8L379.5 450.8L374.3 449.3Z" fill="#4a2c14" fill-opacity="0.04"/><path d="M71.6 325.5L73.6 326L73.7 364.8L71.7 364.2Z" fill="#4a2c14" fill-opacity="0.04"/><path d="M436.1 415.3L441.7 416.7L443.9 492.8L438.2 491Z" fill="#4a2c14" fill-opacity="0.08"/><path d="M94.9 336.2L97.4 336.8L97.6 382.3L95.1 381.5Z" fill="#c9a06a" fill-opacity="0.09"/><path d="M158.5 365.5L161.8 366.4L162.1 404.1L158.8 403Z" fill="#4a2c14" fill-opacity="0.10"/><path d="M230.9 370.4L234.5 371.3L235.1 419.2L231.5 418.1Z" fill="#4a2c14" fill-opacity="0.08"/><path d="M128 338.1L131.1 338.8L131.4 394.3L128.4 393.4Z" fill="#4a2c14" fill-opacity="0.07"/><path d="M338.9 390.9L343.2 392L344.6 455.6L340.2 454.3Z" fill="#4a2c14" fill-opacity="0.07"/><path d="M127.9 362.1L130.6 362.8L130.8 393.7L128.1 392.9Z" fill="#c9a06a" fill-opacity="0.05"/><path d="M313.4 391.3L318 392.4L319.2 453.6L314.6 452.1Z" fill="#4a2c14" fill-opacity="0.10"/><path d="M393.7 404.7L397.7 405.7L399.5 478.9L395.5 477.6Z" fill="#c9a06a" fill-opacity="0.08"/><path d="M659.9 500.6L667.4 502.6L670 564.1L662.5 561.7Z" fill="#4a2c14" fill-opacity="0.05"/><path d="M258.7 383.8L261.6 384.5L262.3 432.6L259.5 431.7Z" fill="#c9a06a" fill-opacity="0.08"/><path d="M709.3 488.8L717.1 490.8L721.2 580.2L713.4 577.7Z" fill="#c9a06a" fill-opacity="0.11"/><path d="M66.6 340.7L69 341.3L69.1 374.8L66.6 374Z" fill="#4a2c14" fill-opacity="0.07"/><path d="M669.9 474L676.1 475.5L680.1 565.5L673.8 563.6Z" fill="#4a2c14" fill-opacity="0.11"/><path d="M321.7 397.8L326.1 398.9L327.2 456.1L322.8 454.7Z" fill="#c9a06a" fill-opacity="0.12"/><path d="M269.7 389.1L273.1 390L273.6 419.8L270.2 418.8Z" fill="#c9a06a" fill-opacity="0.06"/><path d="M692 517.6L700.7 520L702.5 560.3L693.8 557.6Z" fill="#c9a06a" fill-opacity="0.05"/><path d="M72 346.4L74.4 347L74.5 373.2L72.1 372.5Z" fill="#c9a06a" fill-opacity="0.08"/><path d="M833.4 515L840.9 516.8L844.3 578.6L836.8 576.4Z" fill="#4a2c14" fill-opacity="0.12"/><path d="M942.6 588.7L950.7 590.9L954.6 653.7L946.5 651.2Z" fill="#4a2c14" fill-opacity="0.12"/><path d="M294 379.7L297.3 380.5L298.5 447L295.2 446Z" fill="#4a2c14" fill-opacity="0.06"/><path d="M198.4 355.7L201.1 356.4L201.8 416.6L199.1 415.7Z" fill="#4a2c14" fill-opacity="0.07"/><path d="M397 405.5L402.4 406.9L404.2 480.3L398.8 478.6Z" fill="#c9a06a" fill-opacity="0.05"/><path d="M595.2 461.9L600.4 463.2L603.4 539.5L598.2 537.9Z" fill="#4a2c14" fill-opacity="0.08"/><path d="M130.9 344.8L133.1 345.4L133.2 366.6L131.1 366Z" fill="#4a2c14" fill-opacity="0.07"/><path d="M339.2 391L343.2 392L344.5 457.2L340.6 456Z" fill="#4a2c14" fill-opacity="0.07"/><path d="M524 439.2L531 440.9L533.6 517.8L526.6 515.6Z" fill="#c9a06a" fill-opacity="0.11"/><path d="M63.3 335.6L65.9 336.3L65.9 354.6L63.4 353.9Z" fill="#4a2c14" fill-opacity="0.07"/><path d="M680.1 520.3L686.6 522.1L688.7 570L682.2 567.9Z" fill="#4a2c14" fill-opacity="0.07"/><path d="M621.9 504.6L630 506.9L631.9 552.1L623.7 549.5Z" fill="#4a2c14" fill-opacity="0.10"/><path d="M400.7 406.5L405.5 407.6L407.3 481.3L402.6 479.8Z" fill="#4a2c14" fill-opacity="0.07"/><path d="M390.7 405.5L395.3 406.7L396.3 446.8L391.6 445.4Z" fill="#4a2c14" fill-opacity="0.06"/><path d="M322.8 390.9L326.1 391.7L327.3 456.1L324 455.1Z" fill="#4a2c14" fill-opacity="0.09"/><path d="M398.8 416.5L404.7 418.1L405.7 457.7L399.8 456Z" fill="#4a2c14" fill-opacity="0.12"/><path d="M156.1 345.1L159.2 345.9L159.5 381.5L156.4 380.6Z" fill="#4a2c14" fill-opacity="0.07"/><path d="M584.9 452.6L592.8 454.6L595.1 515.1L587.2 512.7Z" fill="#4a2c14" fill-opacity="0.07"/><path d="M127.2 337.9L129.5 338.4L129.8 389.7L127.5 389Z" fill="#4a2c14" fill-opacity="0.08"/><path d="M236 381.5L239.7 382.5L240.3 422L236.6 420.8Z" fill="#4a2c14" fill-opacity="0.08"/><path d="M135.2 352.9L137.6 353.5L137.7 375.7L135.4 375Z" fill="#4a2c14" fill-opacity="0.07"/><path d="M672.3 475.2L679.7 477L683.7 568.4L676.3 566Z" fill="#4a2c14" fill-opacity="0.11"/><path d="M570.1 457.8L577.3 459.7L580.1 535.7L572.8 533.5Z" fill="#4a2c14" fill-opacity="0.11"/><path d="M80.5 326.2L82.8 326.7L82.9 367.8L80.6 367.1Z" fill="#c9a06a" fill-opacity="0.07"/><path d="M476.8 464.2L481.4 465.6L482.7 505L478 503.6Z" fill="#c9a06a" fill-opacity="0.04"/><path d="M412.6 425.8L418.3 427.3L419.8 485.2L414.1 483.5Z" fill="#c9a06a" fill-opacity="0.08"/><path d="M262.8 395.6L265.8 396.4L266.4 436.9L263.5 436Z" fill="#c9a06a" fill-opacity="0.10"/><path d="M336.6 390.4L341.7 391.7L342.7 438.4L337.5 436.9Z" fill="#4a2c14" fill-opacity="0.05"/><path d="M522.8 437.1L527.7 438.3L530.2 512.5L525.3 511Z" fill="#c9a06a" fill-opacity="0.09"/><path d="M799.2 506.4L808.3 508.7L812.2 583.1L803.1 580.4Z" fill="#4a2c14" fill-opacity="0.06"/><path d="M169.2 354.5L172.5 355.4L173 407.5L169.6 406.4Z" fill="#4a2c14" fill-opacity="0.05"/><path d="M607.6 458.3L614.4 460L617.9 547.7L611.1 545.5Z" fill="#c9a06a" fill-opacity="0.05"/><path d="M143.1 341.9L145.5 342.4L145.9 399L143.5 398.2Z" fill="#4a2c14" fill-opacity="0.11"/><path d="M229.1 372.2L232.3 373.1L232.7 403.9L229.5 403Z" fill="#c9a06a" fill-opacity="0.09"/><path d="M874.3 536.8L882.9 539L888.3 632.8L879.7 630.1Z" fill="#c9a06a" fill-opacity="0.06"/><path d="M76.2 338.4L78 338.9L78.1 367.4L76.3 366.8Z" fill="#4a2c14" fill-opacity="0.11"/><path d="M513.7 441.2L519.5 442.7L521.1 490.5L515.2 488.8Z" fill="#4a2c14" fill-opacity="0.12"/><path d="M171 377L174.4 377.9L174.7 404.6L171.2 403.6Z" fill="#c9a06a" fill-opacity="0.08"/><path d="M584.6 452.6L591.1 454.2L594.4 540.2L587.8 538.2Z" fill="#4a2c14" fill-opacity="0.06"/><path d="M89.6 328.4L92 329L92.2 382L89.8 381.3Z" fill="#4a2c14" fill-opacity="0.06"/><path d="M250.5 368.8L255 369.9L255.9 433.6L251.5 432.2Z" fill="#4a2c14" fill-opacity="0.12"/><path d="M430 413.8L435.1 415.1L437.2 490.7L432 489.1Z" fill="#4a2c14" fill-opacity="0.06"/><path d="M73.9 329.2L76.5 329.8L76.6 377.1L74 376.3Z" fill="#4a2c14" fill-opacity="0.07"/><path d="M66.6 322.7L68.7 323.2L68.7 353.9L66.6 353.3Z" fill="#4a2c14" fill-opacity="0.05"/><path d="M340.3 409.5L344.5 410.6L345.6 461.9L341.4 460.5Z" fill="#4a2c14" fill-opacity="0.05"/><path d="M541.4 444.9L547.2 446.4L549.6 515.7L543.8 513.9Z" fill="#c9a06a" fill-opacity="0.10"/><path d="M526.1 437.9L533 439.6L535.8 521.8L528.9 519.6Z" fill="#4a2c14" fill-opacity="0.11"/><path d="M149.1 343.3L152.5 344.2L152.9 401.2L149.5 400.1Z" fill="#c9a06a" fill-opacity="0.05"/><path d="M375.3 423.8L379.1 424.8L380.2 472.8L376.4 471.6Z" fill="#c9a06a" fill-opacity="0.11"/><path d="M573.2 451.9L579.8 453.6L581.9 509.9L575.3 507.9Z" fill="#4a2c14" fill-opacity="0.12"/><path d="M469.4 461.1L475.7 462.9L476.9 503.3L470.6 501.2Z" fill="#c9a06a" fill-opacity="0.11"/><path d="M403.2 407.1L409.1 408.6L410.6 468.1L404.7 466.3Z" fill="#4a2c14" fill-opacity="0.10"/><path d="M87.2 327.8L90.1 328.6L90.3 381.5L87.3 380.5Z" fill="#c9a06a" fill-opacity="0.09"/><path d="M286.1 407.1L289.6 408L290.2 444.4L286.7 443.3Z" fill="#4a2c14" fill-opacity="0.10"/><path d="M47 317.7L49.6 318.4L49.7 368.6L47 367.8Z" fill="#c9a06a" fill-opacity="0.06"/><path d="M936.1 585.7L947.1 588.7L950.2 639.1L939.2 635.7Z" fill="#4a2c14" fill-opacity="0.11"/><path d="M102.3 354.9L105.2 355.7L105.3 384.6L102.4 383.7Z" fill="#4a2c14" fill-opacity="0.06"/><path d="M423.8 412.3L427.9 413.3L429.9 488.4L425.8 487.2Z" fill="#4a2c14" fill-opacity="0.10"/><path d="M517.3 452.7L523.5 454.3L525.6 518.6L519.5 516.6Z" fill="#4a2c14" fill-opacity="0.07"/><path d="M894.3 581.9L903.7 584.5L906.9 638.7L897.4 635.7Z" fill="#4a2c14" fill-opacity="0.09"/><path d="M908.4 565.1L917.1 567.4L921.6 643.3L912.9 640.6Z" fill="#4a2c14" fill-opacity="0.10"/><path d="M295.5 380.1L299.2 381L300.3 443.2L296.6 442Z" fill="#c9a06a" fill-opacity="0.10"/><path d="M66.7 322.7L69.5 323.4L69.7 374.9L66.8 374Z" fill="#4a2c14" fill-opacity="0.07"/><path d="M564.3 459.4L570.3 460.9L573 533.5L566.9 531.6Z" fill="#4a2c14" fill-opacity="0.06"/><path d="M356.4 395.3L360.8 396.5L362.2 458.3L357.7 457Z" fill="#4a2c14" fill-opacity="0.05"/><path d="M700.1 481.5L708.5 483.6L712.9 577.6L704.3 574.9Z" fill="#c9a06a" fill-opacity="0.07"/><path d="M248.2 368.2L251.8 369.1L252.7 432.6L249.1 431.5Z" fill="#4a2c14" fill-opacity="0.11"/><path d="M476.8 425.5L482.3 426.9L484.7 505.7L479.2 504Z" fill="#4a2c14" fill-opacity="0.06"/><path d="M677.5 508.2L683.9 510L686.5 569.3L680.1 567.3Z" fill="#4a2c14" fill-opacity="0.04"/><path d="M758.5 507.1L764.8 508.8L766.5 542.6L760.1 540.8Z" fill="#c9a06a" fill-opacity="0.09"/><path d="M456 429L462 430.6L464 499.2L458 497.3Z" fill="#4a2c14" fill-opacity="0.05"/><path d="M701.1 481.8L709.7 483.9L713.7 569.6L705 567Z" fill="#4a2c14" fill-opacity="0.05"/><path d="M69.2 323.3L71.8 324L71.9 362.8L69.2 362Z" fill="#4a2c14" fill-opacity="0.06"/><path d="M760.4 496.7L769.8 499L773.2 566.9L763.8 564.1Z" fill="#c9a06a" fill-opacity="0.07"/><path d="M501.6 431.8L508.2 433.4L510 489L503.4 487Z" fill="#4a2c14" fill-opacity="0.10"/><path d="M112.8 334.3L115.5 334.9L115.8 389.5L113.1 388.6Z" fill="#4a2c14" fill-opacity="0.08"/><path d="M115.4 334.9L118.5 335.7L118.8 390.4L115.7 389.4Z" fill="#c9a06a" fill-opacity="0.10"/><path d="M295.4 380.1L300.4 381.3L301.6 448L296.6 446.4Z" fill="#c9a06a" fill-opacity="0.04"/><path d="M714.1 485L723.1 487.3L726.7 564.1L717.6 561.3Z" fill="#4a2c14" fill-opacity="0.06"/><path d="M83.7 338.8L86.6 339.6L86.8 380.3L83.8 379.4Z" fill="#4a2c14" fill-opacity="0.11"/><path d="M52.9 319.2L54.9 319.7L54.9 360.5L53 359.9Z" fill="#4a2c14" fill-opacity="0.09"/><path d="M649.3 494.1L655.2 495.7L657.9 560.3L652 558.4Z" fill="#c9a06a" fill-opacity="0.10"/><path d="M412.3 409.4L418.3 410.9L419.9 474.9L413.9 473.1Z" fill="#4a2c14" fill-opacity="0.04"/><path d="M881.3 573.7L890.3 576.2L893.7 634.5L884.7 631.7Z" fill="#c9a06a" fill-opacity="0.11"/><path d="M406.4 431.1L412.2 432.7L413.4 476.3L407.5 474.5Z" fill="#c9a06a" fill-opacity="0.05"/><path d="M736.7 490.7L743.4 492.4L748.1 588.7L741.3 586.5Z" fill="#c9a06a" fill-opacity="0.10"/><path d="M74.6 324.7L76.5 325.2L76.7 374.9L74.8 374.3Z" fill="#4a2c14" fill-opacity="0.07"/><path d="M155.5 345L158.5 345.7L158.8 375.1L155.8 374.2Z" fill="#c9a06a" fill-opacity="0.10"/><path d="M625.8 466.3L633 468.1L636.5 553.5L629.2 551.2Z" fill="#4a2c14" fill-opacity="0.06"/><path d="M340.2 391.3L345.5 392.6L346.1 423.2L340.9 421.7Z" fill="#4a2c14" fill-opacity="0.08"/><path d="M64.1 322L66.4 322.6L66.4 361.1L64.2 360.4Z" fill="#4a2c14" fill-opacity="0.06"/><path d="M252.4 369.3L255.2 370L256.1 433.7L253.4 432.8Z" fill="#4a2c14" fill-opacity="0.12"/><path d="M195.9 358.6L199.8 359.6L200.4 416.1L196.5 414.9Z" fill="#4a2c14" fill-opacity="0.12"/><path d="M901.7 532.1L909.6 534.1L916 641.6L908 639.1Z" fill="#c9a06a" fill-opacity="0.07"/><path d="M202.1 357L204.6 357.6L205.2 417.7L202.8 416.9Z" fill="#c9a06a" fill-opacity="0.07"/><path d="M142.8 351.1L145.3 351.8L145.6 391.4L143.1 390.7Z" fill="#c9a06a" fill-opacity="0.09"/><path d="M152.6 344.2L155.6 345L156.1 400.9L153 399.9Z" fill="#4a2c14" fill-opacity="0.10"/><path d="M673.4 474.8L682.3 477.1L685.9 556.7L676.9 553.9Z" fill="#4a2c14" fill-opacity="0.11"/><path d="M255.1 369.9L259.6 371.1L260.4 425.4L255.9 424Z" fill="#4a2c14" fill-opacity="0.07"/><path d="M351.6 423.3L355.3 424.3L355.9 452.5L352.2 451.4Z" fill="#4a2c14" fill-opacity="0.10"/><path d="M263.5 373.2L267 374.1L267.4 402.7L264 401.7Z" fill="#4a2c14" fill-opacity="0.11"/><path d="M830.6 557L840.8 559.8L844 618.9L833.8 615.7Z" fill="#4a2c14" fill-opacity="0.06"/><path d="M205.3 357.5L209.1 358.4L209.8 413.9L206 412.7Z" fill="#4a2c14" fill-opacity="0.10"/><path d="M259.1 377L262.7 378L263.6 436.1L260 434.9Z" fill="#4a2c14" fill-opacity="0.07"/><path d="M229.1 391L233.4 392.2L233.7 417.5L229.4 416.2Z" fill="#4a2c14" fill-opacity="0.09"/><path d="M411.9 429.7L417.5 431.1L418.9 485L413.3 483.2Z" fill="#c9a06a" fill-opacity="0.09"/><path d="M835.5 515.5L844.4 517.7L848.1 583.9L839.1 581.3Z" fill="#c9a06a" fill-opacity="0.07"/><path d="M413.4 445.8L417.9 447.1L418.9 484.9L414.3 483.5Z" fill="#4a2c14" fill-opacity="0.09"/><path d="M592.2 454.5L598 455.9L601.3 542.4L595.5 540.6Z" fill="#4a2c14" fill-opacity="0.07"/><path d="M699 485.6L707 487.6L708.7 523.8L700.6 521.6Z" fill="#c9a06a" fill-opacity="0.04"/><path d="M109.5 333.4L112.1 334.1L112.3 388.4L109.7 387.6Z" fill="#c9a06a" fill-opacity="0.11"/><path d="M133.1 339.3L135.3 339.9L135.7 395L133.5 394.4Z" fill="#4a2c14" fill-opacity="0.09"/><path d="M122.3 336.6L124.4 337.2L124.6 364.6L122.5 364Z" fill="#4a2c14" fill-opacity="0.12"/><path d="M815.8 524.2L824.2 526.3L826.9 576.3L818.5 573.8Z" fill="#4a2c14" fill-opacity="0.10"/><path d="M337.4 390.6L341.2 391.5L342 431L338.3 429.9Z" fill="#4a2c14" fill-opacity="0.08"/><path d="M43.9 317L45.7 317.4L45.8 351.7L43.9 351.2Z" fill="#c9a06a" fill-opacity="0.08"/><path d="M163.9 347.1L167.2 347.9L167.7 405.8L164.4 404.8Z" fill="#c9a06a" fill-opacity="0.09"/><path d="M134.8 339.8L137.2 340.4L137.5 396.3L135.2 395.6Z" fill="#c9a06a" fill-opacity="0.09"/><path d="M538.6 461L546 462.9L547 492.7L539.6 490.6Z" fill="#c9a06a" fill-opacity="0.05"/><path d="M344.4 418.5L347.9 419.5L348.8 462.9L345.3 461.8Z" fill="#c9a06a" fill-opacity="0.08"/></g>
<linearGradient id="fg" gradientUnits="userSpaceOnUse" x1="100" y1="0" x2="900" y2="0"><stop offset="0" stop-color="#c08a4e" stop-opacity="0"/><stop offset="1" stop-color="#c08a4e" stop-opacity=".3"/></linearGradient>
<polygon points="40,316 958,546.2 965,657 40,365.6" fill="url(#fg)" />
<line x1="40" y1="316" x2="958" y2="546.2" stroke="#2a1a0c" stroke-width="1" />
<line x1="40" y1="365.6" x2="965" y2="656.5" stroke="#2a1a0c" stroke-width="1" />
<line x1="303" y1="451" x2="313" y2="548" stroke="#5a78d8" stroke-width="0.9" stroke-dasharray="1 2"/>
</svg>

<!-- PALETTE -->
<div id="palette" class="abs">
<div class="ptl" style="left:4.5px"></div><div class="ptl" style="left:16.5px"></div><div class="ptl" style="left:29px"></div>
<div class="cell" style="left:1.5px;top:12.0px"><svg width="19" height="19" style="position:absolute;left:.5px;top:.5px"><use href="#i-sel"/></svg></div>
<div class="cell" style="left:24.5px;top:12.0px"><svg width="19" height="19" style="position:absolute;left:.5px;top:.5px"><use href="#i-component"/></svg></div>
<div class="cell" style="left:1.5px;top:34.5px"><svg width="19" height="19" style="position:absolute;left:.5px;top:.5px"><use href="#i-paint"/></svg></div>
<div class="cell" style="left:24.5px;top:34.5px"><svg width="19" height="19" style="position:absolute;left:.5px;top:.5px"><use href="#i-eraser"/></svg></div>
<div class="cell" style="left:1.5px;top:64.0px"><svg width="19" height="19" style="position:absolute;left:.5px;top:.5px"><use href="#i-pencil"/></svg></div>
<div class="cell" style="left:24.5px;top:64.0px"><svg width="19" height="19" style="position:absolute;left:.5px;top:.5px"><use href="#i-freehand"/></svg></div>
<div class="cell" style="left:1.5px;top:86.5px"><svg width="19" height="19" style="position:absolute;left:.5px;top:.5px"><use href="#i-rect"/></svg></div>
<div class="cell" style="left:24.5px;top:86.5px"><svg width="19" height="19" style="position:absolute;left:.5px;top:.5px"><use href="#i-rrect"/></svg></div>
<div class="cell" style="left:1.5px;top:109.0px"><svg width="19" height="19" style="position:absolute;left:.5px;top:.5px"><use href="#i-circle"/></svg></div>
<div class="cell" style="left:24.5px;top:109.0px"><svg width="19" height="19" style="position:absolute;left:.5px;top:.5px"><use href="#i-polygon"/></svg></div>
<div class="cell" style="left:1.5px;top:131.5px"><svg width="19" height="19" style="position:absolute;left:.5px;top:.5px"><use href="#i-arc"/></svg></div>
<div class="cell" style="left:24.5px;top:131.5px"><svg width="19" height="19" style="position:absolute;left:.5px;top:.5px"><use href="#i-arc2"/></svg></div>
<div class="cell" style="left:1.5px;top:154.0px"><svg width="19" height="19" style="position:absolute;left:.5px;top:.5px"><use href="#i-arc3"/></svg></div>
<div class="cell" style="left:24.5px;top:154.0px"><svg width="19" height="19" style="position:absolute;left:.5px;top:.5px"><use href="#i-pie"/></svg></div>
<div class="cell" style="left:1.5px;top:183.3px"><svg width="19" height="19" style="position:absolute;left:.5px;top:.5px"><use href="#i-move"/></svg></div>
<div class="cell" style="left:24.5px;top:183.3px"><svg width="19" height="19" style="position:absolute;left:.5px;top:.5px"><use href="#i-pushpull"/></svg></div>
<div class="cell" style="left:1.5px;top:205.8px"><svg width="19" height="19" style="position:absolute;left:.5px;top:.5px"><use href="#i-rotate"/></svg></div>
<div class="cell" style="left:24.5px;top:205.8px"><svg width="19" height="19" style="position:absolute;left:.5px;top:.5px"><use href="#i-followme"/></svg></div>
<div class="cell" style="left:1.5px;top:228.3px"><svg width="19" height="19" style="position:absolute;left:.5px;top:.5px"><use href="#i-scale"/></svg></div>
<div class="cell" style="left:24.5px;top:228.3px"><svg width="19" height="19" style="position:absolute;left:.5px;top:.5px"><use href="#i-offset"/></svg></div>
<div class="cell" style="left:1.5px;top:258.0px"><svg width="19" height="19" style="position:absolute;left:.5px;top:.5px"><use href="#i-tape"/></svg></div>
<div class="cell" style="left:24.5px;top:258.0px"><svg width="19" height="19" style="position:absolute;left:.5px;top:.5px"><use href="#i-dim"/></svg></div>
<div class="cell" style="left:1.5px;top:280.5px"><svg width="19" height="19" style="position:absolute;left:.5px;top:.5px"><use href="#i-protractor"/></svg></div>
<div class="cell" style="left:24.5px;top:280.5px"><svg width="19" height="19" style="position:absolute;left:.5px;top:.5px"><use href="#i-text"/></svg></div>
<div class="cell" style="left:1.5px;top:303.0px"><svg width="19" height="19" style="position:absolute;left:.5px;top:.5px"><use href="#i-axes"/></svg></div>
<div class="cell" style="left:24.5px;top:303.0px"><svg width="19" height="19" style="position:absolute;left:.5px;top:.5px"><use href="#i-3dtext"/></svg></div>
<div class="cell sel" style="left:1.5px;top:332.0px"><svg width="19" height="19" style="position:absolute;left:.5px;top:.5px"><use href="#i-orbit"/></svg></div>
<div class="cell" style="left:24.5px;top:332.0px"><svg width="19" height="19" style="position:absolute;left:.5px;top:.5px"><use href="#i-pan"/></svg></div>
<div class="cell" style="left:1.5px;top:354.5px"><svg width="19" height="19" style="position:absolute;left:.5px;top:.5px"><use href="#i-zoom"/></svg></div>
<div class="cell" style="left:24.5px;top:354.5px"><svg width="19" height="19" style="position:absolute;left:.5px;top:.5px"><use href="#i-zoomwin"/></svg></div>
<div class="cell" style="left:1.5px;top:377.0px"><svg width="19" height="19" style="position:absolute;left:.5px;top:.5px"><use href="#i-zoomext"/></svg></div>
<div class="cell" style="left:24.5px;top:377.0px"><svg width="19" height="19" style="position:absolute;left:.5px;top:.5px"><use href="#i-prev"/></svg></div>
<div class="cell" style="left:1.5px;top:406.3px"><svg width="19" height="19" style="position:absolute;left:.5px;top:.5px"><use href="#i-poscam"/></svg></div>
<div class="cell" style="left:24.5px;top:406.3px"><svg width="19" height="19" style="position:absolute;left:.5px;top:.5px"><use href="#i-walk"/></svg></div>
<div class="cell" style="left:1.5px;top:428.8px"><svg width="19" height="19" style="position:absolute;left:.5px;top:.5px"><use href="#i-look"/></svg></div>
<div class="cell" style="left:24.5px;top:428.8px"><svg width="19" height="19" style="position:absolute;left:.5px;top:.5px"><use href="#i-section"/></svg></div>
</div>
<div id="toolbar" class="abs" style="left:0;top:0;width:990px;height:54px">
<svg class="abs" style="left:6.5px;top:34.5px;" width="13" height="13"><use href="#i-sel"/></svg>
<svg class="abs" style="left:27.8px;top:33.5px;" width="15" height="15"><use href="#i-eraser"/></svg>
<svg class="abs" style="left:49.5px;top:33.5px;" width="15" height="15"><use href="#i-pencil"/></svg>
<svg class="abs" style="left:75.5px;top:33.5px;" width="15" height="15"><use href="#i-arc2"/></svg>
<svg class="abs" style="left:102.5px;top:33.5px;" width="15" height="15"><use href="#i-rect"/></svg>
<svg class="abs" style="left:128.5px;top:33.5px;" width="15" height="15"><use href="#i-pushpull"/></svg>
<svg class="abs" style="left:150.5px;top:33.5px;" width="15" height="15"><use href="#i-offset"/></svg>
<svg class="abs" style="left:172.5px;top:33.5px;" width="15" height="15"><use href="#i-move"/></svg>
<svg class="abs" style="left:195.0px;top:33.5px;" width="15" height="15"><use href="#i-rotate"/></svg>
<svg class="abs" style="left:216.0px;top:33.5px;" width="15" height="15"><use href="#i-scale"/></svg>
<svg class="abs" style="left:239.0px;top:33.5px;" width="15" height="15"><use href="#i-tape"/></svg>
<svg class="abs" style="left:260.5px;top:33.5px;" width="15" height="15"><use href="#i-text"/></svg>
<svg class="abs" style="left:282.5px;top:33.5px;" width="15" height="15"><use href="#i-paint"/></svg>
<svg class="abs" style="left:65.0px;top:40px" width="5" height="3.5"><use href="#i-dd"/></svg>
<svg class="abs" style="left:91.5px;top:40px" width="5" height="3.5"><use href="#i-dd"/></svg>
<svg class="abs" style="left:118.0px;top:40px" width="5" height="3.5"><use href="#i-dd"/></svg>
<div class="abs" style="left:301px;top:31px;width:21.5px;height:21px;background:#c4c4c4;border-radius:2px"></div>
<svg class="abs" style="left:304.2px;top:33.5px;" width="15" height="15"><use href="#i-orbit"/></svg>
<div class="abs seg" style="left:326px;top:34.5px;width:143px;height:13px"></div>
<div class="abs" style="left:346.5px;top:35.5px;width:1px;height:11px;background:#dcdcdc"></div>
<div class="abs" style="left:367.0px;top:35.5px;width:1px;height:11px;background:#dcdcdc"></div>
<div class="abs" style="left:387.5px;top:35.5px;width:1px;height:11px;background:#dcdcdc"></div>
<div class="abs" style="left:408.0px;top:35.5px;width:1px;height:11px;background:#dcdcdc"></div>
<div class="abs" style="left:428.5px;top:35.5px;width:1px;height:11px;background:#dcdcdc"></div>
<div class="abs" style="left:449.0px;top:35.5px;width:1px;height:11px;background:#dcdcdc"></div>
<svg class="abs" style="left:329.0px;top:35.0px;--f:#5a9ad0;--s:#2a4a6a;" width="12" height="12"><use href="#i-cube"/></svg>
<svg class="abs" style="left:350.7px;top:35.0px;--f:#f4f4f4;--s:#333;" width="12" height="12"><use href="#i-cube"/></svg>
<svg class="abs" style="left:371.5px;top:35.0px;--f:#e8e8e8;--s:#333;" width="12" height="12"><use href="#i-cube"/></svg>
<svg class="abs" style="left:392.0px;top:35.0px;--f:#fff;--s:#777;" width="12" height="12"><use href="#i-cube"/></svg>
<svg class="abs" style="left:412.5px;top:35.0px;--f:#a6a38e;--s:#555;" width="12" height="12"><use href="#i-cube"/></svg>
<svg class="abs" style="left:433.0px;top:35.0px;--f:#2a2a20;--s:#111;" width="12" height="12"><use href="#i-cube"/></svg>
<svg class="abs" style="left:455.0px;top:35.0px;--f:#4a8ac8;--s:#8a7a40;" width="12" height="12"><use href="#i-cube"/></svg>
<svg class="abs" style="left:480.0px;top:33.5px;" width="15" height="15"><use href="#i-pan"/></svg>
<svg class="abs" style="left:501.5px;top:33.5px;" width="15" height="15"><use href="#i-zoom"/></svg>
<svg class="abs" style="left:523.5px;top:33.5px;" width="15" height="15"><use href="#i-zoomext"/></svg>
<svg class="abs" style="left:546.5px;top:34px" width="13" height="14" viewBox="0 0 13 14"><path d="M.5 1.5 4.5.5l4 1.5 4-1v11.5l-4 1-4-1.5-4 1z" fill="#7a9a4a" stroke="#3a4a2a" stroke-width=".8"/><path d="M4.5.5v11.5M8.5 2v11.5" stroke="#3a4a2a" stroke-width=".5"/><path d="M5 3c3 1 5 4 6 9" stroke="#e8d070" stroke-width="1.2" fill="none"/><path d="M1 8l3-2" stroke="#d8e0a0" stroke-width="1"/></svg>
<svg class="abs" style="left:567.5px;top:33.5px" width="15" height="15" viewBox="0 0 15 15"><path d="M1 6.5 7.5 9.5 14 6.5 13 11 7 14 2 11z" fill="#3c3c3c"/><path d="M1.5 5 8 1.5 13.5 4.5 13 8 7 10.5 1.5 8z" fill="#d8302a" stroke="#5a1a16" stroke-width=".6"/><path d="M5 6.5c1.5.2 2.500 1 2.700 2.300M5.200 4.800c2.500.2 4.300 1.600 4.600 3.600" stroke="#fff" stroke-width=".9" fill="none"/></svg>
<svg class="abs" style="left:590px;top:33.5px" width="15" height="15" viewBox="0 0 15 15"><path d="M1 7.5 7.5 10.5 14 7.5 12.5 11.5 7.5 14 2.5 11.5z" fill="#3a3a3a"/><path d="M1 6 7.5 2.5 14 6 7.5 10z" fill="#d8302a" stroke="#5a1a16" stroke-width=".6"/><ellipse cx="7.5" cy="6" rx="3" ry="1.5" fill="#f2a8a4"/><path d="M3.5 11.800 7.5 13.200 11.5 11.800" stroke="#e8e8e8" stroke-width=".8" fill="none"/></svg>
<svg class="abs" style="left:612px;top:34px;opacity:.55" width="15" height="14" viewBox="0 0 15 14"><path d="M1.5 2.5h8v9h-8z" fill="none" stroke="#e8506a" stroke-width="1.2"/><path d="M4 5h6v6H4z" fill="#f8d0d8" stroke="#e8506a" stroke-width=".8"/><path d="M8 9h3.5V7.5L14.5 10 11.5 12.5V11H8z" fill="#4a9ae8"/></svg>
<svg class="abs" style="left:635.5px;top:33.5px" width="15" height="15" viewBox="0 0 15 15"><circle cx="5" cy="4.5" r="3" fill="#1a1a1a"/><circle cx="10.5" cy="4.5" r="3" fill="#1a1a1a"/><path d="M3 6h4v7H3zM8.5 6h4v7h-4z" fill="#1a1a1a"/><circle cx="5" cy="4.5" r="1.1" fill="#eee"/><circle cx="10.5" cy="4.5" r="1.1" fill="#eee"/><path d="M1 11h5M8 11.5h6" stroke="#1a1a1a" stroke-width="1.6"/><path d="M4 10h2M9.5 10h2" stroke="#ddd" stroke-width=".8"/></svg>
<svg class="abs" style="left:657.5px;top:33.5px" width="15" height="15" viewBox="0 0 15 15"><circle cx="5" cy="4.5" r="3" fill="#1a1a1a"/><circle cx="10.5" cy="4.5" r="3" fill="#1a1a1a"/><path d="M3 6h4v7H3zM8.5 6h4v7h-4z" fill="#1a1a1a"/><circle cx="5" cy="4.5" r="1.1" fill="#eee"/><circle cx="10.5" cy="4.5" r="1.1" fill="#eee"/><path d="M1 11h5M8 11.5h6" stroke="#1a1a1a" stroke-width="1.6"/><path d="M4 10h2M9.5 10h2" stroke="#ddd" stroke-width=".8"/></svg>
<svg class="abs" style="left:679px;top:34px" width="15" height="14" viewBox="0 0 15 14"><rect x="4" y="1" width="10" height="11.5" fill="#f0f0f0" stroke="#555" stroke-width=".7"/><rect x="4" y="1" width="10" height="2.5" fill="#d8302a"/><path d="M9 5.5h4M9 7.5h4M9 9.5h4" stroke="#666" stroke-width=".9"/><path d="M1 4 5 3l3.5 1.5L7.5 10 4.5 13 1.5 10z" fill="#e8e8e8" stroke="#d8302a" stroke-width="1.2"/><path d="M3 6l2 4 2-4.5" stroke="#c8201a" stroke-width=".9" fill="none"/></svg>
<svg class="abs" style="left:700px;top:33.5px" width="15" height="15" viewBox="0 0 15 15"><path d="M1 4.5 11.5 3 10 13.5 3.5 11z" fill="#2a7ad8" stroke="#1a4a98" stroke-width=".7"/><path d="M1 4.5 4 6.5 11.5 3" stroke="#1a4a98" stroke-width=".6" fill="none"/><path d="M11 3.5 13 .8" stroke="#222" stroke-width="1.5"/></svg>
<svg class="abs" style="left:722px;top:34px" width="14" height="14" viewBox="0 0 14 14"><path d="M1 5.5 7.5 1 13 5 10.5 11.5 4 13z" fill="#8ab4dc" stroke="#3a5a7a" stroke-width=".8"/><path d="M1 5.5 6.5 8 13 5M6.5 8 4 13" stroke="#3a5a7a" stroke-width=".6" fill="none"/></svg>
<svg class="abs" style="left:744px;top:34px" width="14" height="14" viewBox="0 0 14 14"><path d="M1.5 5.5 6 1.5 11 3 12.5 9 8 13 3 11z" fill="#fff" stroke="#2a6ac8" stroke-width="1.6"/><path d="M7 3 12 4.5 11.5 9 7.5 8z" fill="#a6a38e" stroke="#444" stroke-width=".6"/><path d="M6 6 9 7v3L6 9z" fill="#555"/></svg>
<div class="abs seg" style="left:766px;top:34.5px;width:102px;height:13px"></div>
<div class="abs" style="left:783px;top:35.5px;width:1px;height:11px;background:#dcdcdc"></div>
<div class="abs" style="left:800px;top:35.5px;width:1px;height:11px;background:#dcdcdc"></div>
<div class="abs" style="left:817px;top:35.5px;width:1px;height:11px;background:#dcdcdc"></div>
<div class="abs" style="left:834px;top:35.5px;width:1px;height:11px;background:#dcdcdc"></div>
<div class="abs" style="left:851px;top:35.5px;width:1px;height:11px;background:#dcdcdc"></div>
<svg class="abs" style="left:767px;top:35px" width="12" height="12" viewBox="0 0 12 12"><path d="M1 4 5 1.5 11 3.5 10.5 8 6.5 10.5 1.5 8z" fill="#a6a38e" stroke="#222" stroke-width=".8"/><path d="M1 4 6 6 11 3.5M6 6l.5 4.5" stroke="#222" stroke-width=".6" fill="none"/><path d="M4 6.5 6 7.5v2L4 8.5z" fill="#fff"/></svg>
<svg class="abs" style="left:784.5px;top:35px" width="11" height="12" viewBox="0 0 11 12"><path d="M1.5 2.5 5.5 1l4 1.5v8l-4 1-4-1z" fill="#a6a38e" stroke="#3a3a32" stroke-width=".8"/><path d="M5.5 1v10.5" stroke="#3a3a32" stroke-width=".5"/></svg>
<svg class="abs" style="left:802px;top:35px" width="12" height="12" viewBox="0 0 12 12"><path d="M1 6 6 1.5 11 6H9.5v5h-7V6z" fill="#fff" stroke="#111" stroke-width="1.1"/><rect x="5" y="7" width="2" height="4" fill="#111"/></svg>
<svg class="abs" style="left:819px;top:35px" width="12" height="12" viewBox="0 0 12 12"><path d="M1.5 4.5 3 2h6l1.5 2.5V11h-9z" fill="#fff" stroke="#111" stroke-width="1"/><path d="M1.5 4.5h9v2h-9z" fill="#333"/></svg>
<svg class="abs" style="left:836px;top:35px" width="12" height="12" viewBox="0 0 12 12"><path d="M1.5 4.5 3 2h4V1h2v1l1.5 2.5V11h-9z" fill="#fff" stroke="#111" stroke-width="1"/><path d="M1.5 4.5h9v2h-9z" fill="#333"/></svg>
<svg class="abs" style="left:853.5px;top:35px" width="12" height="12" viewBox="0 0 12 12"><path d="M1 6 6 1.5 11 6H9.5v5h-7V6z" fill="#fff" stroke="#111" stroke-width="1.1"/></svg>
<svg class="abs" style="left:877.5px;top:33.5px;opacity:.75;" width="15" height="15"><use href="#i-component"/></svg>
</div>

<svg class="abs" style="left:4px;top:552px" width="66" height="15" viewBox="0 0 66 15"><circle cx="7.5" cy="7.5" r="6" fill="#e8e8e8" stroke="#777" stroke-width=".9"/><circle cx="7.5" cy="5.8" r="1.7" fill="none" stroke="#555" stroke-width=".9"/><path d="M7.5 7.5v4" stroke="#555" stroke-width="1"/><circle cx="23.5" cy="7.5" r="6" fill="#fff" stroke="#111" stroke-width="1.3"/><circle cx="23.5" cy="4.5" r="1.1" fill="#111"/><path d="M22.3 6.5h2.4v4.5h-2.4z" fill="#111"/><circle cx="39.5" cy="7.5" r="6" fill="#bdbdbd" stroke="#8a8a8a" stroke-width=".9"/><circle cx="39.5" cy="5.5" r="2.2" fill="#8a8a8a"/><path d="M35.5 11.5c.5-3 7.5-3 8 0z" fill="#8a8a8a"/><circle cx="58.5" cy="7.5" r="6" fill="#1f4f9a" stroke="#123a7a" stroke-width=".8"/><text x="56" y="11" font-size="9.5" font-weight="bold" font-family="Liberation Sans,sans-serif" fill="#fff">?</text></svg>
<!-- MENUBAR -->
<div id="menubar" class="abs">
  <span style="left:38px;font-weight:bold;font-size:9.8px">SketchUp</span>
  <span style="left:96px">File</span>
  <span style="left:124px">Edit</span>
  <span style="left:154px">View</span>
  <span style="left:188px">Draw</span>
  <span style="left:224px;letter-spacing:-.3px">Camera</span>
  <span style="left:271px">Tools</span>
  <span style="left:308px">Window</span>
  <span style="left:356px">Help</span>
<svg class="abs" style="left:13px;top:1.5px" width="11" height="12.5" viewBox="0 0 22 26"><path d="M15.2 0c.2 1.6-.5 3.2-1.4 4.3-1 1.2-2.6 2.1-4.1 2-.2-1.6.6-3.2 1.5-4.2C12.2.9 13.9.1 15.2 0zM20.5 8.9c-.2.1-2.7 1.6-2.7 4.7 0 3.6 3.2 4.9 3.3 4.9 0 .1-.5 1.8-1.7 3.5-1 1.5-2.1 3-3.8 3-1.6 0-2.1-1-4-1s-2.5 1-4 1c-1.6.1-2.9-1.6-3.9-3.1C1.5 18.8.0 13.4 2.2 9.7c1.1-1.9 3-3 5.1-3.1 1.6 0 3.1 1.1 4 1.1s2.8-1.3 4.7-1.1c.8 0 3.1.3 4.5 2.3z" fill="#2b2b2b"/></svg>
<svg class="abs" style="left:554px;top:2px" width="15" height="11" viewBox="0 0 15 11"><path d="M1 6.5C1 3 4.5 1.5 7.5 2.5 10 1 14 2.5 14 6s-3.5 4-6 3C5.5 10.5 1 9.5 1 6.5z" fill="#3a3a3a"/><path d="M3.5 6.5c0-1.5 2-2.5 3.5-1.5s3 2.5 4.5 1.5" stroke="#e4e8eb" stroke-width="1.1" fill="none"/><path d="M5 8c1.5.8 3-.5 4.5-1.8" stroke="#e4e8eb" stroke-width=".9" fill="none"/></svg>
<svg class="abs" style="left:575px;top:2.5px" width="14" height="11" viewBox="0 0 14 11"><path d="M3.5 7.5H1.2V1h11.6v6.5h-2.3" fill="none" stroke="#2b2b2b" stroke-width="1.1"/><path d="M7 5.5 11 10.5H3z" fill="#2b2b2b"/></svg>
<svg class="abs" style="left:596px;top:2px;opacity:.35" width="14" height="12" viewBox="0 0 14 12"><circle cx="8" cy="6" r="4.5" fill="none" stroke="#555" stroke-width="1.1"/><path d="M8 3.5V6l1.8 1.2" stroke="#555" stroke-width="1" fill="none"/><path d="M.5 5 2.5 7.5 4.5 5z" fill="#555"/></svg>
<svg class="abs" style="left:619px;top:2px;opacity:.3" width="8" height="12" viewBox="0 0 8 12"><path d="M1 3.5 6.5 8.5 4 11V1l2.5 2.5L1 8.5" fill="none" stroke="#555" stroke-width="1"/></svg>
<svg class="abs" style="left:636.5px;top:2px" width="16" height="12" viewBox="0 0 16 12"><path d="M1 4.2C5 .4 11 .4 15 4.2" stroke="#2b2b2b" stroke-width="1.5" fill="none"/><path d="M3.3 6.5c2.7-2.5 6.7-2.5 9.4 0" stroke="#2b2b2b" stroke-width="1.5" fill="none"/><path d="M5.6 8.7c1.4-1.3 3.4-1.3 4.8 0" stroke="#2b2b2b" stroke-width="1.5" fill="none"/><circle cx="8" cy="10.7" r="1.1" fill="#2b2b2b"/></svg>
<svg class="abs" style="left:658px;top:2px" width="15" height="12" viewBox="0 0 15 12"><path d="M.8 4.2h2.5L6.5 1.5v9L3.3 7.8H.8z" fill="#2b2b2b"/><path d="M8 4c1 1 1 3 0 4M9.8 2.5c1.8 2 1.8 5 0 7M11.6 1.2c2.4 2.8 2.4 6.8 0 9.6" stroke="#2b2b2b" stroke-width="1" fill="none"/></svg>
<span style="left:680px;font-size:9.3px;letter-spacing:-.5px;word-spacing:-1.4px">24 %</span>
<svg class="abs" style="left:702px;top:3px" width="17" height="9" viewBox="0 0 17 9"><rect x=".6" y=".6" width="13.8" height="7.8" rx="1.5" fill="none" stroke="#2b2b2b" stroke-width="1"/><rect x="2" y="2" width="3.2" height="5" fill="#2b2b2b"/><path d="M15.5 3v3c.8-.2.8-2.8 0-3z" fill="#2b2b2b"/></svg>
<svg class="abs" style="left:728px;top:3.5px" width="11" height="8" viewBox="0 0 11 8"><rect width="11" height="8" fill="#f0f0f0"/><path d="M0 .6h11M0 1.9h11M0 3.2h11M0 4.5h11M0 5.8h11M0 7.1h11" stroke="#c83a3a" stroke-width=".7"/><rect width="5" height="4.3" fill="#3a4a8a"/></svg>
<span style="left:742px;font-size:7.9px;top:.5px">США</span>
<span style="left:770.5px;font-size:9.65px">Ср, 30 марта&nbsp; 11:10</span>
<span style="left:872px;font-size:10.05px">MacBookAir</span>
<svg class="abs" style="left:941px;top:2.5px" width="11" height="11" viewBox="0 0 11 11"><circle cx="4.3" cy="4.3" r="3.2" fill="none" stroke="#2b2b2b" stroke-width="1.1"/><path d="M6.7 6.7 10 10" stroke="#2b2b2b" stroke-width="1.3"/></svg>
<svg class="abs" style="left:961px;top:3.5px" width="13" height="9" viewBox="0 0 13 9"><path d="M3.5 1H13M3.5 4.5H13M3.5 8H13" stroke="#2b2b2b" stroke-width="1.3"/><circle cx="1" cy="1" r=".9" fill="#2b2b2b"/><circle cx="1" cy="4.5" r=".9" fill="#2b2b2b"/><circle cx="1" cy="8" r=".9" fill="#2b2b2b"/></svg>
</div>
</body>
</html>
